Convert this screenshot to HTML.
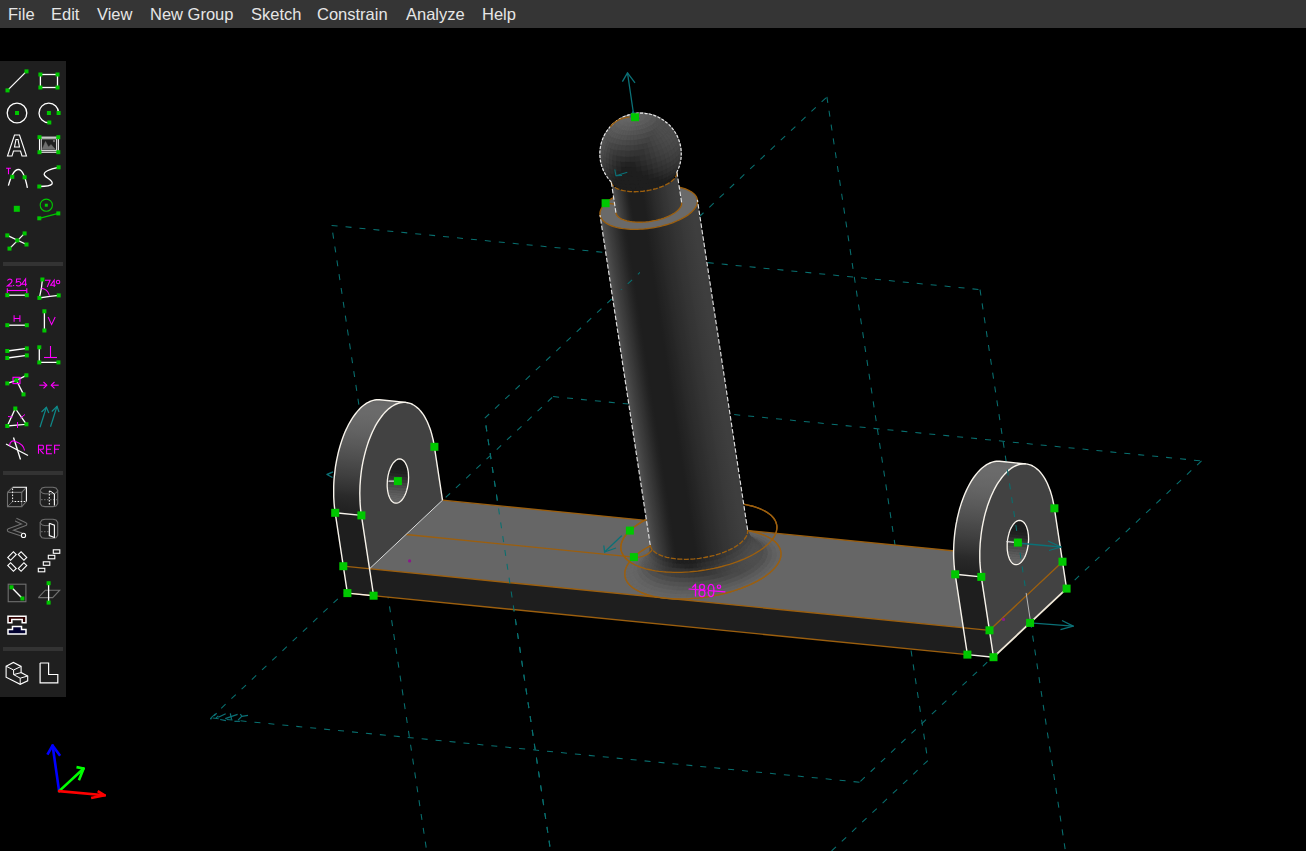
<!DOCTYPE html>
<html><head><meta charset="utf-8"><style>
html,body{margin:0;padding:0;background:#000;width:1306px;height:851px;overflow:hidden}
#menu{position:absolute;left:0;top:0;width:1306px;height:28px;background:#353535}
#menu span{position:absolute;top:4px;font-family:"Liberation Sans",sans-serif;font-size:16.5px;color:#e6e6e6;line-height:20px;white-space:nowrap}
#tb{position:absolute;left:0;top:61px;width:66px;height:636px;background:#1f1f1f}
svg{position:absolute;left:0;top:0}
</style></head><body>
<svg width="1306" height="851" viewBox="0 0 1306 851">
<path d="M980.0,289.6 L1081.0,953.4" stroke="#087070" stroke-width="1.05" fill="none"  stroke-dasharray="6 8" stroke-linecap="butt"/>
<path d="M1081.0,953.4 L432.5,889.1" stroke="#087070" stroke-width="1.05" fill="none"  stroke-dasharray="6 8" stroke-linecap="butt"/>
<path d="M432.5,889.1 L331.6,225.4" stroke="#087070" stroke-width="1.05" fill="none"  stroke-dasharray="6 8" stroke-linecap="butt"/>
<path d="M331.6,225.4 L980.0,289.6" stroke="#087070" stroke-width="1.05" fill="none"  stroke-dasharray="6 8" stroke-linecap="butt"/>
<path d="M826.9,96.9 L927.8,760.6" stroke="#087070" stroke-width="1.05" fill="none"  stroke-dasharray="6 8" stroke-linecap="butt"/>
<path d="M927.8,760.6 L585.7,1081.9" stroke="#087070" stroke-width="1.05" fill="none"  stroke-dasharray="6 8" stroke-linecap="butt"/>
<path d="M585.7,1081.9 L484.8,418.1" stroke="#087070" stroke-width="1.05" fill="none"  stroke-dasharray="6 8" stroke-linecap="butt"/>
<path d="M484.8,418.1 L826.9,96.9" stroke="#087070" stroke-width="1.05" fill="none"  stroke-dasharray="6 8" stroke-linecap="butt"/>
<path d="M1201.5,460.9 L859.5,782.2" stroke="#087070" stroke-width="1.05" fill="none"  stroke-dasharray="6 8" stroke-linecap="butt"/>
<path d="M859.5,782.2 L211.0,717.9" stroke="#087070" stroke-width="1.05" fill="none"  stroke-dasharray="6 8" stroke-linecap="butt"/>
<path d="M211.0,717.9 L553.1,396.6" stroke="#087070" stroke-width="1.05" fill="none"  stroke-dasharray="6 8" stroke-linecap="butt"/>
<path d="M553.1,396.6 L1201.5,460.9" stroke="#087070" stroke-width="1.05" fill="none"  stroke-dasharray="6 8" stroke-linecap="butt"/>
<path d="M347.4,593.1 L335.2,512.8 L361.4,515.4 L369.5,568.8 L963.3,627.7 L989.5,630.3 L993.5,657.2 Z" fill="#1e1e1e"/>
<path d="M369.5,568.8 L963.3,627.7 L1036.3,559.1 L442.5,500.2 Z" fill="#666666"/>
<path d="M967.4,654.6 L955.2,574.3 L981.3,576.9 L993.5,657.2 Z" fill="#1e1e1e"/>
<path d="M442.5,500.2 L1036.3,559.1" stroke="#9c5f0e" stroke-width="1.35" fill="none" stroke-linecap="round" />
<path d="M406.0,534.5 L633.9,557.1" stroke="#9c5f0e" stroke-width="1.35" fill="none" stroke-linecap="round" />
<path d="M771.9,570.8 L773.7,569.0 L775.3,567.2 L776.7,565.3 L778.0,563.5 L779.0,561.7 L779.8,559.9 L780.4,558.1 L780.8,556.3 L780.9,554.5 L780.9,552.7 L780.6,551.0 L780.2,549.3 L779.5,547.7 L778.6,546.1 L777.5,544.5 L776.2,543.0 L774.7,541.6 L773.0,540.2 L771.1,538.9 L769.0,537.7 L766.8,536.5 L764.3,535.4 L761.7,534.4 L759.0,533.5 L756.0,532.6 L753.0,531.8 L749.8,531.2 L746.4,530.6 L743.0,530.1 L739.4,529.7 L735.8,529.3 L732.0,529.1 L728.2,529.0 L724.3,529.0 L720.3,529.1 L716.3,529.2 L712.3,529.5 L708.2,529.8 L704.1,530.3 L700.1,530.8 L696.0,531.5 L691.9,532.2 L687.9,533.0 L683.9,533.9 L680.0,534.9 L676.1,535.9 L672.3,537.1 L668.6,538.3 L665.0,539.5 L661.4,540.9 L658.0,542.3 L654.8,543.8 L651.6,545.3 L648.6,546.9 L645.7,548.5 L643.0,550.1 L640.5,551.8 L638.1,553.6 L635.9,555.3 L633.9,557.1 L632.1,558.9 L630.5,560.7 L629.1,562.6 L627.9,564.4 L626.8,566.2 L626.0,568.1 L625.4,569.9 L625.0,571.7 L624.9,573.4 L624.9,575.2 L625.2,576.9 L625.6,578.6 L626.3,580.2 L627.2,581.8 L628.3,583.4 L629.6,584.9 L631.1,586.3 L632.8,587.7 L634.7,589.0 L636.8,590.2 L639.1,591.4 L641.5,592.5 L644.1,593.5 L646.9,594.5 L649.8,595.3 L652.9,596.1 L656.1,596.8 L659.4,597.4 L662.8,597.9 L666.4,598.3 L670.1,598.6 L673.8,598.8 L677.6,598.9 L681.5,598.9 L685.5,598.9 L689.5,598.7 L693.5,598.4 L697.6,598.1 L701.7,597.6 L705.8,597.1 L709.9,596.4 L713.9,595.7 L717.9,594.9 L721.9,594.0 L725.9,593.0 L729.7,592.0 L733.5,590.9 L737.2,589.7 L740.9,588.4 L744.4,587.0 L747.8,585.6 L751.1,584.2 L754.2,582.6 L757.2,581.1 L760.1,579.4 L762.8,577.8 L765.3,576.1 L767.7,574.3 L769.9,572.6 L771.9,570.8" stroke="#9c5f0e" stroke-width="1.35" fill="none" stroke-linejoin="round" />
<path d="M767.9,544.2 L769.7,542.4 L771.3,540.6 L772.7,538.8 L773.9,537.0 L775.0,535.1 L775.8,533.3 L776.4,531.5 L776.7,529.7 L776.9,527.9 L776.9,526.2 L776.6,524.5 L776.1,522.8 L775.5,521.1 L774.6,519.5 L773.5,518.0 L772.2,516.5 L770.7,515.1 L769.0,513.7 L767.1,512.4 L765.0,511.1 L762.7,510.0 L760.3,508.9 L757.7,507.8 L754.9,506.9 L752.0,506.0 L748.9,505.3 L745.7,504.6 L742.4,504.0 L739.0,503.5 L735.4,503.1 L731.7,502.8 L728.0,502.6 L724.2,502.5 L720.3,502.4 L716.3,502.5 L712.3,502.7 L708.3,502.9 L704.2,503.3 L700.1,503.7 L696.0,504.3 L691.9,504.9 L687.9,505.6 L683.8,506.4 L679.9,507.3 L675.9,508.3 L672.1,509.4 L668.3,510.5 L664.5,511.7 L660.9,513.0 L657.4,514.3 L654.0,515.7 L650.7,517.2 L647.6,518.7 L644.6,520.3 L641.7,521.9 L639.0,523.6 L636.5,525.3 L634.1,527.0 L631.9,528.8 L629.9,530.6 L628.1,532.4 L626.5,534.2 L625.0,536.0 L623.8,537.8 L622.8,539.7 L622.0,541.5 L621.4,543.3 L621.0,545.1 L620.8,546.9 L620.9,548.6 L621.1,550.4 L621.6,552.0 L622.3,553.7 L623.2,555.3 L624.3,556.8 L625.6,558.3 L627.1,559.8 L628.8,561.1 L630.7,562.4 L632.8,563.7 L635.0,564.9 L637.5,566.0 L640.1,567.0 L642.8,567.9 L645.7,568.8 L648.8,569.5 L652.0,570.2 L655.3,570.8 L658.8,571.3 L662.4,571.7 L666.0,572.0 L669.8,572.2 L673.6,572.4 L677.5,572.4 L681.5,572.3 L685.5,572.1 L689.5,571.9 L693.6,571.5 L697.7,571.1 L701.7,570.5 L705.8,569.9 L709.9,569.2 L713.9,568.4 L717.9,567.5 L721.8,566.5 L725.7,565.4 L729.5,564.3 L733.2,563.1 L736.8,561.8 L740.3,560.5 L743.8,559.1 L747.0,557.6 L750.2,556.1 L753.2,554.5 L756.0,552.9 L758.8,551.2 L761.3,549.5 L763.7,547.8 L765.8,546.0 L767.9,544.2" stroke="#9c5f0e" stroke-width="1.35" fill="none" stroke-linejoin="round" />
<defs><linearGradient id="tg1" gradientUnits="userSpaceOnUse" x1="405.9" y1="402.4" x2="394.3" y2="518.6"><stop offset="0.0000" stop-color="#616161"/><stop offset="0.0009" stop-color="#636363"/><stop offset="0.0036" stop-color="#656565"/><stop offset="0.0082" stop-color="#666666"/><stop offset="0.0145" stop-color="#676767"/><stop offset="0.0225" stop-color="#696969"/><stop offset="0.0324" stop-color="#696969"/><stop offset="0.0439" stop-color="#6a6a6a"/><stop offset="0.0572" stop-color="#6b6b6b"/><stop offset="0.0721" stop-color="#6b6b6b"/><stop offset="0.0886" stop-color="#6b6b6b"/><stop offset="0.1067" stop-color="#6a6a6a"/><stop offset="0.1263" stop-color="#6a6a6a"/><stop offset="0.1474" stop-color="#696969"/><stop offset="0.1699" stop-color="#686868"/><stop offset="0.1937" stop-color="#676767"/><stop offset="0.2189" stop-color="#666666"/><stop offset="0.2452" stop-color="#646464"/><stop offset="0.2727" stop-color="#636363"/><stop offset="0.3013" stop-color="#616161"/><stop offset="0.3310" stop-color="#5f5f5f"/><stop offset="0.3615" stop-color="#5c5c5c"/><stop offset="0.3929" stop-color="#5a5a5a"/><stop offset="0.4250" stop-color="#575757"/><stop offset="0.4578" stop-color="#545454"/><stop offset="0.4912" stop-color="#515151"/><stop offset="0.5251" stop-color="#4e4e4e"/><stop offset="0.5594" stop-color="#4a4a4a"/><stop offset="0.5940" stop-color="#474747"/><stop offset="0.6288" stop-color="#434343"/><stop offset="0.6638" stop-color="#404040"/><stop offset="0.6988" stop-color="#3c3c3c"/><stop offset="0.7337" stop-color="#383838"/><stop offset="0.7685" stop-color="#343434"/><stop offset="0.8030" stop-color="#303030"/><stop offset="0.8372" stop-color="#2b2b2b"/><stop offset="0.8710" stop-color="#282828"/><stop offset="0.9042" stop-color="#262626"/><stop offset="0.9369" stop-color="#242424"/><stop offset="0.9688" stop-color="#222222"/><stop offset="1.0000" stop-color="#202020"/></linearGradient></defs>
<path d="M407.8,402.7 L406.5,402.5 L405.2,402.4 L403.8,402.4 L402.5,402.4 L401.2,402.6 L399.8,402.9 L398.5,403.2 L397.1,403.7 L395.8,404.2 L394.5,404.9 L393.1,405.6 L391.8,406.5 L390.5,407.4 L389.1,408.4 L387.8,409.6 L386.5,410.8 L385.3,412.1 L384.0,413.4 L382.8,414.9 L381.5,416.5 L380.3,418.1 L379.2,419.8 L378.0,421.6 L376.9,423.4 L375.8,425.4 L374.7,427.4 L373.6,429.4 L372.6,431.6 L371.6,433.8 L370.7,436.0 L369.7,438.3 L368.8,440.7 L368.0,443.1 L367.2,445.6 L366.4,448.1 L365.7,450.6 L365.0,453.2 L364.3,455.8 L363.7,458.5 L363.1,461.1 L362.6,463.8 L362.1,466.6 L361.7,469.3 L361.3,472.1 L360.9,474.8 L360.6,477.6 L360.4,480.4 L360.2,483.2 L360.0,486.0 L359.9,488.7 L359.8,491.5 L359.8,494.2 L359.8,497.0 L359.9,499.7 L360.0,502.4 L360.2,505.1 L360.4,507.7 L360.7,510.3 L361.0,512.9 L361.4,515.4 L335.2,512.8 L334.8,510.3 L334.5,507.7 L334.3,505.1 L334.1,502.5 L333.9,499.8 L333.8,497.1 L333.7,494.4 L333.6,491.7 L333.7,488.9 L333.7,486.1 L333.8,483.4 L334.0,480.6 L334.2,477.8 L334.5,475.0 L334.8,472.2 L335.1,469.5 L335.5,466.7 L335.9,464.0 L336.4,461.2 L337.0,458.5 L337.5,455.9 L338.1,453.2 L338.8,450.6 L339.5,448.0 L340.2,445.5 L341.0,443.0 L341.8,440.5 L342.7,438.1 L343.6,435.7 L344.5,433.4 L345.4,431.2 L346.4,429.0 L347.5,426.8 L348.5,424.8 L349.6,422.8 L350.7,420.8 L351.8,419.0 L353.0,417.2 L354.2,415.5 L355.4,413.9 L356.6,412.3 L357.8,410.8 L359.1,409.5 L360.4,408.2 L361.7,407.0 L363.0,405.8 L364.3,404.8 L365.6,403.9 L366.9,403.0 L368.3,402.3 L369.6,401.6 L371.0,401.1 L372.3,400.6 L373.7,400.3 L375.0,400.0 L376.3,399.8 L377.7,399.8 L379.0,399.8 L380.3,399.9 L381.6,400.1 Z" fill="url(#tg1)"/>
<path d="M369.5,568.8 L361.4,515.4 L360.9,511.9 L360.5,508.3 L360.2,504.6 L360.0,500.9 L359.9,497.1 L359.8,493.3 L359.9,489.5 L360.0,485.7 L360.3,481.8 L360.6,477.9 L361.0,474.1 L361.5,470.2 L362.1,466.4 L362.8,462.6 L363.6,458.9 L364.5,455.2 L365.4,451.6 L366.4,448.1 L367.5,444.6 L368.6,441.2 L369.9,437.9 L371.2,434.8 L372.5,431.7 L374.0,428.7 L375.4,425.9 L377.0,423.2 L378.6,420.7 L380.2,418.3 L381.9,416.0 L383.6,413.9 L385.3,412.0 L387.1,410.2 L388.9,408.6 L390.8,407.2 L392.6,406.0 L394.5,404.9 L396.3,404.0 L398.2,403.3 L400.1,402.8 L401.9,402.5 L403.8,402.4 L405.6,402.4 L407.4,402.7 L409.2,403.1 L411.0,403.7 L412.7,404.5 L414.4,405.5 L416.1,406.7 L417.7,408.1 L419.3,409.6 L420.8,411.3 L422.3,413.2 L423.7,415.2 L425.0,417.4 L426.3,419.8 L427.5,422.3 L428.6,424.9 L429.7,427.7 L430.7,430.6 L431.6,433.6 L432.4,436.8 L433.2,440.0 L433.8,443.3 L434.4,446.8 L442.5,500.2 Z" fill="#424242"/>
<clipPath id="hc1081"><path d="M408.2,471.4 L407.8,469.5 L407.4,467.7 L406.8,466.1 L406.2,464.6 L405.5,463.2 L404.7,462.0 L403.9,461.0 L403.0,460.2 L402.1,459.6 L401.1,459.2 L400.1,459.0 L399.0,459.0 L398.0,459.2 L396.9,459.7 L395.9,460.3 L394.9,461.2 L393.9,462.2 L392.9,463.4 L392.0,464.8 L391.2,466.4 L390.4,468.1 L389.7,469.9 L389.0,471.8 L388.5,473.8 L388.0,475.9 L387.7,478.0 L387.4,480.2 L387.3,482.4 L387.2,484.5 L387.2,486.6 L387.4,488.7 L387.6,490.7 L388.0,492.6 L388.4,494.4 L388.9,496.1 L389.6,497.6 L390.3,499.0 L391.0,500.2 L391.9,501.2 L392.8,502.0 L393.7,502.6 L394.7,503.0 L395.7,503.2 L396.8,503.2 L397.8,502.9 L398.9,502.5 L399.9,501.8 L400.9,501.0 L401.9,500.0 L402.9,498.7 L403.8,497.3 L404.6,495.8 L405.4,494.1 L406.1,492.3 L406.7,490.4 L407.3,488.3 L407.7,486.3 L408.1,484.1 L408.4,482.0 L408.5,479.8 L408.6,477.6 L408.5,475.5 L408.4,473.4 L408.2,471.4 Z"/></clipPath>
<g clip-path="url(#hc1081)">
<path d="M408.2,471.4 L407.8,469.5 L407.4,467.7 L406.8,466.1 L406.2,464.6 L405.5,463.2 L404.7,462.0 L403.9,461.0 L403.0,460.2 L402.1,459.6 L401.1,459.2 L400.1,459.0 L399.0,459.0 L398.0,459.2 L396.9,459.7 L395.9,460.3 L394.9,461.2 L393.9,462.2 L392.9,463.4 L392.0,464.8 L391.2,466.4 L390.4,468.1 L389.7,469.9 L389.0,471.8 L388.5,473.8 L388.0,475.9 L387.7,478.0 L387.4,480.2 L387.3,482.4 L387.2,484.5 L387.2,486.6 L387.4,488.7 L387.6,490.7 L388.0,492.6 L388.4,494.4 L388.9,496.1 L389.6,497.6 L390.3,499.0 L391.0,500.2 L391.9,501.2 L392.8,502.0 L393.7,502.6 L394.7,503.0 L395.7,503.2 L396.8,503.2 L397.8,502.9 L398.9,502.5 L399.9,501.8 L400.9,501.0 L401.9,500.0 L402.9,498.7 L403.8,497.3 L404.6,495.8 L405.4,494.1 L406.1,492.3 L406.7,490.4 L407.3,488.3 L407.7,486.3 L408.1,484.1 L408.4,482.0 L408.5,479.8 L408.6,477.6 L408.5,475.5 L408.4,473.4 L408.2,471.4 Z" fill="#181818"/>
<path d="M408.2,471.4 L407.7,468.9 L381.5,466.3 L382.0,468.8 Z" fill="#1e1e1e" stroke="#1e1e1e" stroke-width="0.7"/>
<path d="M407.7,468.9 L407.0,466.6 L380.9,464.0 L381.5,466.3 Z" fill="#1e1e1e" stroke="#1e1e1e" stroke-width="0.7"/>
<path d="M407.0,466.6 L406.2,464.6 L380.0,462.0 L380.9,464.0 Z" fill="#1e1e1e" stroke="#1e1e1e" stroke-width="0.7"/>
<path d="M406.2,464.6 L405.3,462.8 L379.1,460.2 L380.0,462.0 Z" fill="#1e1e1e" stroke="#1e1e1e" stroke-width="0.7"/>
<path d="M405.3,462.8 L404.2,461.3 L378.0,458.7 L379.1,460.2 Z" fill="#1e1e1e" stroke="#1e1e1e" stroke-width="0.7"/>
<path d="M404.2,461.3 L403.0,460.2 L376.8,457.6 L378.0,458.7 Z" fill="#1e1e1e" stroke="#1e1e1e" stroke-width="0.7"/>
<path d="M403.0,460.2 L401.7,459.4 L375.6,456.8 L376.8,457.6 Z" fill="#1e1e1e" stroke="#1e1e1e" stroke-width="0.7"/>
<path d="M401.7,459.4 L400.4,459.0 L374.2,456.4 L375.6,456.8 Z" fill="#1e1e1e" stroke="#1e1e1e" stroke-width="0.7"/>
<path d="M400.4,459.0 L399.0,459.0 L372.9,456.4 L374.2,456.4 Z" fill="#1e1e1e" stroke="#1e1e1e" stroke-width="0.7"/>
<path d="M399.0,459.0 L397.6,459.3 L371.5,456.8 L372.9,456.4 Z" fill="#1e1e1e" stroke="#1e1e1e" stroke-width="0.7"/>
<path d="M397.6,459.3 L396.2,460.1 L370.1,457.5 L371.5,456.8 Z" fill="#1e1e1e" stroke="#1e1e1e" stroke-width="0.7"/>
<path d="M396.2,460.1 L394.9,461.2 L368.7,458.6 L370.1,457.5 Z" fill="#1e1e1e" stroke="#1e1e1e" stroke-width="0.7"/>
<path d="M394.9,461.2 L393.6,462.6 L367.4,460.0 L368.7,458.6 Z" fill="#1e1e1e" stroke="#1e1e1e" stroke-width="0.7"/>
<path d="M393.6,462.6 L392.3,464.3 L366.1,461.7 L367.4,460.0 Z" fill="#1e1e1e" stroke="#1e1e1e" stroke-width="0.7"/>
<path d="M392.3,464.3 L391.2,466.4 L365.0,463.8 L366.1,461.7 Z" fill="#1e1e1e" stroke="#1e1e1e" stroke-width="0.7"/>
<path d="M391.2,466.4 L390.1,468.7 L364.0,466.1 L365.0,463.8 Z" fill="#1e1e1e" stroke="#1e1e1e" stroke-width="0.7"/>
<path d="M390.1,468.7 L389.2,471.1 L363.1,468.6 L364.0,466.1 Z" fill="#1e1e1e" stroke="#1e1e1e" stroke-width="0.7"/>
<path d="M389.2,471.1 L388.5,473.8 L362.3,471.2 L363.1,468.6 Z" fill="#1e1e1e" stroke="#1e1e1e" stroke-width="0.7"/>
<path d="M388.5,473.8 L387.9,476.6 L361.7,474.0 L362.3,471.2 Z" fill="#1e1e1e" stroke="#1e1e1e" stroke-width="0.7"/>
<path d="M387.9,476.6 L387.5,479.5 L361.3,476.9 L361.7,474.0 Z" fill="#1e1e1e" stroke="#1e1e1e" stroke-width="0.7"/>
<path d="M387.5,479.5 L387.3,482.4 L361.1,479.8 L361.3,476.9 Z" fill="#1e1e1e" stroke="#1e1e1e" stroke-width="0.7"/>
<path d="M387.3,482.4 L387.2,485.2 L361.0,482.6 L361.1,479.8 Z" fill="#1e1e1e" stroke="#1e1e1e" stroke-width="0.7"/>
<path d="M387.2,485.2 L387.3,488.0 L361.2,485.4 L361.0,482.6 Z" fill="#1e1e1e" stroke="#1e1e1e" stroke-width="0.7"/>
<path d="M387.3,488.0 L387.6,490.7 L361.5,488.1 L361.2,485.4 Z" fill="#1e1e1e" stroke="#1e1e1e" stroke-width="0.7"/>
<path d="M387.6,490.7 L388.1,493.2 L361.9,490.6 L361.5,488.1 Z" fill="#222222" stroke="#222222" stroke-width="0.7"/>
<path d="M388.1,493.2 L388.8,495.5 L362.6,492.9 L361.9,490.6 Z" fill="#272727" stroke="#272727" stroke-width="0.7"/>
<path d="M388.8,495.5 L389.6,497.6 L363.4,495.0 L362.6,492.9 Z" fill="#303030" stroke="#303030" stroke-width="0.7"/>
<path d="M389.6,497.6 L390.5,499.4 L364.3,496.8 L363.4,495.0 Z" fill="#3a3a3a" stroke="#3a3a3a" stroke-width="0.7"/>
<path d="M390.5,499.4 L391.6,500.8 L365.4,498.3 L364.3,496.8 Z" fill="#434343" stroke="#434343" stroke-width="0.7"/>
<path d="M391.6,500.8 L392.8,502.0 L366.6,499.4 L365.4,498.3 Z" fill="#4b4b4b" stroke="#4b4b4b" stroke-width="0.7"/>
<path d="M392.8,502.0 L394.0,502.7 L367.9,500.2 L366.6,499.4 Z" fill="#525252" stroke="#525252" stroke-width="0.7"/>
<path d="M394.0,502.7 L395.4,503.1 L369.2,500.6 L367.9,500.2 Z" fill="#595959" stroke="#595959" stroke-width="0.7"/>
<path d="M395.4,503.1 L396.8,503.2 L370.6,500.6 L369.2,500.6 Z" fill="#5e5e5e" stroke="#5e5e5e" stroke-width="0.7"/>
<path d="M396.8,503.2 L398.2,502.8 L372.0,500.2 L370.6,500.6 Z" fill="#626262" stroke="#626262" stroke-width="0.7"/>
<path d="M398.2,502.8 L399.6,502.1 L373.4,499.5 L372.0,500.2 Z" fill="#646464" stroke="#646464" stroke-width="0.7"/>
<path d="M399.6,502.1 L400.9,501.0 L374.8,498.4 L373.4,499.5 Z" fill="#666666" stroke="#666666" stroke-width="0.7"/>
<path d="M400.9,501.0 L402.2,499.6 L376.1,497.0 L374.8,498.4 Z" fill="#656565" stroke="#656565" stroke-width="0.7"/>
<path d="M402.2,499.6 L403.5,497.8 L377.3,495.2 L376.1,497.0 Z" fill="#646464" stroke="#646464" stroke-width="0.7"/>
<path d="M403.5,497.8 L404.6,495.8 L378.4,493.2 L377.3,495.2 Z" fill="#616161" stroke="#616161" stroke-width="0.7"/>
<path d="M404.6,495.8 L405.6,493.5 L379.5,490.9 L378.4,493.2 Z" fill="#5d5d5d" stroke="#5d5d5d" stroke-width="0.7"/>
<path d="M405.6,493.5 L406.5,491.0 L380.4,488.4 L379.5,490.9 Z" fill="#585858" stroke="#585858" stroke-width="0.7"/>
<path d="M406.5,491.0 L407.3,488.3 L381.1,485.8 L380.4,488.4 Z" fill="#515151" stroke="#515151" stroke-width="0.7"/>
<path d="M407.3,488.3 L407.9,485.6 L381.7,483.0 L381.1,485.8 Z" fill="#4a4a4a" stroke="#4a4a4a" stroke-width="0.7"/>
<path d="M407.9,485.6 L408.3,482.7 L382.1,480.1 L381.7,483.0 Z" fill="#414141" stroke="#414141" stroke-width="0.7"/>
<path d="M408.3,482.7 L408.5,479.8 L382.4,477.2 L382.1,480.1 Z" fill="#383838" stroke="#383838" stroke-width="0.7"/>
<path d="M408.5,479.8 L408.6,476.9 L382.4,474.3 L382.4,477.2 Z" fill="#2f2f2f" stroke="#2f2f2f" stroke-width="0.7"/>
<path d="M408.6,476.9 L408.5,474.1 L382.3,471.5 L382.4,474.3 Z" fill="#262626" stroke="#262626" stroke-width="0.7"/>
<path d="M408.5,474.1 L408.2,471.4 L382.0,468.8 L382.3,471.5 Z" fill="#212121" stroke="#212121" stroke-width="0.7"/>
</g>
<path d="M771.9,570.8 L774.8,567.8 L770.5,567.2 L767.8,570.1 Z" fill="#646464" stroke="#646464" stroke-width="0.7"/>
<path d="M774.8,567.8 L777.2,564.7 L772.8,564.4 L770.5,567.2 Z" fill="#646464" stroke="#646464" stroke-width="0.7"/>
<path d="M777.2,564.7 L779.0,561.7 L774.5,561.5 L772.8,564.4 Z" fill="#646464" stroke="#646464" stroke-width="0.7"/>
<path d="M779.0,561.7 L780.2,558.7 L775.6,558.6 L774.5,561.5 Z" fill="#646464" stroke="#646464" stroke-width="0.7"/>
<path d="M780.2,558.7 L780.9,555.7 L776.2,555.8 L775.6,558.6 Z" fill="#646464" stroke="#646464" stroke-width="0.7"/>
<path d="M780.9,555.7 L780.9,552.7 L776.3,553.1 L776.2,555.8 Z" fill="#646464" stroke="#646464" stroke-width="0.7"/>
<path d="M780.9,552.7 L780.4,549.9 L775.8,550.4 L776.3,553.1 Z" fill="#646464" stroke="#646464" stroke-width="0.7"/>
<path d="M780.4,549.9 L779.2,547.2 L774.7,547.8 L775.8,550.4 Z" fill="#656565" stroke="#656565" stroke-width="0.7"/>
<path d="M779.2,547.2 L777.5,544.5 L773.1,545.4 L774.7,547.8 Z" fill="#656565" stroke="#656565" stroke-width="0.7"/>
<path d="M777.5,544.5 L775.2,542.1 L770.9,543.0 L773.1,545.4 Z" fill="#656565" stroke="#656565" stroke-width="0.7"/>
<path d="M775.2,542.1 L772.4,539.8 L768.3,540.9 L770.9,543.0 Z" fill="#656565" stroke="#656565" stroke-width="0.7"/>
<path d="M772.4,539.8 L769.0,537.7 L765.1,538.9 L768.3,540.9 Z" fill="#656565" stroke="#656565" stroke-width="0.7"/>
<path d="M769.0,537.7 L765.2,535.8 L761.5,537.1 L765.1,538.9 Z" fill="#656565" stroke="#656565" stroke-width="0.7"/>
<path d="M765.2,535.8 L760.8,534.1 L757.4,535.5 L761.5,537.1 Z" fill="#656565" stroke="#656565" stroke-width="0.7"/>
<path d="M760.8,534.1 L756.0,532.6 L752.9,534.1 L757.4,535.5 Z" fill="#656565" stroke="#656565" stroke-width="0.7"/>
<path d="M756.0,532.6 L750.9,531.4 L748.0,533.0 L752.9,534.1 Z" fill="#656565" stroke="#656565" stroke-width="0.7"/>
<path d="M750.9,531.4 L745.3,530.4 L742.8,532.0 L748.0,533.0 Z" fill="#656565" stroke="#656565" stroke-width="0.7"/>
<path d="M745.3,530.4 L739.4,529.7 L737.2,531.3 L742.8,532.0 Z" fill="#656565" stroke="#656565" stroke-width="0.7"/>
<path d="M739.4,529.7 L733.3,529.2 L731.5,530.9 L737.2,531.3 Z" fill="#666666" stroke="#666666" stroke-width="0.7"/>
<path d="M733.3,529.2 L726.9,529.0 L725.4,530.7 L731.5,530.9 Z" fill="#666666" stroke="#666666" stroke-width="0.7"/>
<path d="M726.9,529.0 L720.3,529.1 L719.3,530.8 L725.4,530.7 Z" fill="#666666" stroke="#666666" stroke-width="0.7"/>
<path d="M720.3,529.1 L713.6,529.4 L713.0,531.1 L719.3,530.8 Z" fill="#666666" stroke="#666666" stroke-width="0.7"/>
<path d="M713.6,529.4 L706.9,530.0 L706.6,531.6 L713.0,531.1 Z" fill="#666666" stroke="#666666" stroke-width="0.7"/>
<path d="M706.9,530.0 L700.1,530.8 L700.2,532.4 L706.6,531.6 Z" fill="#666666" stroke="#666666" stroke-width="0.7"/>
<path d="M700.1,530.8 L693.3,531.9 L693.8,533.5 L700.2,532.4 Z" fill="#666666" stroke="#666666" stroke-width="0.7"/>
<path d="M693.3,531.9 L686.6,533.3 L687.5,534.8 L693.8,533.5 Z" fill="#666666" stroke="#666666" stroke-width="0.7"/>
<path d="M686.6,533.3 L680.0,534.9 L681.3,536.2 L687.5,534.8 Z" fill="#666666" stroke="#666666" stroke-width="0.7"/>
<path d="M680.0,534.9 L673.5,536.7 L675.2,537.9 L681.3,536.2 Z" fill="#666666" stroke="#666666" stroke-width="0.7"/>
<path d="M673.5,536.7 L667.4,538.7 L669.4,539.8 L675.2,537.9 Z" fill="#666666" stroke="#666666" stroke-width="0.7"/>
<path d="M667.4,538.7 L661.4,540.9 L663.8,541.9 L669.4,539.8 Z" fill="#666666" stroke="#666666" stroke-width="0.7"/>
<path d="M661.4,540.9 L655.8,543.3 L658.5,544.2 L663.8,541.9 Z" fill="#666666" stroke="#666666" stroke-width="0.7"/>
<path d="M655.8,543.3 L650.6,545.8 L653.6,546.5 L658.5,544.2 Z" fill="#676767" stroke="#676767" stroke-width="0.7"/>
<path d="M650.6,545.8 L645.7,548.5 L649.0,549.1 L653.6,546.5 Z" fill="#676767" stroke="#676767" stroke-width="0.7"/>
<path d="M645.7,548.5 L641.3,551.3 L644.9,551.7 L649.0,549.1 Z" fill="#676767" stroke="#676767" stroke-width="0.7"/>
<path d="M641.3,551.3 L637.4,554.2 L641.2,554.4 L644.9,551.7 Z" fill="#676767" stroke="#676767" stroke-width="0.7"/>
<path d="M637.4,554.2 L633.9,557.1 L637.9,557.2 L641.2,554.4 Z" fill="#676767" stroke="#676767" stroke-width="0.7"/>
<path d="M633.9,557.1 L631.0,560.1 L635.2,560.0 L637.9,557.2 Z" fill="#676767" stroke="#676767" stroke-width="0.7"/>
<path d="M631.0,560.1 L628.6,563.2 L632.9,562.9 L635.2,560.0 Z" fill="#676767" stroke="#676767" stroke-width="0.7"/>
<path d="M628.6,563.2 L626.8,566.2 L631.2,565.8 L632.9,562.9 Z" fill="#676767" stroke="#676767" stroke-width="0.7"/>
<path d="M626.8,566.2 L625.6,569.3 L630.1,568.6 L631.2,565.8 Z" fill="#676767" stroke="#676767" stroke-width="0.7"/>
<path d="M625.6,569.3 L625.0,572.3 L629.5,571.4 L630.1,568.6 Z" fill="#666666" stroke="#666666" stroke-width="0.7"/>
<path d="M625.0,572.3 L624.9,575.2 L629.4,574.2 L629.5,571.4 Z" fill="#666666" stroke="#666666" stroke-width="0.7"/>
<path d="M624.9,575.2 L625.5,578.0 L630.0,576.9 L629.4,574.2 Z" fill="#666666" stroke="#666666" stroke-width="0.7"/>
<path d="M625.5,578.0 L626.6,580.8 L631.0,579.5 L630.0,576.9 Z" fill="#666666" stroke="#666666" stroke-width="0.7"/>
<path d="M626.6,580.8 L628.3,583.4 L632.6,581.9 L631.0,579.5 Z" fill="#666666" stroke="#666666" stroke-width="0.7"/>
<path d="M628.3,583.4 L630.6,585.8 L634.8,584.2 L632.6,581.9 Z" fill="#666666" stroke="#666666" stroke-width="0.7"/>
<path d="M630.6,585.8 L633.4,588.1 L637.5,586.4 L634.8,584.2 Z" fill="#666666" stroke="#666666" stroke-width="0.7"/>
<path d="M633.4,588.1 L636.8,590.2 L640.6,588.4 L637.5,586.4 Z" fill="#666666" stroke="#666666" stroke-width="0.7"/>
<path d="M636.8,590.2 L640.7,592.2 L644.3,590.2 L640.6,588.4 Z" fill="#666666" stroke="#666666" stroke-width="0.7"/>
<path d="M640.7,592.2 L645.0,593.8 L648.3,591.8 L644.3,590.2 Z" fill="#666666" stroke="#666666" stroke-width="0.7"/>
<path d="M645.0,593.8 L649.8,595.3 L652.8,593.2 L648.3,591.8 Z" fill="#666666" stroke="#666666" stroke-width="0.7"/>
<path d="M649.8,595.3 L655.0,596.5 L657.7,594.3 L652.8,593.2 Z" fill="#666666" stroke="#666666" stroke-width="0.7"/>
<path d="M655.0,596.5 L660.5,597.5 L663.0,595.2 L657.7,594.3 Z" fill="#666666" stroke="#666666" stroke-width="0.7"/>
<path d="M660.5,597.5 L666.4,598.3 L668.5,595.9 L663.0,595.2 Z" fill="#656565" stroke="#656565" stroke-width="0.7"/>
<path d="M666.4,598.3 L672.5,598.7 L674.3,596.4 L668.5,595.9 Z" fill="#656565" stroke="#656565" stroke-width="0.7"/>
<path d="M672.5,598.7 L678.9,598.9 L680.3,596.5 L674.3,596.4 Z" fill="#656565" stroke="#656565" stroke-width="0.7"/>
<path d="M678.9,598.9 L685.5,598.9 L686.5,596.5 L680.3,596.5 Z" fill="#656565" stroke="#656565" stroke-width="0.7"/>
<path d="M685.5,598.9 L692.2,598.5 L692.8,596.2 L686.5,596.5 Z" fill="#656565" stroke="#656565" stroke-width="0.7"/>
<path d="M692.2,598.5 L699.0,597.9 L699.1,595.6 L692.8,596.2 Z" fill="#656565" stroke="#656565" stroke-width="0.7"/>
<path d="M699.0,597.9 L705.8,597.1 L705.6,594.8 L699.1,595.6 Z" fill="#656565" stroke="#656565" stroke-width="0.7"/>
<path d="M705.8,597.1 L712.6,596.0 L711.9,593.8 L705.6,594.8 Z" fill="#656565" stroke="#656565" stroke-width="0.7"/>
<path d="M712.6,596.0 L719.3,594.6 L718.3,592.5 L711.9,593.8 Z" fill="#656565" stroke="#656565" stroke-width="0.7"/>
<path d="M719.3,594.6 L725.9,593.0 L724.5,591.0 L718.3,592.5 Z" fill="#656565" stroke="#656565" stroke-width="0.7"/>
<path d="M725.9,593.0 L732.3,591.2 L730.5,589.3 L724.5,591.0 Z" fill="#646464" stroke="#646464" stroke-width="0.7"/>
<path d="M732.3,591.2 L738.5,589.2 L736.3,587.4 L730.5,589.3 Z" fill="#646464" stroke="#646464" stroke-width="0.7"/>
<path d="M738.5,589.2 L744.4,587.0 L741.9,585.4 L736.3,587.4 Z" fill="#646464" stroke="#646464" stroke-width="0.7"/>
<path d="M744.4,587.0 L750.0,584.7 L747.2,583.1 L741.9,585.4 Z" fill="#646464" stroke="#646464" stroke-width="0.7"/>
<path d="M750.0,584.7 L755.2,582.1 L752.1,580.7 L747.2,583.1 Z" fill="#646464" stroke="#646464" stroke-width="0.7"/>
<path d="M755.2,582.1 L760.1,579.4 L756.7,578.2 L752.1,580.7 Z" fill="#646464" stroke="#646464" stroke-width="0.7"/>
<path d="M760.1,579.4 L764.5,576.7 L760.8,575.6 L756.7,578.2 Z" fill="#646464" stroke="#646464" stroke-width="0.7"/>
<path d="M764.5,576.7 L768.4,573.8 L764.6,572.9 L760.8,575.6 Z" fill="#646464" stroke="#646464" stroke-width="0.7"/>
<path d="M768.4,573.8 L771.9,570.8 L767.8,570.1 L764.6,572.9 Z" fill="#646464" stroke="#646464" stroke-width="0.7"/>
<path d="M767.8,570.1 L770.5,567.2 L766.3,566.0 L763.7,568.7 Z" fill="#606060" stroke="#606060" stroke-width="0.7"/>
<path d="M770.5,567.2 L772.8,564.4 L768.4,563.3 L766.3,566.0 Z" fill="#606060" stroke="#606060" stroke-width="0.7"/>
<path d="M772.8,564.4 L774.5,561.5 L770.0,560.7 L768.4,563.3 Z" fill="#606060" stroke="#606060" stroke-width="0.7"/>
<path d="M774.5,561.5 L775.6,558.6 L771.1,558.0 L770.0,560.7 Z" fill="#606060" stroke="#606060" stroke-width="0.7"/>
<path d="M775.6,558.6 L776.2,555.8 L771.6,555.3 L771.1,558.0 Z" fill="#606060" stroke="#606060" stroke-width="0.7"/>
<path d="M776.2,555.8 L776.3,553.1 L771.7,552.7 L771.6,555.3 Z" fill="#606060" stroke="#606060" stroke-width="0.7"/>
<path d="M776.3,553.1 L775.8,550.4 L771.2,550.2 L771.7,552.7 Z" fill="#616161" stroke="#616161" stroke-width="0.7"/>
<path d="M775.8,550.4 L774.7,547.8 L770.2,547.8 L771.2,550.2 Z" fill="#616161" stroke="#616161" stroke-width="0.7"/>
<path d="M774.7,547.8 L773.1,545.4 L768.7,545.5 L770.2,547.8 Z" fill="#616161" stroke="#616161" stroke-width="0.7"/>
<path d="M773.1,545.4 L770.9,543.0 L766.7,543.3 L768.7,545.5 Z" fill="#616161" stroke="#616161" stroke-width="0.7"/>
<path d="M770.9,543.0 L768.3,540.9 L764.1,541.3 L766.7,543.3 Z" fill="#616161" stroke="#616161" stroke-width="0.7"/>
<path d="M768.3,540.9 L765.1,538.9 L761.2,539.4 L764.1,541.3 Z" fill="#626262" stroke="#626262" stroke-width="0.7"/>
<path d="M765.1,538.9 L761.5,537.1 L757.8,537.7 L761.2,539.4 Z" fill="#626262" stroke="#626262" stroke-width="0.7"/>
<path d="M761.5,537.1 L757.4,535.5 L753.9,536.2 L757.8,537.7 Z" fill="#626262" stroke="#626262" stroke-width="0.7"/>
<path d="M757.4,535.5 L752.9,534.1 L749.7,534.9 L753.9,536.2 Z" fill="#636363" stroke="#636363" stroke-width="0.7"/>
<path d="M752.9,534.1 L748.0,533.0 L745.1,533.8 L749.7,534.9 Z" fill="#636363" stroke="#636363" stroke-width="0.7"/>
<path d="M748.0,533.0 L742.8,532.0 L740.2,533.0 L745.1,533.8 Z" fill="#636363" stroke="#636363" stroke-width="0.7"/>
<path d="M742.8,532.0 L737.2,531.3 L735.0,532.3 L740.2,533.0 Z" fill="#636363" stroke="#636363" stroke-width="0.7"/>
<path d="M737.2,531.3 L731.5,530.9 L729.6,531.9 L735.0,532.3 Z" fill="#646464" stroke="#646464" stroke-width="0.7"/>
<path d="M731.5,530.9 L725.4,530.7 L723.9,531.7 L729.6,531.9 Z" fill="#646464" stroke="#646464" stroke-width="0.7"/>
<path d="M725.4,530.7 L719.3,530.8 L718.1,531.8 L723.9,531.7 Z" fill="#646464" stroke="#646464" stroke-width="0.7"/>
<path d="M719.3,530.8 L713.0,531.1 L712.2,532.1 L718.1,531.8 Z" fill="#656565" stroke="#656565" stroke-width="0.7"/>
<path d="M713.0,531.1 L706.6,531.6 L706.2,532.6 L712.2,532.1 Z" fill="#656565" stroke="#656565" stroke-width="0.7"/>
<path d="M706.6,531.6 L700.2,532.4 L700.2,533.4 L706.2,532.6 Z" fill="#656565" stroke="#656565" stroke-width="0.7"/>
<path d="M700.2,532.4 L693.8,533.5 L694.2,534.3 L700.2,533.4 Z" fill="#656565" stroke="#656565" stroke-width="0.7"/>
<path d="M693.8,533.5 L687.5,534.8 L688.2,535.5 L694.2,534.3 Z" fill="#666666" stroke="#666666" stroke-width="0.7"/>
<path d="M687.5,534.8 L681.3,536.2 L682.4,536.9 L688.2,535.5 Z" fill="#666666" stroke="#666666" stroke-width="0.7"/>
<path d="M681.3,536.2 L675.2,537.9 L676.8,538.5 L682.4,536.9 Z" fill="#666666" stroke="#666666" stroke-width="0.7"/>
<path d="M675.2,537.9 L669.4,539.8 L671.3,540.3 L676.8,538.5 Z" fill="#666666" stroke="#666666" stroke-width="0.7"/>
<path d="M669.4,539.8 L663.8,541.9 L666.0,542.3 L671.3,540.3 Z" fill="#666666" stroke="#666666" stroke-width="0.7"/>
<path d="M663.8,541.9 L658.5,544.2 L661.1,544.4 L666.0,542.3 Z" fill="#676767" stroke="#676767" stroke-width="0.7"/>
<path d="M658.5,544.2 L653.6,546.5 L656.4,546.6 L661.1,544.4 Z" fill="#676767" stroke="#676767" stroke-width="0.7"/>
<path d="M653.6,546.5 L649.0,549.1 L652.2,549.0 L656.4,546.6 Z" fill="#676767" stroke="#676767" stroke-width="0.7"/>
<path d="M649.0,549.1 L644.9,551.7 L648.3,551.4 L652.2,549.0 Z" fill="#676767" stroke="#676767" stroke-width="0.7"/>
<path d="M644.9,551.7 L641.2,554.4 L644.8,554.0 L648.3,551.4 Z" fill="#676767" stroke="#676767" stroke-width="0.7"/>
<path d="M641.2,554.4 L637.9,557.2 L641.7,556.6 L644.8,554.0 Z" fill="#676767" stroke="#676767" stroke-width="0.7"/>
<path d="M637.9,557.2 L635.2,560.0 L639.1,559.3 L641.7,556.6 Z" fill="#676767" stroke="#676767" stroke-width="0.7"/>
<path d="M635.2,560.0 L632.9,562.9 L637.0,562.0 L639.1,559.3 Z" fill="#676767" stroke="#676767" stroke-width="0.7"/>
<path d="M632.9,562.9 L631.2,565.8 L635.4,564.7 L637.0,562.0 Z" fill="#676767" stroke="#676767" stroke-width="0.7"/>
<path d="M631.2,565.8 L630.1,568.6 L634.4,567.3 L635.4,564.7 Z" fill="#676767" stroke="#676767" stroke-width="0.7"/>
<path d="M630.1,568.6 L629.5,571.4 L633.8,570.0 L634.4,567.3 Z" fill="#676767" stroke="#676767" stroke-width="0.7"/>
<path d="M629.5,571.4 L629.4,574.2 L633.8,572.6 L633.8,570.0 Z" fill="#666666" stroke="#666666" stroke-width="0.7"/>
<path d="M629.4,574.2 L630.0,576.9 L634.2,575.1 L633.8,572.6 Z" fill="#666666" stroke="#666666" stroke-width="0.7"/>
<path d="M630.0,576.9 L631.0,579.5 L635.2,577.5 L634.2,575.1 Z" fill="#666666" stroke="#666666" stroke-width="0.7"/>
<path d="M631.0,579.5 L632.6,581.9 L636.8,579.8 L635.2,577.5 Z" fill="#666666" stroke="#666666" stroke-width="0.7"/>
<path d="M632.6,581.9 L634.8,584.2 L638.8,582.0 L636.8,579.8 Z" fill="#666666" stroke="#666666" stroke-width="0.7"/>
<path d="M634.8,584.2 L637.5,586.4 L641.3,584.0 L638.8,582.0 Z" fill="#656565" stroke="#656565" stroke-width="0.7"/>
<path d="M637.5,586.4 L640.6,588.4 L644.3,585.9 L641.3,584.0 Z" fill="#656565" stroke="#656565" stroke-width="0.7"/>
<path d="M640.6,588.4 L644.3,590.2 L647.7,587.6 L644.3,585.9 Z" fill="#656565" stroke="#656565" stroke-width="0.7"/>
<path d="M644.3,590.2 L648.3,591.8 L651.5,589.1 L647.7,587.6 Z" fill="#656565" stroke="#656565" stroke-width="0.7"/>
<path d="M648.3,591.8 L652.8,593.2 L655.7,590.4 L651.5,589.1 Z" fill="#646464" stroke="#646464" stroke-width="0.7"/>
<path d="M652.8,593.2 L657.7,594.3 L660.3,591.5 L655.7,590.4 Z" fill="#646464" stroke="#646464" stroke-width="0.7"/>
<path d="M657.7,594.3 L663.0,595.2 L665.2,592.3 L660.3,591.5 Z" fill="#646464" stroke="#646464" stroke-width="0.7"/>
<path d="M663.0,595.2 L668.5,595.9 L670.4,593.0 L665.2,592.3 Z" fill="#636363" stroke="#636363" stroke-width="0.7"/>
<path d="M668.5,595.9 L674.3,596.4 L675.9,593.4 L670.4,593.0 Z" fill="#636363" stroke="#636363" stroke-width="0.7"/>
<path d="M674.3,596.4 L680.3,596.5 L681.5,593.6 L675.9,593.4 Z" fill="#636363" stroke="#636363" stroke-width="0.7"/>
<path d="M680.3,596.5 L686.5,596.5 L687.3,593.5 L681.5,593.6 Z" fill="#636363" stroke="#636363" stroke-width="0.7"/>
<path d="M686.5,596.5 L692.8,596.2 L693.2,593.2 L687.3,593.5 Z" fill="#626262" stroke="#626262" stroke-width="0.7"/>
<path d="M692.8,596.2 L699.1,595.6 L699.2,592.7 L693.2,593.2 Z" fill="#626262" stroke="#626262" stroke-width="0.7"/>
<path d="M699.1,595.6 L705.6,594.8 L705.2,591.9 L699.2,592.7 Z" fill="#626262" stroke="#626262" stroke-width="0.7"/>
<path d="M705.6,594.8 L711.9,593.8 L711.2,591.0 L705.2,591.9 Z" fill="#616161" stroke="#616161" stroke-width="0.7"/>
<path d="M711.9,593.8 L718.3,592.5 L717.2,589.8 L711.2,591.0 Z" fill="#616161" stroke="#616161" stroke-width="0.7"/>
<path d="M718.3,592.5 L724.5,591.0 L723.0,588.4 L717.2,589.8 Z" fill="#616161" stroke="#616161" stroke-width="0.7"/>
<path d="M724.5,591.0 L730.5,589.3 L728.7,586.8 L723.0,588.4 Z" fill="#616161" stroke="#616161" stroke-width="0.7"/>
<path d="M730.5,589.3 L736.3,587.4 L734.2,585.0 L728.7,586.8 Z" fill="#616161" stroke="#616161" stroke-width="0.7"/>
<path d="M736.3,587.4 L741.9,585.4 L739.4,583.1 L734.2,585.0 Z" fill="#606060" stroke="#606060" stroke-width="0.7"/>
<path d="M741.9,585.4 L747.2,583.1 L744.3,581.0 L739.4,583.1 Z" fill="#606060" stroke="#606060" stroke-width="0.7"/>
<path d="M747.2,583.1 L752.1,580.7 L749.0,578.7 L744.3,581.0 Z" fill="#606060" stroke="#606060" stroke-width="0.7"/>
<path d="M752.1,580.7 L756.7,578.2 L753.3,576.3 L749.0,578.7 Z" fill="#606060" stroke="#606060" stroke-width="0.7"/>
<path d="M756.7,578.2 L760.8,575.6 L757.2,573.9 L753.3,576.3 Z" fill="#606060" stroke="#606060" stroke-width="0.7"/>
<path d="M760.8,575.6 L764.6,572.9 L760.7,571.3 L757.2,573.9 Z" fill="#606060" stroke="#606060" stroke-width="0.7"/>
<path d="M764.6,572.9 L767.8,570.1 L763.7,568.7 L760.7,571.3 Z" fill="#606060" stroke="#606060" stroke-width="0.7"/>
<path d="M763.7,568.7 L766.3,566.0 L762.1,564.2 L759.7,566.7 Z" fill="#5a5a5a" stroke="#5a5a5a" stroke-width="0.7"/>
<path d="M766.3,566.0 L768.4,563.3 L764.1,561.7 L762.1,564.2 Z" fill="#5a5a5a" stroke="#5a5a5a" stroke-width="0.7"/>
<path d="M768.4,563.3 L770.0,560.7 L765.6,559.2 L764.1,561.7 Z" fill="#5a5a5a" stroke="#5a5a5a" stroke-width="0.7"/>
<path d="M770.0,560.7 L771.1,558.0 L766.6,556.7 L765.6,559.2 Z" fill="#5a5a5a" stroke="#5a5a5a" stroke-width="0.7"/>
<path d="M771.1,558.0 L771.6,555.3 L767.2,554.2 L766.6,556.7 Z" fill="#5a5a5a" stroke="#5a5a5a" stroke-width="0.7"/>
<path d="M771.6,555.3 L771.7,552.7 L767.2,551.7 L767.2,554.2 Z" fill="#5b5b5b" stroke="#5b5b5b" stroke-width="0.7"/>
<path d="M771.7,552.7 L771.2,550.2 L766.7,549.4 L767.2,551.7 Z" fill="#5b5b5b" stroke="#5b5b5b" stroke-width="0.7"/>
<path d="M771.2,550.2 L770.2,547.8 L765.8,547.1 L766.7,549.4 Z" fill="#5b5b5b" stroke="#5b5b5b" stroke-width="0.7"/>
<path d="M770.2,547.8 L768.7,545.5 L764.4,545.0 L765.8,547.1 Z" fill="#5c5c5c" stroke="#5c5c5c" stroke-width="0.7"/>
<path d="M768.7,545.5 L766.7,543.3 L762.5,542.9 L764.4,545.0 Z" fill="#5c5c5c" stroke="#5c5c5c" stroke-width="0.7"/>
<path d="M766.7,543.3 L764.1,541.3 L760.1,541.0 L762.5,542.9 Z" fill="#5c5c5c" stroke="#5c5c5c" stroke-width="0.7"/>
<path d="M764.1,541.3 L761.2,539.4 L757.3,539.3 L760.1,541.0 Z" fill="#5d5d5d" stroke="#5d5d5d" stroke-width="0.7"/>
<path d="M761.2,539.4 L757.8,537.7 L754.1,537.7 L757.3,539.3 Z" fill="#5d5d5d" stroke="#5d5d5d" stroke-width="0.7"/>
<path d="M757.8,537.7 L753.9,536.2 L750.5,536.3 L754.1,537.7 Z" fill="#5e5e5e" stroke="#5e5e5e" stroke-width="0.7"/>
<path d="M753.9,536.2 L749.7,534.9 L746.6,535.0 L750.5,536.3 Z" fill="#5e5e5e" stroke="#5e5e5e" stroke-width="0.7"/>
<path d="M749.7,534.9 L745.1,533.8 L742.3,534.0 L746.6,535.0 Z" fill="#5f5f5f" stroke="#5f5f5f" stroke-width="0.7"/>
<path d="M745.1,533.8 L740.2,533.0 L737.7,533.2 L742.3,534.0 Z" fill="#5f5f5f" stroke="#5f5f5f" stroke-width="0.7"/>
<path d="M740.2,533.0 L735.0,532.3 L732.8,532.6 L737.7,533.2 Z" fill="#606060" stroke="#606060" stroke-width="0.7"/>
<path d="M735.0,532.3 L729.6,531.9 L727.7,532.2 L732.8,532.6 Z" fill="#606060" stroke="#606060" stroke-width="0.7"/>
<path d="M729.6,531.9 L723.9,531.7 L722.4,532.0 L727.7,532.2 Z" fill="#616161" stroke="#616161" stroke-width="0.7"/>
<path d="M723.9,531.7 L718.1,531.8 L716.9,532.1 L722.4,532.0 Z" fill="#616161" stroke="#616161" stroke-width="0.7"/>
<path d="M718.1,531.8 L712.2,532.1 L711.4,532.4 L716.9,532.1 Z" fill="#626262" stroke="#626262" stroke-width="0.7"/>
<path d="M712.2,532.1 L706.2,532.6 L705.7,532.9 L711.4,532.4 Z" fill="#626262" stroke="#626262" stroke-width="0.7"/>
<path d="M706.2,532.6 L700.2,533.4 L700.1,533.6 L705.7,532.9 Z" fill="#626262" stroke="#626262" stroke-width="0.7"/>
<path d="M700.2,533.4 L694.2,534.3 L694.5,534.5 L700.1,533.6 Z" fill="#636363" stroke="#636363" stroke-width="0.7"/>
<path d="M694.2,534.3 L688.2,535.5 L688.9,535.6 L694.5,534.5 Z" fill="#636363" stroke="#636363" stroke-width="0.7"/>
<path d="M688.2,535.5 L682.4,536.9 L683.4,536.9 L688.9,535.6 Z" fill="#646464" stroke="#646464" stroke-width="0.7"/>
<path d="M682.4,536.9 L676.8,538.5 L678.1,538.4 L683.4,536.9 Z" fill="#646464" stroke="#646464" stroke-width="0.7"/>
<path d="M676.8,538.5 L671.3,540.3 L673.0,540.1 L678.1,538.4 Z" fill="#646464" stroke="#646464" stroke-width="0.7"/>
<path d="M671.3,540.3 L666.0,542.3 L668.1,541.9 L673.0,540.1 Z" fill="#656565" stroke="#656565" stroke-width="0.7"/>
<path d="M666.0,542.3 L661.1,544.4 L663.4,543.9 L668.1,541.9 Z" fill="#656565" stroke="#656565" stroke-width="0.7"/>
<path d="M661.1,544.4 L656.4,546.6 L659.0,546.0 L663.4,543.9 Z" fill="#656565" stroke="#656565" stroke-width="0.7"/>
<path d="M656.4,546.6 L652.2,549.0 L655.0,548.2 L659.0,546.0 Z" fill="#656565" stroke="#656565" stroke-width="0.7"/>
<path d="M652.2,549.0 L648.3,551.4 L651.4,550.5 L655.0,548.2 Z" fill="#656565" stroke="#656565" stroke-width="0.7"/>
<path d="M648.3,551.4 L644.8,554.0 L648.1,552.9 L651.4,550.5 Z" fill="#656565" stroke="#656565" stroke-width="0.7"/>
<path d="M644.8,554.0 L641.7,556.6 L645.2,555.4 L648.1,552.9 Z" fill="#656565" stroke="#656565" stroke-width="0.7"/>
<path d="M641.7,556.6 L639.1,559.3 L642.8,557.9 L645.2,555.4 Z" fill="#656565" stroke="#656565" stroke-width="0.7"/>
<path d="M639.1,559.3 L637.0,562.0 L640.8,560.4 L642.8,557.9 Z" fill="#656565" stroke="#656565" stroke-width="0.7"/>
<path d="M637.0,562.0 L635.4,564.7 L639.3,562.9 L640.8,560.4 Z" fill="#656565" stroke="#656565" stroke-width="0.7"/>
<path d="M635.4,564.7 L634.4,567.3 L638.3,565.5 L639.3,562.9 Z" fill="#656565" stroke="#656565" stroke-width="0.7"/>
<path d="M634.4,567.3 L633.8,570.0 L637.8,567.9 L638.3,565.5 Z" fill="#656565" stroke="#656565" stroke-width="0.7"/>
<path d="M633.8,570.0 L633.8,572.6 L637.7,570.4 L637.8,567.9 Z" fill="#656565" stroke="#656565" stroke-width="0.7"/>
<path d="M633.8,572.6 L634.2,575.1 L638.2,572.7 L637.7,570.4 Z" fill="#646464" stroke="#646464" stroke-width="0.7"/>
<path d="M634.2,575.1 L635.2,577.5 L639.1,575.0 L638.2,572.7 Z" fill="#646464" stroke="#646464" stroke-width="0.7"/>
<path d="M635.2,577.5 L636.8,579.8 L640.6,577.2 L639.1,575.0 Z" fill="#646464" stroke="#646464" stroke-width="0.7"/>
<path d="M636.8,579.8 L638.8,582.0 L642.5,579.2 L640.6,577.2 Z" fill="#636363" stroke="#636363" stroke-width="0.7"/>
<path d="M638.8,582.0 L641.3,584.0 L644.8,581.1 L642.5,579.2 Z" fill="#636363" stroke="#636363" stroke-width="0.7"/>
<path d="M641.3,584.0 L644.3,585.9 L647.6,582.9 L644.8,581.1 Z" fill="#626262" stroke="#626262" stroke-width="0.7"/>
<path d="M644.3,585.9 L647.7,587.6 L650.8,584.5 L647.6,582.9 Z" fill="#626262" stroke="#626262" stroke-width="0.7"/>
<path d="M647.7,587.6 L651.5,589.1 L654.4,585.9 L650.8,584.5 Z" fill="#626262" stroke="#626262" stroke-width="0.7"/>
<path d="M651.5,589.1 L655.7,590.4 L658.4,587.1 L654.4,585.9 Z" fill="#616161" stroke="#616161" stroke-width="0.7"/>
<path d="M655.7,590.4 L660.3,591.5 L662.7,588.1 L658.4,587.1 Z" fill="#616161" stroke="#616161" stroke-width="0.7"/>
<path d="M660.3,591.5 L665.2,592.3 L667.3,588.9 L662.7,588.1 Z" fill="#606060" stroke="#606060" stroke-width="0.7"/>
<path d="M665.2,592.3 L670.4,593.0 L672.2,589.5 L667.3,588.9 Z" fill="#606060" stroke="#606060" stroke-width="0.7"/>
<path d="M670.4,593.0 L675.9,593.4 L677.3,589.9 L672.2,589.5 Z" fill="#5f5f5f" stroke="#5f5f5f" stroke-width="0.7"/>
<path d="M675.9,593.4 L681.5,593.6 L682.6,590.1 L677.3,589.9 Z" fill="#5f5f5f" stroke="#5f5f5f" stroke-width="0.7"/>
<path d="M681.5,593.6 L687.3,593.5 L688.0,590.0 L682.6,590.1 Z" fill="#5e5e5e" stroke="#5e5e5e" stroke-width="0.7"/>
<path d="M687.3,593.5 L693.2,593.2 L693.6,589.8 L688.0,590.0 Z" fill="#5e5e5e" stroke="#5e5e5e" stroke-width="0.7"/>
<path d="M693.2,593.2 L699.2,592.7 L699.2,589.3 L693.6,589.8 Z" fill="#5d5d5d" stroke="#5d5d5d" stroke-width="0.7"/>
<path d="M699.2,592.7 L705.2,591.9 L704.8,588.6 L699.2,589.3 Z" fill="#5d5d5d" stroke="#5d5d5d" stroke-width="0.7"/>
<path d="M705.2,591.9 L711.2,591.0 L710.5,587.6 L704.8,588.6 Z" fill="#5c5c5c" stroke="#5c5c5c" stroke-width="0.7"/>
<path d="M711.2,591.0 L717.2,589.8 L716.0,586.5 L710.5,587.6 Z" fill="#5c5c5c" stroke="#5c5c5c" stroke-width="0.7"/>
<path d="M717.2,589.8 L723.0,588.4 L721.5,585.2 L716.0,586.5 Z" fill="#5b5b5b" stroke="#5b5b5b" stroke-width="0.7"/>
<path d="M723.0,588.4 L728.7,586.8 L726.8,583.7 L721.5,585.2 Z" fill="#5b5b5b" stroke="#5b5b5b" stroke-width="0.7"/>
<path d="M728.7,586.8 L734.2,585.0 L732.0,582.0 L726.8,583.7 Z" fill="#5b5b5b" stroke="#5b5b5b" stroke-width="0.7"/>
<path d="M734.2,585.0 L739.4,583.1 L736.9,580.2 L732.0,582.0 Z" fill="#5b5b5b" stroke="#5b5b5b" stroke-width="0.7"/>
<path d="M739.4,583.1 L744.3,581.0 L741.5,578.2 L736.9,580.2 Z" fill="#5a5a5a" stroke="#5a5a5a" stroke-width="0.7"/>
<path d="M744.3,581.0 L749.0,578.7 L745.9,576.1 L741.5,578.2 Z" fill="#5a5a5a" stroke="#5a5a5a" stroke-width="0.7"/>
<path d="M749.0,578.7 L753.3,576.3 L749.9,573.9 L745.9,576.1 Z" fill="#5a5a5a" stroke="#5a5a5a" stroke-width="0.7"/>
<path d="M753.3,576.3 L757.2,573.9 L753.6,571.6 L749.9,573.9 Z" fill="#5a5a5a" stroke="#5a5a5a" stroke-width="0.7"/>
<path d="M757.2,573.9 L760.7,571.3 L756.9,569.2 L753.6,571.6 Z" fill="#5a5a5a" stroke="#5a5a5a" stroke-width="0.7"/>
<path d="M760.7,571.3 L763.7,568.7 L759.7,566.7 L756.9,569.2 Z" fill="#5a5a5a" stroke="#5a5a5a" stroke-width="0.7"/>
<path d="M759.7,566.7 L762.1,564.2 L758.2,561.9 L755.9,564.2 Z" fill="#525252" stroke="#525252" stroke-width="0.7"/>
<path d="M762.1,564.2 L764.1,561.7 L760.1,559.5 L758.2,561.9 Z" fill="#525252" stroke="#525252" stroke-width="0.7"/>
<path d="M764.1,561.7 L765.6,559.2 L761.5,557.1 L760.1,559.5 Z" fill="#525252" stroke="#525252" stroke-width="0.7"/>
<path d="M765.6,559.2 L766.6,556.7 L762.4,554.8 L761.5,557.1 Z" fill="#535353" stroke="#535353" stroke-width="0.7"/>
<path d="M766.6,556.7 L767.2,554.2 L762.9,552.4 L762.4,554.8 Z" fill="#535353" stroke="#535353" stroke-width="0.7"/>
<path d="M767.2,554.2 L767.2,551.7 L763.0,550.1 L762.9,552.4 Z" fill="#535353" stroke="#535353" stroke-width="0.7"/>
<path d="M767.2,551.7 L766.7,549.4 L762.5,547.9 L763.0,550.1 Z" fill="#535353" stroke="#535353" stroke-width="0.7"/>
<path d="M766.7,549.4 L765.8,547.1 L761.6,545.8 L762.5,547.9 Z" fill="#545454" stroke="#545454" stroke-width="0.7"/>
<path d="M765.8,547.1 L764.4,545.0 L760.3,543.7 L761.6,545.8 Z" fill="#545454" stroke="#545454" stroke-width="0.7"/>
<path d="M764.4,545.0 L762.5,542.9 L758.5,541.8 L760.3,543.7 Z" fill="#555555" stroke="#555555" stroke-width="0.7"/>
<path d="M762.5,542.9 L760.1,541.0 L756.3,540.0 L758.5,541.8 Z" fill="#555555" stroke="#555555" stroke-width="0.7"/>
<path d="M760.1,541.0 L757.3,539.3 L753.7,538.4 L756.3,540.0 Z" fill="#565656" stroke="#565656" stroke-width="0.7"/>
<path d="M757.3,539.3 L754.1,537.7 L750.7,536.9 L753.7,538.4 Z" fill="#575757" stroke="#575757" stroke-width="0.7"/>
<path d="M754.1,537.7 L750.5,536.3 L747.3,535.6 L750.7,536.9 Z" fill="#575757" stroke="#575757" stroke-width="0.7"/>
<path d="M750.5,536.3 L746.6,535.0 L743.6,534.4 L747.3,535.6 Z" fill="#585858" stroke="#585858" stroke-width="0.7"/>
<path d="M746.6,535.0 L742.3,534.0 L739.5,533.5 L743.6,534.4 Z" fill="#595959" stroke="#595959" stroke-width="0.7"/>
<path d="M742.3,534.0 L737.7,533.2 L735.2,532.7 L739.5,533.5 Z" fill="#595959" stroke="#595959" stroke-width="0.7"/>
<path d="M737.7,533.2 L732.8,532.6 L730.6,532.1 L735.2,532.7 Z" fill="#5a5a5a" stroke="#5a5a5a" stroke-width="0.7"/>
<path d="M732.8,532.6 L727.7,532.2 L725.8,531.8 L730.6,532.1 Z" fill="#5b5b5b" stroke="#5b5b5b" stroke-width="0.7"/>
<path d="M727.7,532.2 L722.4,532.0 L720.8,531.6 L725.8,531.8 Z" fill="#5b5b5b" stroke="#5b5b5b" stroke-width="0.7"/>
<path d="M722.4,532.0 L716.9,532.1 L715.7,531.7 L720.8,531.6 Z" fill="#5c5c5c" stroke="#5c5c5c" stroke-width="0.7"/>
<path d="M716.9,532.1 L711.4,532.4 L710.5,531.9 L715.7,531.7 Z" fill="#5d5d5d" stroke="#5d5d5d" stroke-width="0.7"/>
<path d="M711.4,532.4 L705.7,532.9 L705.2,532.4 L710.5,531.9 Z" fill="#5d5d5d" stroke="#5d5d5d" stroke-width="0.7"/>
<path d="M705.7,532.9 L700.1,533.6 L699.9,533.1 L705.2,532.4 Z" fill="#5e5e5e" stroke="#5e5e5e" stroke-width="0.7"/>
<path d="M700.1,533.6 L694.5,534.5 L694.6,533.9 L699.9,533.1 Z" fill="#5e5e5e" stroke="#5e5e5e" stroke-width="0.7"/>
<path d="M694.5,534.5 L688.9,535.6 L689.4,535.0 L694.6,533.9 Z" fill="#5f5f5f" stroke="#5f5f5f" stroke-width="0.7"/>
<path d="M688.9,535.6 L683.4,536.9 L684.2,536.2 L689.4,535.0 Z" fill="#5f5f5f" stroke="#5f5f5f" stroke-width="0.7"/>
<path d="M683.4,536.9 L678.1,538.4 L679.2,537.6 L684.2,536.2 Z" fill="#606060" stroke="#606060" stroke-width="0.7"/>
<path d="M678.1,538.4 L673.0,540.1 L674.4,539.2 L679.2,537.6 Z" fill="#606060" stroke="#606060" stroke-width="0.7"/>
<path d="M673.0,540.1 L668.1,541.9 L669.8,540.9 L674.4,539.2 Z" fill="#616161" stroke="#616161" stroke-width="0.7"/>
<path d="M668.1,541.9 L663.4,543.9 L665.4,542.8 L669.8,540.9 Z" fill="#616161" stroke="#616161" stroke-width="0.7"/>
<path d="M663.4,543.9 L659.0,546.0 L661.3,544.7 L665.4,542.8 Z" fill="#616161" stroke="#616161" stroke-width="0.7"/>
<path d="M659.0,546.0 L655.0,548.2 L657.6,546.8 L661.3,544.7 Z" fill="#616161" stroke="#616161" stroke-width="0.7"/>
<path d="M655.0,548.2 L651.4,550.5 L654.1,549.0 L657.6,546.8 Z" fill="#626262" stroke="#626262" stroke-width="0.7"/>
<path d="M651.4,550.5 L648.1,552.9 L651.0,551.2 L654.1,549.0 Z" fill="#626262" stroke="#626262" stroke-width="0.7"/>
<path d="M648.1,552.9 L645.2,555.4 L648.4,553.6 L651.0,551.2 Z" fill="#626262" stroke="#626262" stroke-width="0.7"/>
<path d="M645.2,555.4 L642.8,557.9 L646.1,555.9 L648.4,553.6 Z" fill="#626262" stroke="#626262" stroke-width="0.7"/>
<path d="M642.8,557.9 L640.8,560.4 L644.2,558.3 L646.1,555.9 Z" fill="#626262" stroke="#626262" stroke-width="0.7"/>
<path d="M640.8,560.4 L639.3,562.9 L642.8,560.7 L644.2,558.3 Z" fill="#616161" stroke="#616161" stroke-width="0.7"/>
<path d="M639.3,562.9 L638.3,565.5 L641.9,563.0 L642.8,560.7 Z" fill="#616161" stroke="#616161" stroke-width="0.7"/>
<path d="M638.3,565.5 L637.8,567.9 L641.4,565.4 L641.9,563.0 Z" fill="#616161" stroke="#616161" stroke-width="0.7"/>
<path d="M637.8,567.9 L637.7,570.4 L641.3,567.6 L641.4,565.4 Z" fill="#616161" stroke="#616161" stroke-width="0.7"/>
<path d="M637.7,570.4 L638.2,572.7 L641.8,569.9 L641.3,567.6 Z" fill="#606060" stroke="#606060" stroke-width="0.7"/>
<path d="M638.2,572.7 L639.1,575.0 L642.6,572.0 L641.8,569.9 Z" fill="#606060" stroke="#606060" stroke-width="0.7"/>
<path d="M639.1,575.0 L640.6,577.2 L644.0,574.0 L642.6,572.0 Z" fill="#5f5f5f" stroke="#5f5f5f" stroke-width="0.7"/>
<path d="M640.6,577.2 L642.5,579.2 L645.8,575.9 L644.0,574.0 Z" fill="#5f5f5f" stroke="#5f5f5f" stroke-width="0.7"/>
<path d="M642.5,579.2 L644.8,581.1 L648.0,577.7 L645.8,575.9 Z" fill="#5e5e5e" stroke="#5e5e5e" stroke-width="0.7"/>
<path d="M644.8,581.1 L647.6,582.9 L650.6,579.4 L648.0,577.7 Z" fill="#5e5e5e" stroke="#5e5e5e" stroke-width="0.7"/>
<path d="M647.6,582.9 L650.8,584.5 L653.6,580.9 L650.6,579.4 Z" fill="#5d5d5d" stroke="#5d5d5d" stroke-width="0.7"/>
<path d="M650.8,584.5 L654.4,585.9 L657.0,582.2 L653.6,580.9 Z" fill="#5d5d5d" stroke="#5d5d5d" stroke-width="0.7"/>
<path d="M654.4,585.9 L658.4,587.1 L660.7,583.3 L657.0,582.2 Z" fill="#5c5c5c" stroke="#5c5c5c" stroke-width="0.7"/>
<path d="M658.4,587.1 L662.7,588.1 L664.8,584.3 L660.7,583.3 Z" fill="#5b5b5b" stroke="#5b5b5b" stroke-width="0.7"/>
<path d="M662.7,588.1 L667.3,588.9 L669.1,585.1 L664.8,584.3 Z" fill="#5b5b5b" stroke="#5b5b5b" stroke-width="0.7"/>
<path d="M667.3,588.9 L672.2,589.5 L673.7,585.6 L669.1,585.1 Z" fill="#5a5a5a" stroke="#5a5a5a" stroke-width="0.7"/>
<path d="M672.2,589.5 L677.3,589.9 L678.5,586.0 L673.7,585.6 Z" fill="#595959" stroke="#595959" stroke-width="0.7"/>
<path d="M677.3,589.9 L682.6,590.1 L683.4,586.2 L678.5,586.0 Z" fill="#585858" stroke="#585858" stroke-width="0.7"/>
<path d="M682.6,590.1 L688.0,590.0 L688.6,586.1 L683.4,586.2 Z" fill="#585858" stroke="#585858" stroke-width="0.7"/>
<path d="M688.0,590.0 L693.6,589.8 L693.8,585.8 L688.6,586.1 Z" fill="#575757" stroke="#575757" stroke-width="0.7"/>
<path d="M693.6,589.8 L699.2,589.3 L699.1,585.4 L693.8,585.8 Z" fill="#575757" stroke="#575757" stroke-width="0.7"/>
<path d="M699.2,589.3 L704.8,588.6 L704.4,584.7 L699.1,585.4 Z" fill="#565656" stroke="#565656" stroke-width="0.7"/>
<path d="M704.8,588.6 L710.5,587.6 L709.7,583.9 L704.4,584.7 Z" fill="#555555" stroke="#555555" stroke-width="0.7"/>
<path d="M710.5,587.6 L716.0,586.5 L714.9,582.8 L709.7,583.9 Z" fill="#555555" stroke="#555555" stroke-width="0.7"/>
<path d="M716.0,586.5 L721.5,585.2 L720.0,581.6 L714.9,582.8 Z" fill="#545454" stroke="#545454" stroke-width="0.7"/>
<path d="M721.5,585.2 L726.8,583.7 L725.0,580.2 L720.0,581.6 Z" fill="#545454" stroke="#545454" stroke-width="0.7"/>
<path d="M726.8,583.7 L732.0,582.0 L729.9,578.6 L725.0,580.2 Z" fill="#535353" stroke="#535353" stroke-width="0.7"/>
<path d="M732.0,582.0 L736.9,580.2 L734.5,576.9 L729.9,578.6 Z" fill="#535353" stroke="#535353" stroke-width="0.7"/>
<path d="M736.9,580.2 L741.5,578.2 L738.9,575.0 L734.5,576.9 Z" fill="#535353" stroke="#535353" stroke-width="0.7"/>
<path d="M741.5,578.2 L745.9,576.1 L742.9,573.0 L738.9,575.0 Z" fill="#525252" stroke="#525252" stroke-width="0.7"/>
<path d="M745.9,576.1 L749.9,573.9 L746.7,571.0 L742.9,573.0 Z" fill="#525252" stroke="#525252" stroke-width="0.7"/>
<path d="M749.9,573.9 L753.6,571.6 L750.2,568.8 L746.7,571.0 Z" fill="#525252" stroke="#525252" stroke-width="0.7"/>
<path d="M753.6,571.6 L756.9,569.2 L753.2,566.5 L750.2,568.8 Z" fill="#525252" stroke="#525252" stroke-width="0.7"/>
<path d="M756.9,569.2 L759.7,566.7 L755.9,564.2 L753.2,566.5 Z" fill="#525252" stroke="#525252" stroke-width="0.7"/>
<path d="M755.9,564.2 L758.2,561.9 L754.6,559.0 L752.4,561.2 Z" fill="#4e4e4e" stroke="#4e4e4e" stroke-width="0.7"/>
<path d="M758.2,561.9 L760.1,559.5 L756.3,556.8 L754.6,559.0 Z" fill="#4e4e4e" stroke="#4e4e4e" stroke-width="0.7"/>
<path d="M760.1,559.5 L761.5,557.1 L757.6,554.5 L756.3,556.8 Z" fill="#4e4e4e" stroke="#4e4e4e" stroke-width="0.7"/>
<path d="M761.5,557.1 L762.4,554.8 L758.6,552.3 L757.6,554.5 Z" fill="#4e4e4e" stroke="#4e4e4e" stroke-width="0.7"/>
<path d="M762.4,554.8 L762.9,552.4 L759.0,550.1 L758.6,552.3 Z" fill="#4e4e4e" stroke="#4e4e4e" stroke-width="0.7"/>
<path d="M762.9,552.4 L763.0,550.1 L759.1,547.9 L759.0,550.1 Z" fill="#4d4d4d" stroke="#4d4d4d" stroke-width="0.7"/>
<path d="M763.0,550.1 L762.5,547.9 L758.7,545.8 L759.1,547.9 Z" fill="#4d4d4d" stroke="#4d4d4d" stroke-width="0.7"/>
<path d="M762.5,547.9 L761.6,545.8 L757.8,543.8 L758.7,545.8 Z" fill="#4c4c4c" stroke="#4c4c4c" stroke-width="0.7"/>
<path d="M761.6,545.8 L760.3,543.7 L756.6,541.9 L757.8,543.8 Z" fill="#4c4c4c" stroke="#4c4c4c" stroke-width="0.7"/>
<path d="M760.3,543.7 L758.5,541.8 L754.9,540.1 L756.6,541.9 Z" fill="#4c4c4c" stroke="#4c4c4c" stroke-width="0.7"/>
<path d="M758.5,541.8 L756.3,540.0 L752.8,538.4 L754.9,540.1 Z" fill="#4d4d4d" stroke="#4d4d4d" stroke-width="0.7"/>
<path d="M756.3,540.0 L753.7,538.4 L750.3,536.9 L752.8,538.4 Z" fill="#4e4e4e" stroke="#4e4e4e" stroke-width="0.7"/>
<path d="M753.7,538.4 L750.7,536.9 L747.5,535.5 L750.3,536.9 Z" fill="#4e4e4e" stroke="#4e4e4e" stroke-width="0.7"/>
<path d="M750.7,536.9 L747.3,535.6 L744.3,534.2 L747.5,535.5 Z" fill="#4f4f4f" stroke="#4f4f4f" stroke-width="0.7"/>
<path d="M747.3,535.6 L743.6,534.4 L740.8,533.1 L744.3,534.2 Z" fill="#505050" stroke="#505050" stroke-width="0.7"/>
<path d="M743.6,534.4 L739.5,533.5 L737.0,532.2 L740.8,533.1 Z" fill="#515151" stroke="#515151" stroke-width="0.7"/>
<path d="M739.5,533.5 L735.2,532.7 L732.9,531.5 L737.0,532.2 Z" fill="#525252" stroke="#525252" stroke-width="0.7"/>
<path d="M735.2,532.7 L730.6,532.1 L728.6,531.0 L732.9,531.5 Z" fill="#535353" stroke="#535353" stroke-width="0.7"/>
<path d="M730.6,532.1 L725.8,531.8 L724.1,530.6 L728.6,531.0 Z" fill="#535353" stroke="#535353" stroke-width="0.7"/>
<path d="M725.8,531.8 L720.8,531.6 L719.4,530.5 L724.1,530.6 Z" fill="#545454" stroke="#545454" stroke-width="0.7"/>
<path d="M720.8,531.6 L715.7,531.7 L714.5,530.5 L719.4,530.5 Z" fill="#555555" stroke="#555555" stroke-width="0.7"/>
<path d="M715.7,531.7 L710.5,531.9 L709.6,530.8 L714.5,530.5 Z" fill="#565656" stroke="#565656" stroke-width="0.7"/>
<path d="M710.5,531.9 L705.2,532.4 L704.6,531.2 L709.6,530.8 Z" fill="#575757" stroke="#575757" stroke-width="0.7"/>
<path d="M705.2,532.4 L699.9,533.1 L699.6,531.8 L704.6,531.2 Z" fill="#575757" stroke="#575757" stroke-width="0.7"/>
<path d="M699.9,533.1 L694.6,533.9 L694.6,532.6 L699.6,531.8 Z" fill="#585858" stroke="#585858" stroke-width="0.7"/>
<path d="M694.6,533.9 L689.4,535.0 L689.7,533.6 L694.6,532.6 Z" fill="#595959" stroke="#595959" stroke-width="0.7"/>
<path d="M689.4,535.0 L684.2,536.2 L684.9,534.8 L689.7,533.6 Z" fill="#595959" stroke="#595959" stroke-width="0.7"/>
<path d="M684.2,536.2 L679.2,537.6 L680.1,536.1 L684.9,534.8 Z" fill="#5a5a5a" stroke="#5a5a5a" stroke-width="0.7"/>
<path d="M679.2,537.6 L674.4,539.2 L675.6,537.6 L680.1,536.1 Z" fill="#5a5a5a" stroke="#5a5a5a" stroke-width="0.7"/>
<path d="M674.4,539.2 L669.8,540.9 L671.2,539.2 L675.6,537.6 Z" fill="#5b5b5b" stroke="#5b5b5b" stroke-width="0.7"/>
<path d="M669.8,540.9 L665.4,542.8 L667.1,541.0 L671.2,539.2 Z" fill="#5b5b5b" stroke="#5b5b5b" stroke-width="0.7"/>
<path d="M665.4,542.8 L661.3,544.7 L663.3,542.8 L667.1,541.0 Z" fill="#5c5c5c" stroke="#5c5c5c" stroke-width="0.7"/>
<path d="M661.3,544.7 L657.6,546.8 L659.7,544.8 L663.3,542.8 Z" fill="#5c5c5c" stroke="#5c5c5c" stroke-width="0.7"/>
<path d="M657.6,546.8 L654.1,549.0 L656.5,546.9 L659.7,544.8 Z" fill="#5c5c5c" stroke="#5c5c5c" stroke-width="0.7"/>
<path d="M654.1,549.0 L651.0,551.2 L653.6,549.0 L656.5,546.9 Z" fill="#5c5c5c" stroke="#5c5c5c" stroke-width="0.7"/>
<path d="M651.0,551.2 L648.4,553.6 L651.0,551.2 L653.6,549.0 Z" fill="#5c5c5c" stroke="#5c5c5c" stroke-width="0.7"/>
<path d="M648.4,553.6 L646.1,555.9 L648.9,553.4 L651.0,551.2 Z" fill="#5c5c5c" stroke="#5c5c5c" stroke-width="0.7"/>
<path d="M646.1,555.9 L644.2,558.3 L647.1,555.6 L648.9,553.4 Z" fill="#5c5c5c" stroke="#5c5c5c" stroke-width="0.7"/>
<path d="M644.2,558.3 L642.8,560.7 L645.8,557.9 L647.1,555.6 Z" fill="#5c5c5c" stroke="#5c5c5c" stroke-width="0.7"/>
<path d="M642.8,560.7 L641.9,563.0 L644.9,560.1 L645.8,557.9 Z" fill="#5c5c5c" stroke="#5c5c5c" stroke-width="0.7"/>
<path d="M641.9,563.0 L641.4,565.4 L644.4,562.3 L644.9,560.1 Z" fill="#5b5b5b" stroke="#5b5b5b" stroke-width="0.7"/>
<path d="M641.4,565.4 L641.3,567.6 L644.4,564.4 L644.4,562.3 Z" fill="#5b5b5b" stroke="#5b5b5b" stroke-width="0.7"/>
<path d="M641.3,567.6 L641.8,569.9 L644.8,566.5 L644.4,564.4 Z" fill="#5a5a5a" stroke="#5a5a5a" stroke-width="0.7"/>
<path d="M641.8,569.9 L642.6,572.0 L645.6,568.5 L644.8,566.5 Z" fill="#5a5a5a" stroke="#5a5a5a" stroke-width="0.7"/>
<path d="M642.6,572.0 L644.0,574.0 L646.9,570.5 L645.6,568.5 Z" fill="#595959" stroke="#595959" stroke-width="0.7"/>
<path d="M644.0,574.0 L645.8,575.9 L648.6,572.3 L646.9,570.5 Z" fill="#595959" stroke="#595959" stroke-width="0.7"/>
<path d="M645.8,575.9 L648.0,577.7 L650.7,573.9 L648.6,572.3 Z" fill="#585858" stroke="#585858" stroke-width="0.7"/>
<path d="M648.0,577.7 L650.6,579.4 L653.1,575.5 L650.7,573.9 Z" fill="#575757" stroke="#575757" stroke-width="0.7"/>
<path d="M650.6,579.4 L653.6,580.9 L656.0,576.9 L653.1,575.5 Z" fill="#575757" stroke="#575757" stroke-width="0.7"/>
<path d="M653.6,580.9 L657.0,582.2 L659.2,578.2 L656.0,576.9 Z" fill="#565656" stroke="#565656" stroke-width="0.7"/>
<path d="M657.0,582.2 L660.7,583.3 L662.7,579.2 L659.2,578.2 Z" fill="#555555" stroke="#555555" stroke-width="0.7"/>
<path d="M660.7,583.3 L664.8,584.3 L666.5,580.1 L662.7,579.2 Z" fill="#545454" stroke="#545454" stroke-width="0.7"/>
<path d="M664.8,584.3 L669.1,585.1 L670.6,580.9 L666.5,580.1 Z" fill="#535353" stroke="#535353" stroke-width="0.7"/>
<path d="M669.1,585.1 L673.7,585.6 L674.9,581.4 L670.6,580.9 Z" fill="#525252" stroke="#525252" stroke-width="0.7"/>
<path d="M673.7,585.6 L678.5,586.0 L679.4,581.7 L674.9,581.4 Z" fill="#525252" stroke="#525252" stroke-width="0.7"/>
<path d="M678.5,586.0 L683.4,586.2 L684.1,581.9 L679.4,581.7 Z" fill="#515151" stroke="#515151" stroke-width="0.7"/>
<path d="M683.4,586.2 L688.6,586.1 L688.9,581.8 L684.1,581.9 Z" fill="#505050" stroke="#505050" stroke-width="0.7"/>
<path d="M688.6,586.1 L693.8,585.8 L693.8,581.6 L688.9,581.8 Z" fill="#4f4f4f" stroke="#4f4f4f" stroke-width="0.7"/>
<path d="M693.8,585.8 L699.1,585.4 L698.8,581.2 L693.8,581.6 Z" fill="#4e4e4e" stroke="#4e4e4e" stroke-width="0.7"/>
<path d="M699.1,585.4 L704.4,584.7 L703.8,580.5 L698.8,581.2 Z" fill="#4e4e4e" stroke="#4e4e4e" stroke-width="0.7"/>
<path d="M704.4,584.7 L709.7,583.9 L708.8,579.7 L703.8,580.5 Z" fill="#4d4d4d" stroke="#4d4d4d" stroke-width="0.7"/>
<path d="M709.7,583.9 L714.9,582.8 L713.8,578.7 L708.8,579.7 Z" fill="#4c4c4c" stroke="#4c4c4c" stroke-width="0.7"/>
<path d="M714.9,582.8 L720.0,581.6 L718.6,577.6 L713.8,578.7 Z" fill="#4c4c4c" stroke="#4c4c4c" stroke-width="0.7"/>
<path d="M720.0,581.6 L725.0,580.2 L723.3,576.2 L718.6,577.6 Z" fill="#4b4b4b" stroke="#4b4b4b" stroke-width="0.7"/>
<path d="M725.0,580.2 L729.9,578.6 L727.9,574.8 L723.3,576.2 Z" fill="#4a4a4a" stroke="#4a4a4a" stroke-width="0.7"/>
<path d="M729.9,578.6 L734.5,576.9 L732.2,573.1 L727.9,574.8 Z" fill="#4a4a4a" stroke="#4a4a4a" stroke-width="0.7"/>
<path d="M734.5,576.9 L738.9,575.0 L736.3,571.4 L732.2,573.1 Z" fill="#4a4a4a" stroke="#4a4a4a" stroke-width="0.7"/>
<path d="M738.9,575.0 L742.9,573.0 L740.2,569.5 L736.3,571.4 Z" fill="#494949" stroke="#494949" stroke-width="0.7"/>
<path d="M742.9,573.0 L746.7,571.0 L743.8,567.6 L740.2,569.5 Z" fill="#4a4a4a" stroke="#4a4a4a" stroke-width="0.7"/>
<path d="M746.7,571.0 L750.2,568.8 L747.0,565.5 L743.8,567.6 Z" fill="#4c4c4c" stroke="#4c4c4c" stroke-width="0.7"/>
<path d="M750.2,568.8 L753.2,566.5 L749.9,563.4 L747.0,565.5 Z" fill="#4c4c4c" stroke="#4c4c4c" stroke-width="0.7"/>
<path d="M753.2,566.5 L755.9,564.2 L752.4,561.2 L749.9,563.4 Z" fill="#4d4d4d" stroke="#4d4d4d" stroke-width="0.7"/>
<path d="M752.4,561.2 L754.6,559.0 L751.3,555.7 L749.3,557.8 Z" fill="#4e4e4e" stroke="#4e4e4e" stroke-width="0.7"/>
<path d="M754.6,559.0 L756.3,556.8 L753.0,553.6 L751.3,555.7 Z" fill="#4e4e4e" stroke="#4e4e4e" stroke-width="0.7"/>
<path d="M756.3,556.8 L757.6,554.5 L754.3,551.4 L753.0,553.6 Z" fill="#4e4e4e" stroke="#4e4e4e" stroke-width="0.7"/>
<path d="M757.6,554.5 L758.6,552.3 L755.1,549.3 L754.3,551.4 Z" fill="#4e4e4e" stroke="#4e4e4e" stroke-width="0.7"/>
<path d="M758.6,552.3 L759.0,550.1 L755.6,547.2 L755.1,549.3 Z" fill="#4e4e4e" stroke="#4e4e4e" stroke-width="0.7"/>
<path d="M759.0,550.1 L759.1,547.9 L755.6,545.2 L755.6,547.2 Z" fill="#4d4d4d" stroke="#4d4d4d" stroke-width="0.7"/>
<path d="M759.1,547.9 L758.7,545.8 L755.2,543.2 L755.6,545.2 Z" fill="#4d4d4d" stroke="#4d4d4d" stroke-width="0.7"/>
<path d="M758.7,545.8 L757.8,543.8 L754.4,541.3 L755.2,543.2 Z" fill="#4c4c4c" stroke="#4c4c4c" stroke-width="0.7"/>
<path d="M757.8,543.8 L756.6,541.9 L753.2,539.5 L754.4,541.3 Z" fill="#4a4a4a" stroke="#4a4a4a" stroke-width="0.7"/>
<path d="M756.6,541.9 L754.9,540.1 L751.6,537.8 L753.2,539.5 Z" fill="#494949" stroke="#494949" stroke-width="0.7"/>
<path d="M754.9,540.1 L752.8,538.4 L749.7,536.2 L751.6,537.8 Z" fill="#474747" stroke="#474747" stroke-width="0.7"/>
<path d="M752.8,538.4 L750.3,536.9 L747.3,534.7 L749.7,536.2 Z" fill="#464646" stroke="#464646" stroke-width="0.7"/>
<path d="M750.3,536.9 L747.5,535.5 L744.6,533.4 L747.3,534.7 Z" fill="#454545" stroke="#454545" stroke-width="0.7"/>
<path d="M747.5,535.5 L744.3,534.2 L741.6,532.2 L744.6,533.4 Z" fill="#464646" stroke="#464646" stroke-width="0.7"/>
<path d="M744.3,534.2 L740.8,533.1 L738.3,531.2 L741.6,532.2 Z" fill="#474747" stroke="#474747" stroke-width="0.7"/>
<path d="M740.8,533.1 L737.0,532.2 L734.7,530.3 L738.3,531.2 Z" fill="#484848" stroke="#484848" stroke-width="0.7"/>
<path d="M737.0,532.2 L732.9,531.5 L730.8,529.6 L734.7,530.3 Z" fill="#494949" stroke="#494949" stroke-width="0.7"/>
<path d="M732.9,531.5 L728.6,531.0 L726.7,529.1 L730.8,529.6 Z" fill="#4a4a4a" stroke="#4a4a4a" stroke-width="0.7"/>
<path d="M728.6,531.0 L724.1,530.6 L722.4,528.8 L726.7,529.1 Z" fill="#4b4b4b" stroke="#4b4b4b" stroke-width="0.7"/>
<path d="M724.1,530.6 L719.4,530.5 L718.0,528.6 L722.4,528.8 Z" fill="#4c4c4c" stroke="#4c4c4c" stroke-width="0.7"/>
<path d="M719.4,530.5 L714.5,530.5 L713.4,528.7 L718.0,528.6 Z" fill="#4d4d4d" stroke="#4d4d4d" stroke-width="0.7"/>
<path d="M714.5,530.5 L709.6,530.8 L708.7,528.9 L713.4,528.7 Z" fill="#4e4e4e" stroke="#4e4e4e" stroke-width="0.7"/>
<path d="M709.6,530.8 L704.6,531.2 L704.0,529.3 L708.7,528.9 Z" fill="#4e4e4e" stroke="#4e4e4e" stroke-width="0.7"/>
<path d="M704.6,531.2 L699.6,531.8 L699.3,529.9 L704.0,529.3 Z" fill="#4f4f4f" stroke="#4f4f4f" stroke-width="0.7"/>
<path d="M699.6,531.8 L694.6,532.6 L694.5,530.7 L699.3,529.9 Z" fill="#505050" stroke="#505050" stroke-width="0.7"/>
<path d="M694.6,532.6 L689.7,533.6 L689.8,531.6 L694.5,530.7 Z" fill="#515151" stroke="#515151" stroke-width="0.7"/>
<path d="M689.7,533.6 L684.9,534.8 L685.3,532.7 L689.8,531.6 Z" fill="#525252" stroke="#525252" stroke-width="0.7"/>
<path d="M684.9,534.8 L680.1,536.1 L680.8,534.0 L685.3,532.7 Z" fill="#525252" stroke="#525252" stroke-width="0.7"/>
<path d="M680.1,536.1 L675.6,537.6 L676.5,535.4 L680.8,534.0 Z" fill="#535353" stroke="#535353" stroke-width="0.7"/>
<path d="M675.6,537.6 L671.2,539.2 L672.3,536.9 L676.5,535.4 Z" fill="#545454" stroke="#545454" stroke-width="0.7"/>
<path d="M671.2,539.2 L667.1,541.0 L668.4,538.6 L672.3,536.9 Z" fill="#545454" stroke="#545454" stroke-width="0.7"/>
<path d="M667.1,541.0 L663.3,542.8 L664.8,540.4 L668.4,538.6 Z" fill="#545454" stroke="#545454" stroke-width="0.7"/>
<path d="M663.3,542.8 L659.7,544.8 L661.4,542.2 L664.8,540.4 Z" fill="#555555" stroke="#555555" stroke-width="0.7"/>
<path d="M659.7,544.8 L656.5,546.9 L658.3,544.2 L661.4,542.2 Z" fill="#575757" stroke="#575757" stroke-width="0.7"/>
<path d="M656.5,546.9 L653.6,549.0 L655.6,546.2 L658.3,544.2 Z" fill="#585858" stroke="#585858" stroke-width="0.7"/>
<path d="M653.6,549.0 L651.0,551.2 L653.2,548.2 L655.6,546.2 Z" fill="#595959" stroke="#595959" stroke-width="0.7"/>
<path d="M651.0,551.2 L648.9,553.4 L651.1,550.3 L653.2,548.2 Z" fill="#5a5a5a" stroke="#5a5a5a" stroke-width="0.7"/>
<path d="M648.9,553.4 L647.1,555.6 L649.5,552.5 L651.1,550.3 Z" fill="#5a5a5a" stroke="#5a5a5a" stroke-width="0.7"/>
<path d="M647.1,555.6 L645.8,557.9 L648.2,554.6 L649.5,552.5 Z" fill="#5a5a5a" stroke="#5a5a5a" stroke-width="0.7"/>
<path d="M645.8,557.9 L644.9,560.1 L647.4,556.7 L648.2,554.6 Z" fill="#595959" stroke="#595959" stroke-width="0.7"/>
<path d="M644.9,560.1 L644.4,562.3 L646.9,558.8 L647.4,556.7 Z" fill="#595959" stroke="#595959" stroke-width="0.7"/>
<path d="M644.4,562.3 L644.4,564.4 L646.9,560.8 L646.9,558.8 Z" fill="#585858" stroke="#585858" stroke-width="0.7"/>
<path d="M644.4,564.4 L644.8,566.5 L647.3,562.8 L646.9,560.8 Z" fill="#565656" stroke="#565656" stroke-width="0.7"/>
<path d="M644.8,566.5 L645.6,568.5 L648.1,564.7 L647.3,562.8 Z" fill="#555555" stroke="#555555" stroke-width="0.7"/>
<path d="M645.6,568.5 L646.9,570.5 L649.3,566.5 L648.1,564.7 Z" fill="#535353" stroke="#535353" stroke-width="0.7"/>
<path d="M646.9,570.5 L648.6,572.3 L650.9,568.3 L649.3,566.5 Z" fill="#515151" stroke="#515151" stroke-width="0.7"/>
<path d="M648.6,572.3 L650.7,573.9 L652.8,569.9 L650.9,568.3 Z" fill="#505050" stroke="#505050" stroke-width="0.7"/>
<path d="M650.7,573.9 L653.1,575.5 L655.2,571.3 L652.8,569.9 Z" fill="#4f4f4f" stroke="#4f4f4f" stroke-width="0.7"/>
<path d="M653.1,575.5 L656.0,576.9 L657.9,572.7 L655.2,571.3 Z" fill="#4e4e4e" stroke="#4e4e4e" stroke-width="0.7"/>
<path d="M656.0,576.9 L659.2,578.2 L660.9,573.8 L657.9,572.7 Z" fill="#4d4d4d" stroke="#4d4d4d" stroke-width="0.7"/>
<path d="M659.2,578.2 L662.7,579.2 L664.2,574.9 L660.9,573.8 Z" fill="#4d4d4d" stroke="#4d4d4d" stroke-width="0.7"/>
<path d="M662.7,579.2 L666.5,580.1 L667.8,575.7 L664.2,574.9 Z" fill="#4c4c4c" stroke="#4c4c4c" stroke-width="0.7"/>
<path d="M666.5,580.1 L670.6,580.9 L671.7,576.4 L667.8,575.7 Z" fill="#4b4b4b" stroke="#4b4b4b" stroke-width="0.7"/>
<path d="M670.6,580.9 L674.9,581.4 L675.8,576.9 L671.7,576.4 Z" fill="#4a4a4a" stroke="#4a4a4a" stroke-width="0.7"/>
<path d="M674.9,581.4 L679.4,581.7 L680.1,577.2 L675.8,576.9 Z" fill="#494949" stroke="#494949" stroke-width="0.7"/>
<path d="M679.4,581.7 L684.1,581.9 L684.5,577.4 L680.1,577.2 Z" fill="#484848" stroke="#484848" stroke-width="0.7"/>
<path d="M684.1,581.9 L688.9,581.8 L689.1,577.3 L684.5,577.4 Z" fill="#474747" stroke="#474747" stroke-width="0.7"/>
<path d="M688.9,581.8 L693.8,581.6 L693.8,577.1 L689.1,577.3 Z" fill="#464646" stroke="#464646" stroke-width="0.7"/>
<path d="M693.8,581.6 L698.8,581.2 L698.5,576.7 L693.8,577.1 Z" fill="#454545" stroke="#454545" stroke-width="0.7"/>
<path d="M698.8,581.2 L703.8,580.5 L703.2,576.1 L698.5,576.7 Z" fill="#444444" stroke="#444444" stroke-width="0.7"/>
<path d="M703.8,580.5 L708.8,579.7 L708.0,575.3 L703.2,576.1 Z" fill="#434343" stroke="#434343" stroke-width="0.7"/>
<path d="M708.8,579.7 L713.8,578.7 L712.6,574.4 L708.0,575.3 Z" fill="#424242" stroke="#424242" stroke-width="0.7"/>
<path d="M713.8,578.7 L718.6,577.6 L717.2,573.3 L712.6,574.4 Z" fill="#414141" stroke="#414141" stroke-width="0.7"/>
<path d="M718.6,577.6 L723.3,576.2 L721.7,572.0 L717.2,573.3 Z" fill="#414141" stroke="#414141" stroke-width="0.7"/>
<path d="M723.3,576.2 L727.9,574.8 L726.0,570.6 L721.7,572.0 Z" fill="#434343" stroke="#434343" stroke-width="0.7"/>
<path d="M727.9,574.8 L732.2,573.1 L730.1,569.1 L726.0,570.6 Z" fill="#454545" stroke="#454545" stroke-width="0.7"/>
<path d="M732.2,573.1 L736.3,571.4 L734.1,567.4 L730.1,569.1 Z" fill="#474747" stroke="#474747" stroke-width="0.7"/>
<path d="M736.3,571.4 L740.2,569.5 L737.7,565.7 L734.1,567.4 Z" fill="#484848" stroke="#484848" stroke-width="0.7"/>
<path d="M740.2,569.5 L743.8,567.6 L741.1,563.8 L737.7,565.7 Z" fill="#4a4a4a" stroke="#4a4a4a" stroke-width="0.7"/>
<path d="M743.8,567.6 L747.0,565.5 L744.2,561.9 L741.1,563.8 Z" fill="#4b4b4b" stroke="#4b4b4b" stroke-width="0.7"/>
<path d="M747.0,565.5 L749.9,563.4 L746.9,559.8 L744.2,561.9 Z" fill="#4c4c4c" stroke="#4c4c4c" stroke-width="0.7"/>
<path d="M749.9,563.4 L752.4,561.2 L749.3,557.8 L746.9,559.8 Z" fill="#4d4d4d" stroke="#4d4d4d" stroke-width="0.7"/>
<path d="M749.3,557.8 L751.3,555.7 L748.6,552.0 L746.7,554.0 Z" fill="#4c4c4c" stroke="#4c4c4c" stroke-width="0.7"/>
<path d="M751.3,555.7 L753.0,553.6 L750.2,550.0 L748.6,552.0 Z" fill="#4d4d4d" stroke="#4d4d4d" stroke-width="0.7"/>
<path d="M753.0,553.6 L754.3,551.4 L751.4,547.9 L750.2,550.0 Z" fill="#4d4d4d" stroke="#4d4d4d" stroke-width="0.7"/>
<path d="M754.3,551.4 L755.1,549.3 L752.2,545.9 L751.4,547.9 Z" fill="#4d4d4d" stroke="#4d4d4d" stroke-width="0.7"/>
<path d="M755.1,549.3 L755.6,547.2 L752.6,543.9 L752.2,545.9 Z" fill="#4d4d4d" stroke="#4d4d4d" stroke-width="0.7"/>
<path d="M755.6,547.2 L755.6,545.2 L752.7,542.0 L752.6,543.9 Z" fill="#4c4c4c" stroke="#4c4c4c" stroke-width="0.7"/>
<path d="M755.6,545.2 L755.2,543.2 L752.3,540.1 L752.7,542.0 Z" fill="#4b4b4b" stroke="#4b4b4b" stroke-width="0.7"/>
<path d="M755.2,543.2 L754.4,541.3 L751.5,538.3 L752.3,540.1 Z" fill="#4a4a4a" stroke="#4a4a4a" stroke-width="0.7"/>
<path d="M754.4,541.3 L753.2,539.5 L750.4,536.5 L751.5,538.3 Z" fill="#494949" stroke="#494949" stroke-width="0.7"/>
<path d="M753.2,539.5 L751.6,537.8 L748.9,534.9 L750.4,536.5 Z" fill="#474747" stroke="#474747" stroke-width="0.7"/>
<path d="M751.6,537.8 L749.7,536.2 L747.0,533.4 L748.9,534.9 Z" fill="#454545" stroke="#454545" stroke-width="0.7"/>
<path d="M749.7,536.2 L747.3,534.7 L744.7,532.0 L747.0,533.4 Z" fill="#434343" stroke="#434343" stroke-width="0.7"/>
<path d="M747.3,534.7 L744.6,533.4 L742.2,530.7 L744.7,532.0 Z" fill="#414141" stroke="#414141" stroke-width="0.7"/>
<path d="M744.6,533.4 L741.6,532.2 L739.3,529.5 L742.2,530.7 Z" fill="#3f3f3f" stroke="#3f3f3f" stroke-width="0.7"/>
<path d="M741.6,532.2 L738.3,531.2 L736.1,528.6 L739.3,529.5 Z" fill="#3c3c3c" stroke="#3c3c3c" stroke-width="0.7"/>
<path d="M738.3,531.2 L734.7,530.3 L732.6,527.8 L736.1,528.6 Z" fill="#3d3d3d" stroke="#3d3d3d" stroke-width="0.7"/>
<path d="M734.7,530.3 L730.8,529.6 L728.9,527.1 L732.6,527.8 Z" fill="#3e3e3e" stroke="#3e3e3e" stroke-width="0.7"/>
<path d="M730.8,529.6 L726.7,529.1 L725.0,526.6 L728.9,527.1 Z" fill="#404040" stroke="#404040" stroke-width="0.7"/>
<path d="M726.7,529.1 L722.4,528.8 L720.9,526.3 L725.0,526.6 Z" fill="#414141" stroke="#414141" stroke-width="0.7"/>
<path d="M722.4,528.8 L718.0,528.6 L716.7,526.2 L720.9,526.3 Z" fill="#424242" stroke="#424242" stroke-width="0.7"/>
<path d="M718.0,528.6 L713.4,528.7 L712.3,526.2 L716.7,526.2 Z" fill="#434343" stroke="#434343" stroke-width="0.7"/>
<path d="M713.4,528.7 L708.7,528.9 L707.9,526.4 L712.3,526.2 Z" fill="#444444" stroke="#444444" stroke-width="0.7"/>
<path d="M708.7,528.9 L704.0,529.3 L703.3,526.8 L707.9,526.4 Z" fill="#454545" stroke="#454545" stroke-width="0.7"/>
<path d="M704.0,529.3 L699.3,529.9 L698.8,527.4 L703.3,526.8 Z" fill="#464646" stroke="#464646" stroke-width="0.7"/>
<path d="M699.3,529.9 L694.5,530.7 L694.3,528.1 L698.8,527.4 Z" fill="#474747" stroke="#474747" stroke-width="0.7"/>
<path d="M694.5,530.7 L689.8,531.6 L689.8,529.0 L694.3,528.1 Z" fill="#484848" stroke="#484848" stroke-width="0.7"/>
<path d="M689.8,531.6 L685.3,532.7 L685.4,530.1 L689.8,529.0 Z" fill="#494949" stroke="#494949" stroke-width="0.7"/>
<path d="M685.3,532.7 L680.8,534.0 L681.1,531.3 L685.4,530.1 Z" fill="#494949" stroke="#494949" stroke-width="0.7"/>
<path d="M680.8,534.0 L676.5,535.4 L677.0,532.6 L681.1,531.3 Z" fill="#4b4b4b" stroke="#4b4b4b" stroke-width="0.7"/>
<path d="M676.5,535.4 L672.3,536.9 L673.1,534.1 L677.0,532.6 Z" fill="#4e4e4e" stroke="#4e4e4e" stroke-width="0.7"/>
<path d="M672.3,536.9 L668.4,538.6 L669.3,535.7 L673.1,534.1 Z" fill="#515151" stroke="#515151" stroke-width="0.7"/>
<path d="M668.4,538.6 L664.8,540.4 L665.9,537.4 L669.3,535.7 Z" fill="#535353" stroke="#535353" stroke-width="0.7"/>
<path d="M664.8,540.4 L661.4,542.2 L662.6,539.1 L665.9,537.4 Z" fill="#555555" stroke="#555555" stroke-width="0.7"/>
<path d="M661.4,542.2 L658.3,544.2 L659.7,541.0 L662.6,539.1 Z" fill="#575757" stroke="#575757" stroke-width="0.7"/>
<path d="M658.3,544.2 L655.6,546.2 L657.1,542.9 L659.7,541.0 Z" fill="#585858" stroke="#585858" stroke-width="0.7"/>
<path d="M655.6,546.2 L653.2,548.2 L654.8,544.9 L657.1,542.9 Z" fill="#595959" stroke="#595959" stroke-width="0.7"/>
<path d="M653.2,548.2 L651.1,550.3 L652.8,546.9 L654.8,544.9 Z" fill="#5a5a5a" stroke="#5a5a5a" stroke-width="0.7"/>
<path d="M651.1,550.3 L649.5,552.5 L651.2,548.9 L652.8,546.9 Z" fill="#5a5a5a" stroke="#5a5a5a" stroke-width="0.7"/>
<path d="M649.5,552.5 L648.2,554.6 L650.0,551.0 L651.2,548.9 Z" fill="#5a5a5a" stroke="#5a5a5a" stroke-width="0.7"/>
<path d="M648.2,554.6 L647.4,556.7 L649.2,553.0 L650.0,551.0 Z" fill="#595959" stroke="#595959" stroke-width="0.7"/>
<path d="M647.4,556.7 L646.9,558.8 L648.8,555.0 L649.2,553.0 Z" fill="#595959" stroke="#595959" stroke-width="0.7"/>
<path d="M646.9,558.8 L646.9,560.8 L648.8,556.9 L648.8,555.0 Z" fill="#575757" stroke="#575757" stroke-width="0.7"/>
<path d="M646.9,560.8 L647.3,562.8 L649.1,558.8 L648.8,556.9 Z" fill="#565656" stroke="#565656" stroke-width="0.7"/>
<path d="M647.3,562.8 L648.1,564.7 L649.9,560.7 L649.1,558.8 Z" fill="#545454" stroke="#545454" stroke-width="0.7"/>
<path d="M648.1,564.7 L649.3,566.5 L651.0,562.4 L649.9,560.7 Z" fill="#525252" stroke="#525252" stroke-width="0.7"/>
<path d="M649.3,566.5 L650.9,568.3 L652.5,564.0 L651.0,562.4 Z" fill="#505050" stroke="#505050" stroke-width="0.7"/>
<path d="M650.9,568.3 L652.8,569.9 L654.4,565.6 L652.5,564.0 Z" fill="#4d4d4d" stroke="#4d4d4d" stroke-width="0.7"/>
<path d="M652.8,569.9 L655.2,571.3 L656.7,567.0 L654.4,565.6 Z" fill="#4a4a4a" stroke="#4a4a4a" stroke-width="0.7"/>
<path d="M655.2,571.3 L657.9,572.7 L659.2,568.2 L656.7,567.0 Z" fill="#474747" stroke="#474747" stroke-width="0.7"/>
<path d="M657.9,572.7 L660.9,573.8 L662.1,569.4 L659.2,568.2 Z" fill="#444444" stroke="#444444" stroke-width="0.7"/>
<path d="M660.9,573.8 L664.2,574.9 L665.3,570.4 L662.1,569.4 Z" fill="#434343" stroke="#434343" stroke-width="0.7"/>
<path d="M664.2,574.9 L667.8,575.7 L668.8,571.2 L665.3,570.4 Z" fill="#424242" stroke="#424242" stroke-width="0.7"/>
<path d="M667.8,575.7 L671.7,576.4 L672.5,571.8 L668.8,571.2 Z" fill="#414141" stroke="#414141" stroke-width="0.7"/>
<path d="M671.7,576.4 L675.8,576.9 L676.4,572.3 L672.5,571.8 Z" fill="#3f3f3f" stroke="#3f3f3f" stroke-width="0.7"/>
<path d="M675.8,576.9 L680.1,577.2 L680.5,572.6 L676.4,572.3 Z" fill="#3e3e3e" stroke="#3e3e3e" stroke-width="0.7"/>
<path d="M680.1,577.2 L684.5,577.4 L684.7,572.8 L680.5,572.6 Z" fill="#3d3d3d" stroke="#3d3d3d" stroke-width="0.7"/>
<path d="M684.5,577.4 L689.1,577.3 L689.1,572.7 L684.7,572.8 Z" fill="#3c3c3c" stroke="#3c3c3c" stroke-width="0.7"/>
<path d="M689.1,577.3 L693.8,577.1 L693.6,572.5 L689.1,572.7 Z" fill="#3b3b3b" stroke="#3b3b3b" stroke-width="0.7"/>
<path d="M693.8,577.1 L698.5,576.7 L698.1,572.1 L693.6,572.5 Z" fill="#3a3a3a" stroke="#3a3a3a" stroke-width="0.7"/>
<path d="M698.5,576.7 L703.2,576.1 L702.6,571.5 L698.1,572.1 Z" fill="#393939" stroke="#393939" stroke-width="0.7"/>
<path d="M703.2,576.1 L708.0,575.3 L707.1,570.8 L702.6,571.5 Z" fill="#383838" stroke="#383838" stroke-width="0.7"/>
<path d="M708.0,575.3 L712.6,574.4 L711.6,569.9 L707.1,570.8 Z" fill="#393939" stroke="#393939" stroke-width="0.7"/>
<path d="M712.6,574.4 L717.2,573.3 L716.0,568.8 L711.6,569.9 Z" fill="#3b3b3b" stroke="#3b3b3b" stroke-width="0.7"/>
<path d="M717.2,573.3 L721.7,572.0 L720.3,567.6 L716.0,568.8 Z" fill="#3e3e3e" stroke="#3e3e3e" stroke-width="0.7"/>
<path d="M721.7,572.0 L726.0,570.6 L724.4,566.3 L720.3,567.6 Z" fill="#404040" stroke="#404040" stroke-width="0.7"/>
<path d="M726.0,570.6 L730.1,569.1 L728.3,564.8 L724.4,566.3 Z" fill="#424242" stroke="#424242" stroke-width="0.7"/>
<path d="M730.1,569.1 L734.1,567.4 L732.1,563.2 L728.3,564.8 Z" fill="#454545" stroke="#454545" stroke-width="0.7"/>
<path d="M734.1,567.4 L737.7,565.7 L735.6,561.6 L732.1,563.2 Z" fill="#464646" stroke="#464646" stroke-width="0.7"/>
<path d="M737.7,565.7 L741.1,563.8 L738.8,559.8 L735.6,561.6 Z" fill="#484848" stroke="#484848" stroke-width="0.7"/>
<path d="M741.1,563.8 L744.2,561.9 L741.7,557.9 L738.8,559.8 Z" fill="#4a4a4a" stroke="#4a4a4a" stroke-width="0.7"/>
<path d="M744.2,561.9 L746.9,559.8 L744.4,556.0 L741.7,557.9 Z" fill="#4b4b4b" stroke="#4b4b4b" stroke-width="0.7"/>
<path d="M746.9,559.8 L749.3,557.8 L746.7,554.0 L744.4,556.0 Z" fill="#4c4c4c" stroke="#4c4c4c" stroke-width="0.7"/>
<path d="M746.7,554.0 L748.6,552.0 L746.4,548.1 L744.5,550.0 Z" fill="#4a4a4a" stroke="#4a4a4a" stroke-width="0.7"/>
<path d="M748.6,552.0 L750.2,550.0 L747.9,546.1 L746.4,548.1 Z" fill="#4a4a4a" stroke="#4a4a4a" stroke-width="0.7"/>
<path d="M750.2,550.0 L751.4,547.9 L749.1,544.2 L747.9,546.1 Z" fill="#4a4a4a" stroke="#4a4a4a" stroke-width="0.7"/>
<path d="M751.4,547.9 L752.2,545.9 L749.9,542.2 L749.1,544.2 Z" fill="#4a4a4a" stroke="#4a4a4a" stroke-width="0.7"/>
<path d="M752.2,545.9 L752.6,543.9 L750.3,540.3 L749.9,542.2 Z" fill="#4a4a4a" stroke="#4a4a4a" stroke-width="0.7"/>
<path d="M752.6,543.9 L752.7,542.0 L750.3,538.4 L750.3,540.3 Z" fill="#494949" stroke="#494949" stroke-width="0.7"/>
<path d="M752.7,542.0 L752.3,540.1 L750.0,536.6 L750.3,538.4 Z" fill="#484848" stroke="#484848" stroke-width="0.7"/>
<path d="M752.3,540.1 L751.5,538.3 L749.2,534.8 L750.0,536.6 Z" fill="#474747" stroke="#474747" stroke-width="0.7"/>
<path d="M751.5,538.3 L750.4,536.5 L748.1,533.1 L749.2,534.8 Z" fill="#464646" stroke="#464646" stroke-width="0.7"/>
<path d="M750.4,536.5 L748.9,534.9 L746.7,531.5 L748.1,533.1 Z" fill="#444444" stroke="#444444" stroke-width="0.7"/>
<path d="M748.9,534.9 L747.0,533.4 L744.8,530.1 L746.7,531.5 Z" fill="#424242" stroke="#424242" stroke-width="0.7"/>
<path d="M747.0,533.4 L744.7,532.0 L742.7,528.7 L744.8,530.1 Z" fill="#404040" stroke="#404040" stroke-width="0.7"/>
<path d="M744.7,532.0 L742.2,530.7 L740.2,527.5 L742.7,528.7 Z" fill="#3d3d3d" stroke="#3d3d3d" stroke-width="0.7"/>
<path d="M742.2,530.7 L739.3,529.5 L737.4,526.4 L740.2,527.5 Z" fill="#3b3b3b" stroke="#3b3b3b" stroke-width="0.7"/>
<path d="M739.3,529.5 L736.1,528.6 L734.3,525.4 L737.4,526.4 Z" fill="#383838" stroke="#383838" stroke-width="0.7"/>
<path d="M736.1,528.6 L732.6,527.8 L731.0,524.6 L734.3,525.4 Z" fill="#353535" stroke="#353535" stroke-width="0.7"/>
<path d="M732.6,527.8 L728.9,527.1 L727.4,524.0 L731.0,524.6 Z" fill="#333333" stroke="#333333" stroke-width="0.7"/>
<path d="M728.9,527.1 L725.0,526.6 L723.6,523.5 L727.4,524.0 Z" fill="#343434" stroke="#343434" stroke-width="0.7"/>
<path d="M725.0,526.6 L720.9,526.3 L719.7,523.2 L723.6,523.5 Z" fill="#363636" stroke="#363636" stroke-width="0.7"/>
<path d="M720.9,526.3 L716.7,526.2 L715.6,523.1 L719.7,523.2 Z" fill="#373737" stroke="#373737" stroke-width="0.7"/>
<path d="M716.7,526.2 L712.3,526.2 L711.3,523.1 L715.6,523.1 Z" fill="#383838" stroke="#383838" stroke-width="0.7"/>
<path d="M712.3,526.2 L707.9,526.4 L707.0,523.4 L711.3,523.1 Z" fill="#393939" stroke="#393939" stroke-width="0.7"/>
<path d="M707.9,526.4 L703.3,526.8 L702.7,523.7 L707.0,523.4 Z" fill="#3a3a3a" stroke="#3a3a3a" stroke-width="0.7"/>
<path d="M703.3,526.8 L698.8,527.4 L698.3,524.3 L702.7,523.7 Z" fill="#3b3b3b" stroke="#3b3b3b" stroke-width="0.7"/>
<path d="M698.8,527.4 L694.3,528.1 L693.9,525.0 L698.3,524.3 Z" fill="#3c3c3c" stroke="#3c3c3c" stroke-width="0.7"/>
<path d="M694.3,528.1 L689.8,529.0 L689.6,525.9 L693.9,525.0 Z" fill="#3d3d3d" stroke="#3d3d3d" stroke-width="0.7"/>
<path d="M689.8,529.0 L685.4,530.1 L685.4,526.9 L689.6,525.9 Z" fill="#414141" stroke="#414141" stroke-width="0.7"/>
<path d="M685.4,530.1 L681.1,531.3 L681.2,528.0 L685.4,526.9 Z" fill="#454545" stroke="#454545" stroke-width="0.7"/>
<path d="M681.1,531.3 L677.0,532.6 L677.2,529.3 L681.2,528.0 Z" fill="#484848" stroke="#484848" stroke-width="0.7"/>
<path d="M677.0,532.6 L673.1,534.1 L673.4,530.8 L677.2,529.3 Z" fill="#4b4b4b" stroke="#4b4b4b" stroke-width="0.7"/>
<path d="M673.1,534.1 L669.3,535.7 L669.8,532.3 L673.4,530.8 Z" fill="#4e4e4e" stroke="#4e4e4e" stroke-width="0.7"/>
<path d="M669.3,535.7 L665.9,537.4 L666.4,533.9 L669.8,532.3 Z" fill="#515151" stroke="#515151" stroke-width="0.7"/>
<path d="M665.9,537.4 L662.6,539.1 L663.3,535.6 L666.4,533.9 Z" fill="#535353" stroke="#535353" stroke-width="0.7"/>
<path d="M662.6,539.1 L659.7,541.0 L660.5,537.4 L663.3,535.6 Z" fill="#555555" stroke="#555555" stroke-width="0.7"/>
<path d="M659.7,541.0 L657.1,542.9 L657.9,539.3 L660.5,537.4 Z" fill="#565656" stroke="#565656" stroke-width="0.7"/>
<path d="M657.1,542.9 L654.8,544.9 L655.7,541.2 L657.9,539.3 Z" fill="#575757" stroke="#575757" stroke-width="0.7"/>
<path d="M654.8,544.9 L652.8,546.9 L653.8,543.1 L655.7,541.2 Z" fill="#585858" stroke="#585858" stroke-width="0.7"/>
<path d="M652.8,546.9 L651.2,548.9 L652.3,545.1 L653.8,543.1 Z" fill="#585858" stroke="#585858" stroke-width="0.7"/>
<path d="M651.2,548.9 L650.0,551.0 L651.2,547.1 L652.3,545.1 Z" fill="#585858" stroke="#585858" stroke-width="0.7"/>
<path d="M650.0,551.0 L649.2,553.0 L650.4,549.0 L651.2,547.1 Z" fill="#585858" stroke="#585858" stroke-width="0.7"/>
<path d="M649.2,553.0 L648.8,555.0 L650.0,551.0 L650.4,549.0 Z" fill="#575757" stroke="#575757" stroke-width="0.7"/>
<path d="M648.8,555.0 L648.8,556.9 L649.9,552.8 L650.0,551.0 Z" fill="#565656" stroke="#565656" stroke-width="0.7"/>
<path d="M648.8,556.9 L649.1,558.8 L650.3,554.7 L649.9,552.8 Z" fill="#545454" stroke="#545454" stroke-width="0.7"/>
<path d="M649.1,558.8 L649.9,560.7 L651.0,556.4 L650.3,554.7 Z" fill="#525252" stroke="#525252" stroke-width="0.7"/>
<path d="M649.9,560.7 L651.0,562.4 L652.1,558.1 L651.0,556.4 Z" fill="#505050" stroke="#505050" stroke-width="0.7"/>
<path d="M651.0,562.4 L652.5,564.0 L653.6,559.7 L652.1,558.1 Z" fill="#4d4d4d" stroke="#4d4d4d" stroke-width="0.7"/>
<path d="M652.5,564.0 L654.4,565.6 L655.4,561.2 L653.6,559.7 Z" fill="#4a4a4a" stroke="#4a4a4a" stroke-width="0.7"/>
<path d="M654.4,565.6 L656.7,567.0 L657.6,562.5 L655.4,561.2 Z" fill="#474747" stroke="#474747" stroke-width="0.7"/>
<path d="M656.7,567.0 L659.2,568.2 L660.1,563.8 L657.6,562.5 Z" fill="#434343" stroke="#434343" stroke-width="0.7"/>
<path d="M659.2,568.2 L662.1,569.4 L662.9,564.9 L660.1,563.8 Z" fill="#404040" stroke="#404040" stroke-width="0.7"/>
<path d="M662.1,569.4 L665.3,570.4 L665.9,565.8 L662.9,564.9 Z" fill="#3c3c3c" stroke="#3c3c3c" stroke-width="0.7"/>
<path d="M665.3,570.4 L668.8,571.2 L669.3,566.6 L665.9,565.8 Z" fill="#383838" stroke="#383838" stroke-width="0.7"/>
<path d="M668.8,571.2 L672.5,571.8 L672.8,567.2 L669.3,566.6 Z" fill="#353535" stroke="#353535" stroke-width="0.7"/>
<path d="M672.5,571.8 L676.4,572.3 L676.6,567.7 L672.8,567.2 Z" fill="#343434" stroke="#343434" stroke-width="0.7"/>
<path d="M676.4,572.3 L680.5,572.6 L680.6,568.0 L676.6,567.7 Z" fill="#333333" stroke="#333333" stroke-width="0.7"/>
<path d="M680.5,572.6 L684.7,572.8 L684.7,568.1 L680.6,568.0 Z" fill="#323232" stroke="#323232" stroke-width="0.7"/>
<path d="M684.7,572.8 L689.1,572.7 L688.9,568.1 L684.7,568.1 Z" fill="#313131" stroke="#313131" stroke-width="0.7"/>
<path d="M689.1,572.7 L693.6,572.5 L693.2,567.9 L688.9,568.1 Z" fill="#2f2f2f" stroke="#2f2f2f" stroke-width="0.7"/>
<path d="M693.6,572.5 L698.1,572.1 L697.6,567.5 L693.2,567.9 Z" fill="#2e2e2e" stroke="#2e2e2e" stroke-width="0.7"/>
<path d="M698.1,572.1 L702.6,571.5 L702.0,566.9 L697.6,567.5 Z" fill="#2e2e2e" stroke="#2e2e2e" stroke-width="0.7"/>
<path d="M702.6,571.5 L707.1,570.8 L706.3,566.2 L702.0,566.9 Z" fill="#313131" stroke="#313131" stroke-width="0.7"/>
<path d="M707.1,570.8 L711.6,569.9 L710.7,565.4 L706.3,566.2 Z" fill="#343434" stroke="#343434" stroke-width="0.7"/>
<path d="M711.6,569.9 L716.0,568.8 L714.9,564.3 L710.7,565.4 Z" fill="#373737" stroke="#373737" stroke-width="0.7"/>
<path d="M716.0,568.8 L720.3,567.6 L719.0,563.2 L714.9,564.3 Z" fill="#3a3a3a" stroke="#3a3a3a" stroke-width="0.7"/>
<path d="M720.3,567.6 L724.4,566.3 L723.0,561.9 L719.0,563.2 Z" fill="#3d3d3d" stroke="#3d3d3d" stroke-width="0.7"/>
<path d="M724.4,566.3 L728.3,564.8 L726.8,560.5 L723.0,561.9 Z" fill="#3f3f3f" stroke="#3f3f3f" stroke-width="0.7"/>
<path d="M728.3,564.8 L732.1,563.2 L730.4,558.9 L726.8,560.5 Z" fill="#414141" stroke="#414141" stroke-width="0.7"/>
<path d="M732.1,563.2 L735.6,561.6 L733.8,557.3 L730.4,558.9 Z" fill="#434343" stroke="#434343" stroke-width="0.7"/>
<path d="M735.6,561.6 L738.8,559.8 L736.9,555.6 L733.8,557.3 Z" fill="#454545" stroke="#454545" stroke-width="0.7"/>
<path d="M738.8,559.8 L741.7,557.9 L739.8,553.8 L736.9,555.6 Z" fill="#474747" stroke="#474747" stroke-width="0.7"/>
<path d="M741.7,557.9 L744.4,556.0 L742.3,551.9 L739.8,553.8 Z" fill="#484848" stroke="#484848" stroke-width="0.7"/>
<path d="M744.4,556.0 L746.7,554.0 L744.5,550.0 L742.3,551.9 Z" fill="#494949" stroke="#494949" stroke-width="0.7"/>
<path d="M744.5,550.0 L746.4,548.1 L744.8,544.0 L743.0,545.9 Z" fill="#464646" stroke="#464646" stroke-width="0.7"/>
<path d="M746.4,548.1 L747.9,546.1 L746.3,542.1 L744.8,544.0 Z" fill="#464646" stroke="#464646" stroke-width="0.7"/>
<path d="M747.9,546.1 L749.1,544.2 L747.4,540.1 L746.3,542.1 Z" fill="#464646" stroke="#464646" stroke-width="0.7"/>
<path d="M749.1,544.2 L749.9,542.2 L748.2,538.2 L747.4,540.1 Z" fill="#464646" stroke="#464646" stroke-width="0.7"/>
<path d="M749.9,542.2 L750.3,540.3 L748.6,536.3 L748.2,538.2 Z" fill="#464646" stroke="#464646" stroke-width="0.7"/>
<path d="M750.3,540.3 L750.3,538.4 L748.6,534.5 L748.6,536.3 Z" fill="#454545" stroke="#454545" stroke-width="0.7"/>
<path d="M750.3,538.4 L750.0,536.6 L748.3,532.7 L748.6,534.5 Z" fill="#444444" stroke="#444444" stroke-width="0.7"/>
<path d="M750.0,536.6 L749.2,534.8 L747.6,531.0 L748.3,532.7 Z" fill="#434343" stroke="#434343" stroke-width="0.7"/>
<path d="M749.2,534.8 L748.1,533.1 L746.5,529.3 L747.6,531.0 Z" fill="#414141" stroke="#414141" stroke-width="0.7"/>
<path d="M748.1,533.1 L746.7,531.5 L745.1,527.8 L746.5,529.3 Z" fill="#404040" stroke="#404040" stroke-width="0.7"/>
<path d="M746.7,531.5 L744.8,530.1 L743.3,526.3 L745.1,527.8 Z" fill="#3e3e3e" stroke="#3e3e3e" stroke-width="0.7"/>
<path d="M744.8,530.1 L742.7,528.7 L741.2,525.0 L743.3,526.3 Z" fill="#3b3b3b" stroke="#3b3b3b" stroke-width="0.7"/>
<path d="M742.7,528.7 L740.2,527.5 L738.7,523.8 L741.2,525.0 Z" fill="#393939" stroke="#393939" stroke-width="0.7"/>
<path d="M740.2,527.5 L737.4,526.4 L736.0,522.7 L738.7,523.8 Z" fill="#363636" stroke="#363636" stroke-width="0.7"/>
<path d="M737.4,526.4 L734.3,525.4 L733.0,521.8 L736.0,522.7 Z" fill="#333333" stroke="#333333" stroke-width="0.7"/>
<path d="M734.3,525.4 L731.0,524.6 L729.7,521.0 L733.0,521.8 Z" fill="#303030" stroke="#303030" stroke-width="0.7"/>
<path d="M731.0,524.6 L727.4,524.0 L726.2,520.4 L729.7,521.0 Z" fill="#2d2d2d" stroke="#2d2d2d" stroke-width="0.7"/>
<path d="M727.4,524.0 L723.6,523.5 L722.5,520.0 L726.2,520.4 Z" fill="#2a2a2a" stroke="#2a2a2a" stroke-width="0.7"/>
<path d="M723.6,523.5 L719.7,523.2 L718.6,519.7 L722.5,520.0 Z" fill="#2a2a2a" stroke="#2a2a2a" stroke-width="0.7"/>
<path d="M719.7,523.2 L715.6,523.1 L714.6,519.5 L718.6,519.7 Z" fill="#2b2b2b" stroke="#2b2b2b" stroke-width="0.7"/>
<path d="M715.6,523.1 L711.3,523.1 L710.5,519.6 L714.6,519.5 Z" fill="#2c2c2c" stroke="#2c2c2c" stroke-width="0.7"/>
<path d="M711.3,523.1 L707.0,523.4 L706.3,519.8 L710.5,519.6 Z" fill="#2d2d2d" stroke="#2d2d2d" stroke-width="0.7"/>
<path d="M707.0,523.4 L702.7,523.7 L702.0,520.2 L706.3,519.8 Z" fill="#2f2f2f" stroke="#2f2f2f" stroke-width="0.7"/>
<path d="M702.7,523.7 L698.3,524.3 L697.7,520.7 L702.0,520.2 Z" fill="#303030" stroke="#303030" stroke-width="0.7"/>
<path d="M698.3,524.3 L693.9,525.0 L693.4,521.4 L697.7,520.7 Z" fill="#343434" stroke="#343434" stroke-width="0.7"/>
<path d="M693.9,525.0 L689.6,525.9 L689.2,522.2 L693.4,521.4 Z" fill="#393939" stroke="#393939" stroke-width="0.7"/>
<path d="M689.6,525.9 L685.4,526.9 L685.1,523.2 L689.2,522.2 Z" fill="#3d3d3d" stroke="#3d3d3d" stroke-width="0.7"/>
<path d="M685.4,526.9 L681.2,528.0 L681.0,524.4 L685.1,523.2 Z" fill="#404040" stroke="#404040" stroke-width="0.7"/>
<path d="M681.2,528.0 L677.2,529.3 L677.1,525.6 L681.0,524.4 Z" fill="#444444" stroke="#444444" stroke-width="0.7"/>
<path d="M677.2,529.3 L673.4,530.8 L673.4,527.0 L677.1,525.6 Z" fill="#474747" stroke="#474747" stroke-width="0.7"/>
<path d="M673.4,530.8 L669.8,532.3 L669.9,528.5 L673.4,527.0 Z" fill="#4a4a4a" stroke="#4a4a4a" stroke-width="0.7"/>
<path d="M669.8,532.3 L666.4,533.9 L666.5,530.1 L669.9,528.5 Z" fill="#4d4d4d" stroke="#4d4d4d" stroke-width="0.7"/>
<path d="M666.4,533.9 L663.3,535.6 L663.5,531.8 L666.5,530.1 Z" fill="#4f4f4f" stroke="#4f4f4f" stroke-width="0.7"/>
<path d="M663.3,535.6 L660.5,537.4 L660.7,533.6 L663.5,531.8 Z" fill="#515151" stroke="#515151" stroke-width="0.7"/>
<path d="M660.5,537.4 L657.9,539.3 L658.2,535.4 L660.7,533.6 Z" fill="#535353" stroke="#535353" stroke-width="0.7"/>
<path d="M657.9,539.3 L655.7,541.2 L656.1,537.3 L658.2,535.4 Z" fill="#545454" stroke="#545454" stroke-width="0.7"/>
<path d="M655.7,541.2 L653.8,543.1 L654.2,539.2 L656.1,537.3 Z" fill="#545454" stroke="#545454" stroke-width="0.7"/>
<path d="M653.8,543.1 L652.3,545.1 L652.7,541.1 L654.2,539.2 Z" fill="#555555" stroke="#555555" stroke-width="0.7"/>
<path d="M652.3,545.1 L651.2,547.1 L651.6,543.0 L652.7,541.1 Z" fill="#555555" stroke="#555555" stroke-width="0.7"/>
<path d="M651.2,547.1 L650.4,549.0 L650.8,544.9 L651.6,543.0 Z" fill="#545454" stroke="#545454" stroke-width="0.7"/>
<path d="M650.4,549.0 L650.0,551.0 L650.4,546.8 L650.8,544.9 Z" fill="#535353" stroke="#535353" stroke-width="0.7"/>
<path d="M650.0,551.0 L649.9,552.8 L650.4,548.6 L650.4,546.8 Z" fill="#525252" stroke="#525252" stroke-width="0.7"/>
<path d="M649.9,552.8 L650.3,554.7 L650.7,550.4 L650.4,548.6 Z" fill="#505050" stroke="#505050" stroke-width="0.7"/>
<path d="M650.3,554.7 L651.0,556.4 L651.4,552.1 L650.7,550.4 Z" fill="#4e4e4e" stroke="#4e4e4e" stroke-width="0.7"/>
<path d="M651.0,556.4 L652.1,558.1 L652.5,553.8 L651.4,552.1 Z" fill="#4c4c4c" stroke="#4c4c4c" stroke-width="0.7"/>
<path d="M652.1,558.1 L653.6,559.7 L654.0,555.3 L652.5,553.8 Z" fill="#494949" stroke="#494949" stroke-width="0.7"/>
<path d="M653.6,559.7 L655.4,561.2 L655.7,556.8 L654.0,555.3 Z" fill="#464646" stroke="#464646" stroke-width="0.7"/>
<path d="M655.4,561.2 L657.6,562.5 L657.9,558.1 L655.7,556.8 Z" fill="#434343" stroke="#434343" stroke-width="0.7"/>
<path d="M657.6,562.5 L660.1,563.8 L660.3,559.3 L657.9,558.1 Z" fill="#3f3f3f" stroke="#3f3f3f" stroke-width="0.7"/>
<path d="M660.1,563.8 L662.9,564.9 L663.0,560.4 L660.3,559.3 Z" fill="#3b3b3b" stroke="#3b3b3b" stroke-width="0.7"/>
<path d="M662.9,564.9 L665.9,565.8 L666.0,561.3 L663.0,560.4 Z" fill="#373737" stroke="#373737" stroke-width="0.7"/>
<path d="M665.9,565.8 L669.3,566.6 L669.3,562.1 L666.0,561.3 Z" fill="#333333" stroke="#333333" stroke-width="0.7"/>
<path d="M669.3,566.6 L672.8,567.2 L672.8,562.7 L669.3,562.1 Z" fill="#2e2e2e" stroke="#2e2e2e" stroke-width="0.7"/>
<path d="M672.8,567.2 L676.6,567.7 L676.5,563.2 L672.8,562.7 Z" fill="#2a2a2a" stroke="#2a2a2a" stroke-width="0.7"/>
<path d="M676.6,567.7 L680.6,568.0 L680.4,563.5 L676.5,563.2 Z" fill="#272727" stroke="#272727" stroke-width="0.7"/>
<path d="M680.6,568.0 L684.7,568.1 L684.4,563.6 L680.4,563.5 Z" fill="#262626" stroke="#262626" stroke-width="0.7"/>
<path d="M684.7,568.1 L688.9,568.1 L688.5,563.5 L684.4,563.6 Z" fill="#242424" stroke="#242424" stroke-width="0.7"/>
<path d="M688.9,568.1 L693.2,567.9 L692.8,563.3 L688.5,563.5 Z" fill="#232323" stroke="#232323" stroke-width="0.7"/>
<path d="M693.2,567.9 L697.6,567.5 L697.0,563.0 L692.8,563.3 Z" fill="#252525" stroke="#252525" stroke-width="0.7"/>
<path d="M697.6,567.5 L702.0,566.9 L701.3,562.4 L697.0,563.0 Z" fill="#292929" stroke="#292929" stroke-width="0.7"/>
<path d="M702.0,566.9 L706.3,566.2 L705.6,561.7 L701.3,562.4 Z" fill="#2c2c2c" stroke="#2c2c2c" stroke-width="0.7"/>
<path d="M706.3,566.2 L710.7,565.4 L709.8,560.9 L705.6,561.7 Z" fill="#2f2f2f" stroke="#2f2f2f" stroke-width="0.7"/>
<path d="M710.7,565.4 L714.9,564.3 L714.0,559.9 L709.8,560.9 Z" fill="#323232" stroke="#323232" stroke-width="0.7"/>
<path d="M714.9,564.3 L719.0,563.2 L718.0,558.7 L714.0,559.9 Z" fill="#353535" stroke="#353535" stroke-width="0.7"/>
<path d="M719.0,563.2 L723.0,561.9 L721.9,557.5 L718.0,558.7 Z" fill="#383838" stroke="#383838" stroke-width="0.7"/>
<path d="M723.0,561.9 L726.8,560.5 L725.6,556.1 L721.9,557.5 Z" fill="#3a3a3a" stroke="#3a3a3a" stroke-width="0.7"/>
<path d="M726.8,560.5 L730.4,558.9 L729.2,554.6 L725.6,556.1 Z" fill="#3d3d3d" stroke="#3d3d3d" stroke-width="0.7"/>
<path d="M730.4,558.9 L733.8,557.3 L732.5,553.0 L729.2,554.6 Z" fill="#3f3f3f" stroke="#3f3f3f" stroke-width="0.7"/>
<path d="M733.8,557.3 L736.9,555.6 L735.5,551.3 L732.5,553.0 Z" fill="#414141" stroke="#414141" stroke-width="0.7"/>
<path d="M736.9,555.6 L739.8,553.8 L738.3,549.6 L735.5,551.3 Z" fill="#424242" stroke="#424242" stroke-width="0.7"/>
<path d="M739.8,553.8 L742.3,551.9 L740.8,547.7 L738.3,549.6 Z" fill="#444444" stroke="#444444" stroke-width="0.7"/>
<path d="M742.3,551.9 L744.5,550.0 L743.0,545.9 L740.8,547.7 Z" fill="#454545" stroke="#454545" stroke-width="0.7"/>
<path d="M743.0,545.9 L744.8,544.0 L743.8,539.8 L742.0,541.7 Z" fill="#414141" stroke="#414141" stroke-width="0.7"/>
<path d="M744.8,544.0 L746.3,542.1 L745.3,537.9 L743.8,539.8 Z" fill="#414141" stroke="#414141" stroke-width="0.7"/>
<path d="M746.3,542.1 L747.4,540.1 L746.4,536.0 L745.3,537.9 Z" fill="#414141" stroke="#414141" stroke-width="0.7"/>
<path d="M747.4,540.1 L748.2,538.2 L747.2,534.1 L746.4,536.0 Z" fill="#414141" stroke="#414141" stroke-width="0.7"/>
<path d="M748.2,538.2 L748.6,536.3 L747.6,532.2 L747.2,534.1 Z" fill="#414141" stroke="#414141" stroke-width="0.7"/>
<path d="M748.6,536.3 L748.6,534.5 L747.6,530.4 L747.6,532.2 Z" fill="#404040" stroke="#404040" stroke-width="0.7"/>
<path d="M748.6,534.5 L748.3,532.7 L747.3,528.6 L747.6,530.4 Z" fill="#3f3f3f" stroke="#3f3f3f" stroke-width="0.7"/>
<path d="M748.3,532.7 L747.6,531.0 L746.6,526.9 L747.3,528.6 Z" fill="#3e3e3e" stroke="#3e3e3e" stroke-width="0.7"/>
<path d="M747.6,531.0 L746.5,529.3 L745.5,525.3 L746.6,526.9 Z" fill="#3c3c3c" stroke="#3c3c3c" stroke-width="0.7"/>
<path d="M746.5,529.3 L745.1,527.8 L744.1,523.7 L745.5,525.3 Z" fill="#3a3a3a" stroke="#3a3a3a" stroke-width="0.7"/>
<path d="M745.1,527.8 L743.3,526.3 L742.3,522.3 L744.1,523.7 Z" fill="#383838" stroke="#383838" stroke-width="0.7"/>
<path d="M743.3,526.3 L741.2,525.0 L740.2,521.0 L742.3,522.3 Z" fill="#363636" stroke="#363636" stroke-width="0.7"/>
<path d="M741.2,525.0 L738.7,523.8 L737.8,519.8 L740.2,521.0 Z" fill="#333333" stroke="#333333" stroke-width="0.7"/>
<path d="M738.7,523.8 L736.0,522.7 L735.1,518.7 L737.8,519.8 Z" fill="#313131" stroke="#313131" stroke-width="0.7"/>
<path d="M736.0,522.7 L733.0,521.8 L732.1,517.8 L735.1,518.7 Z" fill="#2e2e2e" stroke="#2e2e2e" stroke-width="0.7"/>
<path d="M733.0,521.8 L729.7,521.0 L728.9,517.0 L732.1,517.8 Z" fill="#2a2a2a" stroke="#2a2a2a" stroke-width="0.7"/>
<path d="M729.7,521.0 L726.2,520.4 L725.4,516.4 L728.9,517.0 Z" fill="#272727" stroke="#272727" stroke-width="0.7"/>
<path d="M726.2,520.4 L722.5,520.0 L721.7,516.0 L725.4,516.4 Z" fill="#242424" stroke="#242424" stroke-width="0.7"/>
<path d="M722.5,520.0 L718.6,519.7 L717.9,515.7 L721.7,516.0 Z" fill="#202020" stroke="#202020" stroke-width="0.7"/>
<path d="M718.6,519.7 L714.6,519.5 L713.9,515.5 L717.9,515.7 Z" fill="#1f1f1f" stroke="#1f1f1f" stroke-width="0.7"/>
<path d="M714.6,519.5 L710.5,519.6 L709.8,515.6 L713.9,515.5 Z" fill="#202020" stroke="#202020" stroke-width="0.7"/>
<path d="M710.5,519.6 L706.3,519.8 L705.6,515.8 L709.8,515.6 Z" fill="#212121" stroke="#212121" stroke-width="0.7"/>
<path d="M706.3,519.8 L702.0,520.2 L701.3,516.2 L705.6,515.8 Z" fill="#262626" stroke="#262626" stroke-width="0.7"/>
<path d="M702.0,520.2 L697.7,520.7 L697.1,516.7 L701.3,516.2 Z" fill="#2a2a2a" stroke="#2a2a2a" stroke-width="0.7"/>
<path d="M697.7,520.7 L693.4,521.4 L692.8,517.4 L697.1,516.7 Z" fill="#2f2f2f" stroke="#2f2f2f" stroke-width="0.7"/>
<path d="M693.4,521.4 L689.2,522.2 L688.6,518.2 L692.8,517.4 Z" fill="#333333" stroke="#333333" stroke-width="0.7"/>
<path d="M689.2,522.2 L685.1,523.2 L684.5,519.2 L688.6,518.2 Z" fill="#373737" stroke="#373737" stroke-width="0.7"/>
<path d="M685.1,523.2 L681.0,524.4 L680.5,520.3 L684.5,519.2 Z" fill="#3b3b3b" stroke="#3b3b3b" stroke-width="0.7"/>
<path d="M681.0,524.4 L677.1,525.6 L676.6,521.6 L680.5,520.3 Z" fill="#3f3f3f" stroke="#3f3f3f" stroke-width="0.7"/>
<path d="M677.1,525.6 L673.4,527.0 L672.9,523.0 L676.6,521.6 Z" fill="#424242" stroke="#424242" stroke-width="0.7"/>
<path d="M673.4,527.0 L669.9,528.5 L669.4,524.5 L672.9,523.0 Z" fill="#454545" stroke="#454545" stroke-width="0.7"/>
<path d="M669.9,528.5 L666.5,530.1 L666.2,526.1 L669.4,524.5 Z" fill="#484848" stroke="#484848" stroke-width="0.7"/>
<path d="M666.5,530.1 L663.5,531.8 L663.1,527.7 L666.2,526.1 Z" fill="#4a4a4a" stroke="#4a4a4a" stroke-width="0.7"/>
<path d="M663.5,531.8 L660.7,533.6 L660.4,529.5 L663.1,527.7 Z" fill="#4c4c4c" stroke="#4c4c4c" stroke-width="0.7"/>
<path d="M660.7,533.6 L658.2,535.4 L657.9,531.3 L660.4,529.5 Z" fill="#4e4e4e" stroke="#4e4e4e" stroke-width="0.7"/>
<path d="M658.2,535.4 L656.1,537.3 L655.7,533.1 L657.9,531.3 Z" fill="#4f4f4f" stroke="#4f4f4f" stroke-width="0.7"/>
<path d="M656.1,537.3 L654.2,539.2 L653.9,535.0 L655.7,533.1 Z" fill="#505050" stroke="#505050" stroke-width="0.7"/>
<path d="M654.2,539.2 L652.7,541.1 L652.4,536.9 L653.9,535.0 Z" fill="#505050" stroke="#505050" stroke-width="0.7"/>
<path d="M652.7,541.1 L651.6,543.0 L651.3,538.8 L652.4,536.9 Z" fill="#505050" stroke="#505050" stroke-width="0.7"/>
<path d="M651.6,543.0 L650.8,544.9 L650.5,540.7 L651.3,538.8 Z" fill="#4f4f4f" stroke="#4f4f4f" stroke-width="0.7"/>
<path d="M650.8,544.9 L650.4,546.8 L650.1,542.6 L650.5,540.7 Z" fill="#4e4e4e" stroke="#4e4e4e" stroke-width="0.7"/>
<path d="M650.4,546.8 L650.4,548.6 L650.1,544.4 L650.1,542.6 Z" fill="#4d4d4d" stroke="#4d4d4d" stroke-width="0.7"/>
<path d="M650.4,548.6 L650.7,550.4 L650.4,546.2 L650.1,544.4 Z" fill="#4b4b4b" stroke="#4b4b4b" stroke-width="0.7"/>
<path d="M650.7,550.4 L651.4,552.1 L651.2,547.9 L650.4,546.2 Z" fill="#494949" stroke="#494949" stroke-width="0.7"/>
<path d="M651.4,552.1 L652.5,553.8 L652.2,549.5 L651.2,547.9 Z" fill="#474747" stroke="#474747" stroke-width="0.7"/>
<path d="M652.5,553.8 L654.0,555.3 L653.7,551.1 L652.2,549.5 Z" fill="#444444" stroke="#444444" stroke-width="0.7"/>
<path d="M654.0,555.3 L655.7,556.8 L655.4,552.5 L653.7,551.1 Z" fill="#414141" stroke="#414141" stroke-width="0.7"/>
<path d="M655.7,556.8 L657.9,558.1 L657.5,553.8 L655.4,552.5 Z" fill="#3d3d3d" stroke="#3d3d3d" stroke-width="0.7"/>
<path d="M657.9,558.1 L660.3,559.3 L660.0,555.0 L657.5,553.8 Z" fill="#3a3a3a" stroke="#3a3a3a" stroke-width="0.7"/>
<path d="M660.3,559.3 L663.0,560.4 L662.7,556.1 L660.0,555.0 Z" fill="#363636" stroke="#363636" stroke-width="0.7"/>
<path d="M663.0,560.4 L666.0,561.3 L665.7,557.0 L662.7,556.1 Z" fill="#313131" stroke="#313131" stroke-width="0.7"/>
<path d="M666.0,561.3 L669.3,562.1 L668.9,557.8 L665.7,557.0 Z" fill="#2d2d2d" stroke="#2d2d2d" stroke-width="0.7"/>
<path d="M669.3,562.1 L672.8,562.7 L672.4,558.4 L668.9,557.8 Z" fill="#292929" stroke="#292929" stroke-width="0.7"/>
<path d="M672.8,562.7 L676.5,563.2 L676.0,558.9 L672.4,558.4 Z" fill="#242424" stroke="#242424" stroke-width="0.7"/>
<path d="M676.5,563.2 L680.4,563.5 L679.9,559.1 L676.0,558.9 Z" fill="#1f1f1f" stroke="#1f1f1f" stroke-width="0.7"/>
<path d="M680.4,563.5 L684.4,563.6 L683.9,559.3 L679.9,559.1 Z" fill="#1e1e1e" stroke="#1e1e1e" stroke-width="0.7"/>
<path d="M684.4,563.6 L688.5,563.5 L688.0,559.2 L683.9,559.3 Z" fill="#1e1e1e" stroke="#1e1e1e" stroke-width="0.7"/>
<path d="M688.5,563.5 L692.8,563.3 L692.2,559.0 L688.0,559.2 Z" fill="#1e1e1e" stroke="#1e1e1e" stroke-width="0.7"/>
<path d="M692.8,563.3 L697.0,563.0 L696.4,558.7 L692.2,559.0 Z" fill="#1f1f1f" stroke="#1f1f1f" stroke-width="0.7"/>
<path d="M697.0,563.0 L701.3,562.4 L700.7,558.1 L696.4,558.7 Z" fill="#232323" stroke="#232323" stroke-width="0.7"/>
<path d="M701.3,562.4 L705.6,561.7 L704.9,557.4 L700.7,558.1 Z" fill="#262626" stroke="#262626" stroke-width="0.7"/>
<path d="M705.6,561.7 L709.8,560.9 L709.1,556.6 L704.9,557.4 Z" fill="#292929" stroke="#292929" stroke-width="0.7"/>
<path d="M709.8,560.9 L714.0,559.9 L713.2,555.6 L709.1,556.6 Z" fill="#2c2c2c" stroke="#2c2c2c" stroke-width="0.7"/>
<path d="M714.0,559.9 L718.0,558.7 L717.2,554.5 L713.2,555.6 Z" fill="#2f2f2f" stroke="#2f2f2f" stroke-width="0.7"/>
<path d="M718.0,558.7 L721.9,557.5 L721.1,553.2 L717.2,554.5 Z" fill="#323232" stroke="#323232" stroke-width="0.7"/>
<path d="M721.9,557.5 L725.6,556.1 L724.8,551.8 L721.1,553.2 Z" fill="#353535" stroke="#353535" stroke-width="0.7"/>
<path d="M725.6,556.1 L729.2,554.6 L728.3,550.3 L724.8,551.8 Z" fill="#373737" stroke="#373737" stroke-width="0.7"/>
<path d="M729.2,554.6 L732.5,553.0 L731.6,548.8 L728.3,550.3 Z" fill="#3a3a3a" stroke="#3a3a3a" stroke-width="0.7"/>
<path d="M732.5,553.0 L735.5,551.3 L734.6,547.1 L731.6,548.8 Z" fill="#3c3c3c" stroke="#3c3c3c" stroke-width="0.7"/>
<path d="M735.5,551.3 L738.3,549.6 L737.4,545.3 L734.6,547.1 Z" fill="#3d3d3d" stroke="#3d3d3d" stroke-width="0.7"/>
<path d="M738.3,549.6 L740.8,547.7 L739.9,543.5 L737.4,545.3 Z" fill="#3f3f3f" stroke="#3f3f3f" stroke-width="0.7"/>
<path d="M740.8,547.7 L743.0,545.9 L742.0,541.7 L739.9,543.5 Z" fill="#404040" stroke="#404040" stroke-width="0.7"/>
<path d="M771.9,570.8 L773.7,569.0 L775.3,567.2 L776.7,565.3 L778.0,563.5 L779.0,561.7 L779.8,559.9 L780.4,558.1 L780.8,556.3 L780.9,554.5 L780.9,552.7 L780.6,551.0 L780.2,549.3 L779.5,547.7 L778.6,546.1 L777.5,544.5 L776.2,543.0 L774.7,541.6 L773.0,540.2 L771.1,538.9 L769.0,537.7 L766.8,536.5 L764.3,535.4 L761.7,534.4 L759.0,533.5 L756.0,532.6 L753.0,531.8 L749.8,531.2 L746.4,530.6 L743.0,530.1 L739.4,529.7 L735.8,529.3 L732.0,529.1 L728.2,529.0 L724.3,529.0 L720.3,529.1 L716.3,529.2 L712.3,529.5 L708.2,529.8 L704.1,530.3 L700.1,530.8 L696.0,531.5 L691.9,532.2 L687.9,533.0 L683.9,533.9 L680.0,534.9 L676.1,535.9 L672.3,537.1 L668.6,538.3 L665.0,539.5 L661.4,540.9 L658.0,542.3 L654.8,543.8 L651.6,545.3 L648.6,546.9 L645.7,548.5 L643.0,550.1 L640.5,551.8 L638.1,553.6 L635.9,555.3 L633.9,557.1 L632.1,558.9 L630.5,560.7 L629.1,562.6 L627.9,564.4 L626.8,566.2 L626.0,568.1 L625.4,569.9 L625.0,571.7 L624.9,573.4 L624.9,575.2 L625.2,576.9 L625.6,578.6 L626.3,580.2 L627.2,581.8 L628.3,583.4 L629.6,584.9 L631.1,586.3 L632.8,587.7 L634.7,589.0 L636.8,590.2 L639.1,591.4 L641.5,592.5 L644.1,593.5 L646.9,594.5 L649.8,595.3 L652.9,596.1 L656.1,596.8 L659.4,597.4 L662.8,597.9 L666.4,598.3 L670.1,598.6 L673.8,598.8 L677.6,598.9 L681.5,598.9 L685.5,598.9 L689.5,598.7 L693.5,598.4 L697.6,598.1 L701.7,597.6 L705.8,597.1 L709.9,596.4 L713.9,595.7 L717.9,594.9 L721.9,594.0 L725.9,593.0 L729.7,592.0 L733.5,590.9 L737.2,589.7 L740.9,588.4 L744.4,587.0 L747.8,585.6 L751.1,584.2 L754.2,582.6 L757.2,581.1 L760.1,579.4 L762.8,577.8 L765.3,576.1 L767.7,574.3 L769.9,572.6 L771.9,570.8" stroke="#9c5f0e" stroke-width="1.35" fill="none" stroke-linejoin="round" />
<path d="M767.9,544.2 L769.7,542.4 L771.3,540.6 L772.7,538.8 L773.9,537.0 L775.0,535.1 L775.8,533.3 L776.4,531.5 L776.7,529.7 L776.9,527.9 L776.9,526.2 L776.6,524.5 L776.1,522.8 L775.5,521.1 L774.6,519.5 L773.5,518.0 L772.2,516.5 L770.7,515.1 L769.0,513.7 L767.1,512.4 L765.0,511.1 L762.7,510.0 L760.3,508.9 L757.7,507.8 L754.9,506.9 L752.0,506.0 L748.9,505.3 L745.7,504.6 L742.4,504.0 L739.0,503.5 L735.4,503.1 L731.7,502.8 L728.0,502.6 L724.2,502.5 L720.3,502.4 L716.3,502.5 L712.3,502.7 L708.3,502.9 L704.2,503.3 L700.1,503.7 L696.0,504.3 L691.9,504.9 L687.9,505.6 L683.8,506.4 L679.9,507.3 L675.9,508.3 L672.1,509.4 L668.3,510.5 L664.5,511.7 L660.9,513.0 L657.4,514.3 L654.0,515.7 L650.7,517.2 L647.6,518.7 L644.6,520.3 L641.7,521.9 L639.0,523.6 L636.5,525.3 L634.1,527.0 L631.9,528.8 L629.9,530.6 L628.1,532.4 L626.5,534.2 L625.0,536.0 L623.8,537.8 L622.8,539.7 L622.0,541.5 L621.4,543.3 L621.0,545.1 L620.8,546.9 L620.9,548.6 L621.1,550.4 L621.6,552.0 L622.3,553.7 L623.2,555.3 L624.3,556.8 L625.6,558.3 L627.1,559.8 L628.8,561.1 L630.7,562.4 L632.8,563.7 L635.0,564.9 L637.5,566.0 L640.1,567.0 L642.8,567.9 L645.7,568.8 L648.8,569.5 L652.0,570.2 L655.3,570.8 L658.8,571.3 L662.4,571.7 L666.0,572.0 L669.8,572.2 L673.6,572.4 L677.5,572.4 L681.5,572.3 L685.5,572.1 L689.5,571.9 L693.6,571.5 L697.7,571.1 L701.7,570.5 L705.8,569.9 L709.9,569.2 L713.9,568.4 L717.9,567.5 L721.8,566.5 L725.7,565.4 L729.5,564.3 L733.2,563.1 L736.8,561.8 L740.3,560.5 L743.8,559.1 L747.0,557.6 L750.2,556.1 L753.2,554.5 L756.0,552.9 L758.8,551.2 L761.3,549.5 L763.7,547.8 L765.8,546.0 L767.9,544.2" stroke="#9c5f0e" stroke-width="1.35" fill="none" stroke-linejoin="round" />
<path d="M633.9,557.1 L636.2,557.2 L638.4,557.2 L640.5,556.9 L642.5,556.4 L644.5,555.7 L646.3,554.8 L648.0,553.8 L649.6,552.6 L651.0,551.2 L652.3,549.6 L653.4,547.9 L654.3,546.1 L655.0,544.1 L655.6,542.1 L655.9,539.9 L656.1,537.7 L656.0,535.4 L655.7,533.1" stroke="#9c5f0e" stroke-width="1.35" fill="none" stroke-linejoin="round" />
<defs><linearGradient id="cg1" gradientUnits="userSpaceOnUse" x1="650.2" y1="545.0" x2="747.6" y2="530.1"><stop offset="0.000" stop-color="#575757"/><stop offset="0.021" stop-color="#4d4d4d"/><stop offset="0.042" stop-color="#474747"/><stop offset="0.062" stop-color="#424242"/><stop offset="0.083" stop-color="#3d3d3d"/><stop offset="0.104" stop-color="#393939"/><stop offset="0.125" stop-color="#343434"/><stop offset="0.146" stop-color="#303030"/><stop offset="0.167" stop-color="#2b2b2b"/><stop offset="0.188" stop-color="#272727"/><stop offset="0.208" stop-color="#232323"/><stop offset="0.229" stop-color="#202020"/><stop offset="0.250" stop-color="#1e1e1e"/><stop offset="0.271" stop-color="#1e1e1e"/><stop offset="0.292" stop-color="#1e1e1e"/><stop offset="0.312" stop-color="#1e1e1e"/><stop offset="0.333" stop-color="#1e1e1e"/><stop offset="0.354" stop-color="#1e1e1e"/><stop offset="0.375" stop-color="#1e1e1e"/><stop offset="0.396" stop-color="#1e1e1e"/><stop offset="0.417" stop-color="#1e1e1e"/><stop offset="0.438" stop-color="#1e1e1e"/><stop offset="0.458" stop-color="#1f1f1f"/><stop offset="0.479" stop-color="#212121"/><stop offset="0.500" stop-color="#222222"/><stop offset="0.521" stop-color="#242424"/><stop offset="0.542" stop-color="#252525"/><stop offset="0.562" stop-color="#272727"/><stop offset="0.583" stop-color="#292929"/><stop offset="0.604" stop-color="#2a2a2a"/><stop offset="0.625" stop-color="#2c2c2c"/><stop offset="0.646" stop-color="#2d2d2d"/><stop offset="0.667" stop-color="#2e2e2e"/><stop offset="0.688" stop-color="#303030"/><stop offset="0.708" stop-color="#313131"/><stop offset="0.729" stop-color="#333333"/><stop offset="0.750" stop-color="#343434"/><stop offset="0.771" stop-color="#353535"/><stop offset="0.792" stop-color="#363636"/><stop offset="0.812" stop-color="#383838"/><stop offset="0.833" stop-color="#393939"/><stop offset="0.854" stop-color="#3a3a3a"/><stop offset="0.875" stop-color="#3b3b3b"/><stop offset="0.896" stop-color="#3c3c3c"/><stop offset="0.917" stop-color="#3d3d3d"/><stop offset="0.938" stop-color="#3e3e3e"/><stop offset="0.958" stop-color="#3e3e3e"/><stop offset="0.979" stop-color="#3e3e3e"/><stop offset="1.000" stop-color="#3c3c3c"/></linearGradient></defs>
<path d="M650.2,545.0 L650.4,546.0 L650.8,547.1 L651.2,548.1 L651.9,549.1 L652.6,550.0 L653.5,550.9 L654.5,551.8 L655.6,552.7 L656.9,553.5 L658.2,554.2 L659.7,554.9 L661.3,555.6 L662.9,556.2 L664.7,556.7 L666.6,557.3 L668.5,557.7 L670.6,558.1 L672.7,558.4 L674.9,558.7 L677.2,559.0 L679.5,559.1 L681.8,559.2 L684.3,559.3 L686.7,559.3 L689.2,559.2 L691.7,559.1 L694.3,558.9 L696.8,558.6 L699.4,558.3 L701.9,557.9 L704.5,557.5 L707.0,557.0 L709.5,556.5 L712.0,555.9 L714.4,555.3 L716.8,554.6 L719.2,553.9 L721.5,553.1 L723.7,552.3 L725.9,551.4 L728.0,550.5 L730.0,549.6 L731.9,548.6 L733.7,547.6 L735.5,546.6 L737.1,545.5 L738.6,544.5 L740.1,543.4 L741.4,542.3 L742.6,541.1 L743.7,540.0 L744.6,538.9 L745.4,537.7 L746.1,536.6 L746.7,535.4 L747.1,534.3 L747.5,533.2 L747.6,532.0 L747.7,530.9 L747.6,529.9 L697.4,199.9 L697.5,201.0 L697.5,202.1 L697.3,203.3 L697.0,204.4 L696.6,205.5 L696.0,206.7 L695.3,207.8 L694.5,209.0 L693.5,210.1 L692.4,211.2 L691.2,212.3 L689.9,213.5 L688.5,214.5 L687.0,215.6 L685.3,216.7 L683.6,217.7 L681.7,218.7 L679.8,219.7 L677.8,220.6 L675.7,221.5 L673.5,222.4 L671.3,223.2 L669.0,224.0 L666.7,224.7 L664.3,225.4 L661.8,226.0 L659.3,226.6 L656.8,227.1 L654.3,227.6 L651.8,228.0 L649.2,228.4 L646.7,228.7 L644.1,229.0 L641.6,229.1 L639.1,229.3 L636.6,229.4 L634.1,229.4 L631.7,229.3 L629.3,229.2 L627.0,229.0 L624.7,228.8 L622.6,228.5 L620.4,228.2 L618.4,227.8 L616.4,227.3 L614.6,226.8 L612.8,226.3 L611.1,225.7 L609.5,225.0 L608.1,224.3 L606.7,223.5 L605.5,222.7 L604.3,221.9 L603.3,221.0 L602.5,220.1 L601.7,219.1 L601.1,218.2 L600.6,217.2 L600.2,216.1 L600.0,215.0 Z" fill="url(#cg1)"/>
<path d="M650.2,545.0 L650.4,546.0 L650.8,547.1 L651.2,548.1 L651.9,549.1 L652.6,550.0 L653.5,550.9 L654.5,551.8 L655.6,552.7 L656.9,553.5 L658.2,554.2 L659.7,554.9 L661.3,555.6 L662.9,556.2 L664.7,556.7 L666.6,557.3 L668.5,557.7 L670.6,558.1 L672.7,558.4 L674.9,558.7 L677.2,559.0 L679.5,559.1 L681.8,559.2 L684.3,559.3 L686.7,559.3 L689.2,559.2 L691.7,559.1 L694.3,558.9 L696.8,558.6 L699.4,558.3 L701.9,557.9 L704.5,557.5 L707.0,557.0 L709.5,556.5 L712.0,555.9 L714.4,555.3 L716.8,554.6 L719.2,553.9 L721.5,553.1 L723.7,552.3 L725.9,551.4 L728.0,550.5 L730.0,549.6 L731.9,548.6 L733.7,547.6 L735.5,546.6 L737.1,545.5 L738.6,544.5 L740.1,543.4 L741.4,542.3 L742.6,541.1 L743.7,540.0 L744.6,538.9 L745.4,537.7 L746.1,536.6 L746.7,535.4 L747.1,534.3 L747.5,533.2 L747.6,532.0 L747.7,530.9 L747.6,529.9" stroke="#9c5f0e" stroke-width="1.35" fill="none" stroke-linejoin="round" stroke-dasharray="5 1.5"/>
<path d="M691.9,211.8 L693.3,210.4 L694.5,208.9 L695.5,207.5 L696.3,206.1 L696.9,204.7 L697.3,203.2 L697.5,201.8 L697.5,200.5 L697.3,199.1 L696.8,197.8 L696.2,196.6 L695.4,195.4 L694.3,194.2 L693.1,193.1 L691.7,192.0 L690.1,191.1 L688.3,190.2 L686.3,189.3 L684.2,188.6 L681.9,187.9 L679.5,187.3 L677.0,186.8 L674.3,186.4 L671.6,186.1 L668.7,185.8 L665.7,185.7 L662.7,185.6 L659.6,185.7 L656.5,185.8 L653.3,186.0 L650.1,186.4 L646.9,186.8 L643.8,187.3 L640.6,187.9 L637.5,188.6 L634.4,189.3 L631.4,190.1 L628.4,191.0 L625.6,192.0 L622.8,193.1 L620.1,194.2 L617.6,195.3 L615.2,196.6 L613.0,197.8 L610.9,199.1 L608.9,200.5 L607.2,201.8 L605.6,203.2 L604.2,204.6 L603.0,206.1 L602.0,207.5 L601.2,208.9 L600.5,210.3 L600.1,211.8 L599.9,213.1 L600.0,214.5 L600.2,215.9 L600.6,217.2 L601.2,218.4 L602.1,219.6 L603.1,220.8 L604.4,221.9 L605.8,223.0 L607.4,223.9 L609.2,224.8 L611.1,225.7 L613.2,226.4 L615.5,227.1 L617.9,227.7 L620.5,228.2 L623.1,228.6 L625.9,228.9 L628.8,229.2 L631.7,229.3 L634.7,229.4 L637.8,229.3 L641.0,229.2 L644.1,228.9 L647.3,228.6 L650.5,228.2 L653.7,227.7 L656.9,227.1 L660.0,226.4 L663.1,225.7 L666.1,224.9 L669.0,223.9 L671.9,223.0 L674.7,221.9 L677.3,220.8 L679.8,219.7 L682.2,218.4 L684.5,217.2 L686.6,215.9 L688.5,214.5 L690.3,213.2 L691.9,211.8 Z" fill="#6a6a6a"/>
<path d="M691.9,211.8 L693.0,210.6 L694.0,209.5 L694.9,208.4 L695.7,207.2 L696.3,206.1 L696.8,204.9 L697.2,203.8 L697.4,202.7 L697.5,201.6 L697.5,200.5 L697.3,199.4 L697.0,198.4 L696.6,197.3 L696.1,196.3 L695.4,195.4 L694.6,194.4 L693.6,193.5 L692.6,192.7 L691.4,191.8 L690.1,191.1 L688.7,190.3 L687.1,189.6 L685.5,189.0 L683.8,188.4 L681.9,187.9 L680.0,187.4 L678.0,187.0 L675.9,186.6 L673.8,186.3 L671.6,186.1 L669.3,185.9 L666.9,185.7 L664.5,185.6 L662.1,185.6 L659.6,185.7 L657.1,185.8 L654.6,185.9 L652.0,186.2 L649.5,186.4 L646.9,186.8 L644.4,187.2 L641.9,187.6 L639.3,188.1 L636.8,188.7 L634.4,189.3 L632.0,190.0 L629.6,190.7 L627.3,191.4 L625.0,192.2 L622.8,193.1 L620.7,194.0 L618.6,194.9 L616.6,195.8 L614.8,196.8 L613.0,197.8 L611.3,198.9 L609.7,199.9 L608.2,201.0 L606.9,202.1 L605.6,203.2 L604.5,204.3 L603.4,205.5 L602.6,206.6 L601.8,207.8 L601.2,208.9 L600.7,210.1 L600.3,211.2 L600.0,212.3 L599.9,213.4 L600.0,214.5 L600.1,215.6 L600.4,216.6 L600.8,217.7 L601.4,218.7 L602.1,219.6 L602.9,220.6 L603.8,221.5 L604.9,222.3 L606.1,223.2 L607.4,223.9 L608.8,224.7 L610.3,225.4 L612.0,226.0 L613.7,226.6 L615.5,227.1 L617.4,227.6 L619.4,228.0 L621.5,228.4 L623.7,228.7 L625.9,228.9 L628.2,229.1 L630.5,229.3 L632.9,229.3 L635.4,229.4 L637.8,229.3 L640.3,229.2 L642.9,229.1 L645.4,228.8 L648.0,228.5 L650.5,228.2 L653.1,227.8 L655.6,227.4 L658.1,226.9 L660.6,226.3 L663.1,225.7 L665.5,225.0 L667.9,224.3 L670.2,223.6 L672.5,222.8 L674.7,221.9 L676.8,221.0 L678.8,220.1 L680.8,219.2 L682.7,218.2 L684.5,217.2 L686.2,216.1 L687.8,215.1 L689.2,214.0 L690.6,212.9 L691.9,211.8" stroke="#9c5f0e" stroke-width="1.35" fill="none" stroke-linejoin="round" />
<path d="M605.6,203.2 L619.7,204.6" stroke="#9c5f0e" stroke-width="1.3" fill="none" stroke-linecap="round" />
<circle cx="640.6" cy="153.7" r="40.2" fill="#333"/>
<path d="M632.1,114.9 L629.0,115.6 L629.8,114.6 L632.4,114.0 Z" fill="#5e5e5e" stroke="#5e5e5e" stroke-width="0.7"/>
<path d="M658.2,189.7 L659.3,188.8 L663.1,187.1 L661.8,188.2 Z" fill="#1e1e1e" stroke="#1e1e1e" stroke-width="0.7"/>
<path d="M618.5,120.8 L615.8,122.3 L618.2,119.9 L620.5,118.7 Z" fill="#5b5b5b" stroke="#5b5b5b" stroke-width="0.7"/>
<path d="M641.6,113.8 L638.5,114.0 L637.6,113.3 L640.2,113.1 Z" fill="#5b5b5b" stroke="#5b5b5b" stroke-width="0.7"/>
<path d="M641.0,193.6 L642.3,193.6 L640.3,194.3 L638.5,194.2 Z" fill="#1e1e1e" stroke="#1e1e1e" stroke-width="0.7"/>
<path d="M621.6,188.8 L622.7,189.9 L618.6,187.9 L617.3,186.6 Z" fill="#1e1e1e" stroke="#1e1e1e" stroke-width="0.7"/>
<path d="M627.1,191.3 L628.3,192.1 L624.2,190.9 L622.7,189.9 Z" fill="#1e1e1e" stroke="#1e1e1e" stroke-width="0.7"/>
<path d="M650.2,192.5 L651.4,192.1 L653.9,192.0 L652.1,192.6 Z" fill="#1e1e1e" stroke="#1e1e1e" stroke-width="0.7"/>
<path d="M629.0,115.6 L626.0,116.5 L627.4,115.3 L629.8,114.6 Z" fill="#5f5f5f" stroke="#5f5f5f" stroke-width="0.7"/>
<path d="M672.2,178.7 L672.8,177.1 L675.7,173.2 L675.0,175.0 Z" fill="#1e1e1e" stroke="#1e1e1e" stroke-width="0.7"/>
<path d="M680.2,145.8 L679.0,143.7 L677.9,139.0 L679.1,141.1 Z" fill="#3c3c3c" stroke="#3c3c3c" stroke-width="0.7"/>
<path d="M642.3,193.6 L643.6,193.6 L642.2,194.3 L640.3,194.3 Z" fill="#1e1e1e" stroke="#1e1e1e" stroke-width="0.7"/>
<path d="M644.7,113.8 L641.6,113.8 L640.2,113.1 L642.8,113.1 Z" fill="#5a5a5a" stroke="#5a5a5a" stroke-width="0.7"/>
<path d="M656.0,116.5 L653.1,115.9 L650.3,114.4 L652.8,114.9 Z" fill="#505050" stroke="#505050" stroke-width="0.7"/>
<path d="M633.8,193.2 L635.2,193.6 L631.7,193.4 L629.9,192.8 Z" fill="#1e1e1e" stroke="#1e1e1e" stroke-width="0.7"/>
<path d="M649.0,192.9 L650.2,192.5 L652.1,192.6 L650.2,193.2 Z" fill="#1e1e1e" stroke="#1e1e1e" stroke-width="0.7"/>
<path d="M676.2,134.6 L674.4,132.8 L672.2,128.8 L673.9,130.5 Z" fill="#424242" stroke="#424242" stroke-width="0.7"/>
<path d="M680.8,157.6 L680.3,155.5 L680.6,150.6 L681.1,152.8 Z" fill="#333333" stroke="#333333" stroke-width="0.7"/>
<path d="M607.0,132.4 L605.1,134.4 L607.3,130.6 L609.0,128.7 Z" fill="#5a5a5a" stroke="#5a5a5a" stroke-width="0.7"/>
<path d="M611.2,126.9 L609.0,128.7 L611.5,125.4 L613.5,123.8 Z" fill="#595959" stroke="#595959" stroke-width="0.7"/>
<path d="M663.1,187.1 L664.2,185.9 L667.9,183.4 L666.6,184.8 Z" fill="#1e1e1e" stroke="#1e1e1e" stroke-width="0.7"/>
<path d="M643.6,193.6 L644.9,193.6 L644.2,194.2 L642.2,194.3 Z" fill="#1e1e1e" stroke="#1e1e1e" stroke-width="0.7"/>
<path d="M601.0,150.1 L600.1,152.4 L600.5,147.7 L601.3,145.4 Z" fill="#535353" stroke="#535353" stroke-width="0.7"/>
<path d="M678.0,168.9 L678.1,167.0 L679.8,162.4 L679.7,164.5 Z" fill="#282828" stroke="#282828" stroke-width="0.7"/>
<path d="M647.7,193.2 L649.0,192.9 L650.2,193.2 L648.2,193.6 Z" fill="#1e1e1e" stroke="#1e1e1e" stroke-width="0.7"/>
<path d="M601.6,162.0 L601.4,164.2 L600.4,159.5 L600.5,157.2 Z" fill="#484848" stroke="#484848" stroke-width="0.7"/>
<path d="M667.9,183.4 L668.8,182.0 L672.2,178.7 L671.1,180.4 Z" fill="#1e1e1e" stroke="#1e1e1e" stroke-width="0.7"/>
<path d="M644.9,193.6 L646.3,193.4 L646.2,194.0 L644.2,194.2 Z" fill="#1e1e1e" stroke="#1e1e1e" stroke-width="0.7"/>
<path d="M626.0,116.5 L623.1,117.5 L625.1,116.2 L627.4,115.3 Z" fill="#5f5f5f" stroke="#5f5f5f" stroke-width="0.7"/>
<path d="M646.3,193.4 L647.7,193.2 L648.2,193.6 L646.2,194.0 Z" fill="#1e1e1e" stroke="#1e1e1e" stroke-width="0.7"/>
<path d="M612.5,182.3 L613.4,183.9 L610.0,180.6 L609.0,178.9 Z" fill="#262626" stroke="#262626" stroke-width="0.7"/>
<path d="M657.0,190.5 L658.2,189.7 L661.8,188.2 L660.1,189.3 Z" fill="#1e1e1e" stroke="#1e1e1e" stroke-width="0.7"/>
<path d="M605.6,173.0 L606.0,175.1 L603.7,170.9 L603.2,168.8 Z" fill="#383838" stroke="#383838" stroke-width="0.7"/>
<path d="M647.6,114.0 L644.7,113.8 L642.8,113.1 L645.2,113.3 Z" fill="#595959" stroke="#595959" stroke-width="0.7"/>
<path d="M603.6,138.7 L602.2,140.8 L603.8,136.5 L605.1,134.4 Z" fill="#595959" stroke="#595959" stroke-width="0.7"/>
<path d="M615.8,122.3 L613.5,123.8 L616.2,121.2 L618.2,119.9 Z" fill="#5c5c5c" stroke="#5c5c5c" stroke-width="0.7"/>
<path d="M664.2,120.8 L661.8,119.6 L658.5,117.3 L660.7,118.3 Z" fill="#464646" stroke="#464646" stroke-width="0.7"/>
<path d="M635.2,193.6 L636.8,194.0 L633.7,193.9 L631.7,193.4 Z" fill="#1e1e1e" stroke="#1e1e1e" stroke-width="0.7"/>
<path d="M669.4,125.2 L667.3,123.7 L664.2,120.8 L666.2,122.1 Z" fill="#444444" stroke="#444444" stroke-width="0.7"/>
<path d="M628.3,192.1 L629.9,192.8 L626.1,191.8 L624.2,190.9 Z" fill="#1e1e1e" stroke="#1e1e1e" stroke-width="0.7"/>
<path d="M623.1,117.5 L620.5,118.7 L622.9,117.1 L625.1,116.2 Z" fill="#606060" stroke="#606060" stroke-width="0.7"/>
<path d="M617.3,186.6 L618.6,187.9 L614.9,185.4 L613.4,183.9 Z" fill="#1e1e1e" stroke="#1e1e1e" stroke-width="0.7"/>
<path d="M655.5,191.3 L657.0,190.5 L660.1,189.3 L658.2,190.4 Z" fill="#1e1e1e" stroke="#1e1e1e" stroke-width="0.7"/>
<path d="M679.1,141.1 L677.9,139.0 L676.2,134.6 L677.4,136.6 Z" fill="#414141" stroke="#414141" stroke-width="0.7"/>
<path d="M675.0,175.0 L675.7,173.2 L678.0,168.9 L677.3,171.0 Z" fill="#212121" stroke="#212121" stroke-width="0.7"/>
<path d="M658.5,117.3 L656.0,116.5 L652.8,114.9 L655.0,115.6 Z" fill="#4f4f4f" stroke="#4f4f4f" stroke-width="0.7"/>
<path d="M622.7,189.9 L624.2,190.9 L620.4,189.1 L618.6,187.9 Z" fill="#1e1e1e" stroke="#1e1e1e" stroke-width="0.7"/>
<path d="M681.1,152.8 L680.6,150.6 L680.2,145.8 L680.7,147.9 Z" fill="#393939" stroke="#393939" stroke-width="0.7"/>
<path d="M650.3,114.4 L647.6,114.0 L645.2,113.3 L647.4,113.6 Z" fill="#585858" stroke="#585858" stroke-width="0.7"/>
<path d="M661.8,188.2 L663.1,187.1 L666.6,184.8 L664.9,186.2 Z" fill="#1e1e1e" stroke="#1e1e1e" stroke-width="0.7"/>
<path d="M679.7,164.5 L679.8,162.4 L680.8,157.6 L680.7,159.8 Z" fill="#2e2e2e" stroke="#2e2e2e" stroke-width="0.7"/>
<path d="M673.9,130.5 L672.2,128.8 L669.4,125.2 L671.1,126.8 Z" fill="#454545" stroke="#454545" stroke-width="0.7"/>
<path d="M600.5,157.2 L600.4,159.5 L600.0,154.7 L600.1,152.4 Z" fill="#4d4d4d" stroke="#4d4d4d" stroke-width="0.7"/>
<path d="M601.3,145.4 L600.5,147.7 L601.4,143.0 L602.2,140.8 Z" fill="#565656" stroke="#565656" stroke-width="0.7"/>
<path d="M636.8,194.0 L638.5,194.2 L636.0,194.2 L633.7,193.9 Z" fill="#1e1e1e" stroke="#1e1e1e" stroke-width="0.7"/>
<path d="M609.0,178.9 L610.0,180.6 L607.2,176.9 L606.0,175.1 Z" fill="#2e2e2e" stroke="#2e2e2e" stroke-width="0.7"/>
<path d="M603.2,168.8 L603.7,170.9 L602.0,166.4 L601.4,164.2 Z" fill="#3f3f3f" stroke="#3f3f3f" stroke-width="0.7"/>
<path d="M671.1,180.4 L672.2,178.7 L675.0,175.0 L673.8,176.9 Z" fill="#1e1e1e" stroke="#1e1e1e" stroke-width="0.7"/>
<path d="M609.0,128.7 L607.3,130.6 L610.0,127.1 L611.5,125.4 Z" fill="#5a5a5a" stroke="#5a5a5a" stroke-width="0.7"/>
<path d="M653.9,192.0 L655.5,191.3 L658.2,190.4 L656.0,191.3 Z" fill="#1e1e1e" stroke="#1e1e1e" stroke-width="0.7"/>
<path d="M666.6,184.8 L667.9,183.4 L671.1,180.4 L669.6,182.0 Z" fill="#1e1e1e" stroke="#1e1e1e" stroke-width="0.7"/>
<path d="M620.5,118.7 L618.2,119.9 L621.0,118.1 L622.9,117.1 Z" fill="#606060" stroke="#606060" stroke-width="0.7"/>
<path d="M613.5,123.8 L611.5,125.4 L614.5,122.6 L616.2,121.2 Z" fill="#5c5c5c" stroke="#5c5c5c" stroke-width="0.7"/>
<path d="M629.9,192.8 L631.7,193.4 L628.3,192.5 L626.1,191.8 Z" fill="#1e1e1e" stroke="#1e1e1e" stroke-width="0.7"/>
<path d="M605.1,134.4 L603.8,136.5 L606.1,132.4 L607.3,130.6 Z" fill="#5a5a5a" stroke="#5a5a5a" stroke-width="0.7"/>
<path d="M635.0,113.6 L632.4,114.0 L632.9,113.8 L634.9,113.5 Z" fill="#616161" stroke="#616161" stroke-width="0.7"/>
<path d="M638.5,194.2 L640.3,194.3 L638.4,194.3 L636.0,194.2 Z" fill="#1e1e1e" stroke="#1e1e1e" stroke-width="0.7"/>
<path d="M637.6,113.3 L635.0,113.6 L634.9,113.5 L636.9,113.2 Z" fill="#616161" stroke="#616161" stroke-width="0.7"/>
<path d="M652.8,114.9 L650.3,114.4 L647.4,113.6 L649.4,114.0 Z" fill="#575757" stroke="#575757" stroke-width="0.7"/>
<path d="M632.4,114.0 L629.8,114.6 L630.9,114.3 L632.9,113.8 Z" fill="#626262" stroke="#626262" stroke-width="0.7"/>
<path d="M640.2,113.1 L637.6,113.3 L636.9,113.2 L638.9,113.1 Z" fill="#606060" stroke="#606060" stroke-width="0.7"/>
<path d="M652.1,192.6 L653.9,192.0 L656.0,191.3 L653.7,192.1 Z" fill="#1e1e1e" stroke="#1e1e1e" stroke-width="0.7"/>
<path d="M677.4,136.6 L676.2,134.6 L673.9,130.5 L675.1,132.4 Z" fill="#444444" stroke="#444444" stroke-width="0.7"/>
<path d="M613.4,183.9 L614.9,185.4 L611.7,182.3 L610.0,180.6 Z" fill="#232323" stroke="#232323" stroke-width="0.7"/>
<path d="M680.7,147.9 L680.2,145.8 L679.1,141.1 L679.7,143.2 Z" fill="#3e3e3e" stroke="#3e3e3e" stroke-width="0.7"/>
<path d="M666.2,122.1 L664.2,120.8 L660.7,118.3 L662.5,119.5 Z" fill="#464646" stroke="#464646" stroke-width="0.7"/>
<path d="M660.1,189.3 L661.8,188.2 L664.9,186.2 L662.9,187.6 Z" fill="#1e1e1e" stroke="#1e1e1e" stroke-width="0.7"/>
<path d="M677.3,171.0 L678.0,168.9 L679.7,164.5 L678.9,166.6 Z" fill="#282828" stroke="#282828" stroke-width="0.7"/>
<path d="M629.8,114.6 L627.4,115.3 L629.0,114.8 L630.9,114.3 Z" fill="#636363" stroke="#636363" stroke-width="0.7"/>
<path d="M660.7,118.3 L658.5,117.3 L655.0,115.6 L656.9,116.5 Z" fill="#4e4e4e" stroke="#4e4e4e" stroke-width="0.7"/>
<path d="M680.7,159.8 L680.8,157.6 L681.1,152.8 L681.0,155.0 Z" fill="#353535" stroke="#353535" stroke-width="0.7"/>
<path d="M640.3,194.3 L642.2,194.3 L640.9,194.3 L638.4,194.3 Z" fill="#1e1e1e" stroke="#1e1e1e" stroke-width="0.7"/>
<path d="M642.8,113.1 L640.2,113.1 L638.9,113.1 L640.8,113.1 Z" fill="#5f5f5f" stroke="#5f5f5f" stroke-width="0.7"/>
<path d="M600.1,152.4 L600.0,154.7 L600.3,149.9 L600.5,147.7 Z" fill="#515151" stroke="#515151" stroke-width="0.7"/>
<path d="M624.2,190.9 L626.1,191.8 L622.6,190.1 L620.4,189.1 Z" fill="#1e1e1e" stroke="#1e1e1e" stroke-width="0.7"/>
<path d="M650.2,193.2 L652.1,192.6 L653.7,192.1 L651.3,192.8 Z" fill="#1e1e1e" stroke="#1e1e1e" stroke-width="0.7"/>
<path d="M602.2,140.8 L601.4,143.0 L603.1,138.5 L603.8,136.5 Z" fill="#585858" stroke="#585858" stroke-width="0.7"/>
<path d="M618.2,119.9 L616.2,121.2 L619.4,119.2 L621.0,118.1 Z" fill="#606060" stroke="#606060" stroke-width="0.7"/>
<path d="M618.6,187.9 L620.4,189.1 L616.9,186.7 L614.9,185.4 Z" fill="#1e1e1e" stroke="#1e1e1e" stroke-width="0.7"/>
<path d="M601.4,164.2 L602.0,166.4 L600.9,161.7 L600.4,159.5 Z" fill="#454545" stroke="#454545" stroke-width="0.7"/>
<path d="M671.1,126.8 L669.4,125.2 L666.2,122.1 L667.7,123.6 Z" fill="#474747" stroke="#474747" stroke-width="0.7"/>
<path d="M606.0,175.1 L607.2,176.9 L604.9,172.8 L603.7,170.9 Z" fill="#353535" stroke="#353535" stroke-width="0.7"/>
<path d="M627.4,115.3 L625.1,116.2 L627.3,115.5 L629.0,114.8 Z" fill="#636363" stroke="#636363" stroke-width="0.7"/>
<path d="M642.2,194.3 L644.2,194.2 L643.5,194.2 L640.9,194.3 Z" fill="#1e1e1e" stroke="#1e1e1e" stroke-width="0.7"/>
<path d="M648.2,193.6 L650.2,193.2 L651.3,192.8 L648.7,193.4 Z" fill="#1e1e1e" stroke="#1e1e1e" stroke-width="0.7"/>
<path d="M631.7,193.4 L633.7,193.9 L630.8,193.1 L628.3,192.5 Z" fill="#1e1e1e" stroke="#1e1e1e" stroke-width="0.7"/>
<path d="M644.2,194.2 L646.2,194.0 L646.1,193.9 L643.5,194.2 Z" fill="#1e1e1e" stroke="#1e1e1e" stroke-width="0.7"/>
<path d="M645.2,113.3 L642.8,113.1 L640.8,113.1 L642.6,113.2 Z" fill="#5e5e5e" stroke="#5e5e5e" stroke-width="0.7"/>
<path d="M646.2,194.0 L648.2,193.6 L648.7,193.4 L646.1,193.9 Z" fill="#1e1e1e" stroke="#1e1e1e" stroke-width="0.7"/>
<path d="M673.8,176.9 L675.0,175.0 L677.3,171.0 L676.0,173.0 Z" fill="#212121" stroke="#212121" stroke-width="0.7"/>
<path d="M655.0,115.6 L652.8,114.9 L649.4,114.0 L651.2,114.6 Z" fill="#565656" stroke="#565656" stroke-width="0.7"/>
<path d="M664.9,186.2 L666.6,184.8 L669.6,182.0 L667.7,183.6 Z" fill="#1e1e1e" stroke="#1e1e1e" stroke-width="0.7"/>
<path d="M658.2,190.4 L660.1,189.3 L662.9,187.6 L660.6,188.8 Z" fill="#1e1e1e" stroke="#1e1e1e" stroke-width="0.7"/>
<path d="M611.5,125.4 L610.0,127.1 L613.2,124.0 L614.5,122.6 Z" fill="#5c5c5c" stroke="#5c5c5c" stroke-width="0.7"/>
<path d="M625.1,116.2 L622.9,117.1 L625.6,116.2 L627.3,115.5 Z" fill="#636363" stroke="#636363" stroke-width="0.7"/>
<path d="M669.6,182.0 L671.1,180.4 L673.8,176.9 L672.1,178.8 Z" fill="#1e1e1e" stroke="#1e1e1e" stroke-width="0.7"/>
<path d="M607.3,130.6 L606.1,132.4 L608.9,128.7 L610.0,127.1 Z" fill="#5a5a5a" stroke="#5a5a5a" stroke-width="0.7"/>
<path d="M679.7,143.2 L679.1,141.1 L677.4,136.6 L677.9,138.7 Z" fill="#434343" stroke="#434343" stroke-width="0.7"/>
<path d="M675.1,132.4 L673.9,130.5 L671.1,126.8 L672.1,128.6 Z" fill="#474747" stroke="#474747" stroke-width="0.7"/>
<path d="M647.4,113.6 L645.2,113.3 L642.6,113.2 L644.3,113.5 Z" fill="#5d5d5d" stroke="#5d5d5d" stroke-width="0.7"/>
<path d="M678.9,166.6 L679.7,164.5 L680.7,159.8 L679.9,162.0 Z" fill="#2f2f2f" stroke="#2f2f2f" stroke-width="0.7"/>
<path d="M681.0,155.0 L681.1,152.8 L680.7,147.9 L680.6,150.2 Z" fill="#3b3b3b" stroke="#3b3b3b" stroke-width="0.7"/>
<path d="M610.0,180.6 L611.7,182.3 L608.9,178.7 L607.2,176.9 Z" fill="#2a2a2a" stroke="#2a2a2a" stroke-width="0.7"/>
<path d="M600.5,147.7 L600.3,149.9 L601.3,145.1 L601.4,143.0 Z" fill="#555555" stroke="#555555" stroke-width="0.7"/>
<path d="M616.2,121.2 L614.5,122.6 L618.0,120.4 L619.4,119.2 Z" fill="#616161" stroke="#616161" stroke-width="0.7"/>
<path d="M633.7,193.9 L636.0,194.2 L633.5,193.5 L630.8,193.1 Z" fill="#1e1e1e" stroke="#1e1e1e" stroke-width="0.7"/>
<path d="M600.4,159.5 L600.9,161.7 L600.5,156.9 L600.0,154.7 Z" fill="#4a4a4a" stroke="#4a4a4a" stroke-width="0.7"/>
<path d="M662.5,119.5 L660.7,118.3 L656.9,116.5 L658.4,117.5 Z" fill="#4d4d4d" stroke="#4d4d4d" stroke-width="0.7"/>
<path d="M626.1,191.8 L628.3,192.5 L625.1,191.0 L622.6,190.1 Z" fill="#1e1e1e" stroke="#1e1e1e" stroke-width="0.7"/>
<path d="M603.8,136.5 L603.1,138.5 L605.4,134.3 L606.1,132.4 Z" fill="#595959" stroke="#595959" stroke-width="0.7"/>
<path d="M603.7,170.9 L604.9,172.8 L603.2,168.4 L602.0,166.4 Z" fill="#3c3c3c" stroke="#3c3c3c" stroke-width="0.7"/>
<path d="M622.9,117.1 L621.0,118.1 L624.2,116.9 L625.6,116.2 Z" fill="#646464" stroke="#646464" stroke-width="0.7"/>
<path d="M667.7,123.6 L666.2,122.1 L662.5,119.5 L663.8,120.8 Z" fill="#494949" stroke="#494949" stroke-width="0.7"/>
<path d="M656.0,191.3 L658.2,190.4 L660.6,188.8 L658.0,189.9 Z" fill="#1e1e1e" stroke="#1e1e1e" stroke-width="0.7"/>
<path d="M656.9,116.5 L655.0,115.6 L651.2,114.6 L652.8,115.3 Z" fill="#555555" stroke="#555555" stroke-width="0.7"/>
<path d="M614.9,185.4 L616.9,186.7 L613.8,183.7 L611.7,182.3 Z" fill="#1e1e1e" stroke="#1e1e1e" stroke-width="0.7"/>
<path d="M649.4,114.0 L647.4,113.6 L644.3,113.5 L645.9,113.8 Z" fill="#5c5c5c" stroke="#5c5c5c" stroke-width="0.7"/>
<path d="M620.4,189.1 L622.6,190.1 L619.4,187.8 L616.9,186.7 Z" fill="#1e1e1e" stroke="#1e1e1e" stroke-width="0.7"/>
<path d="M662.9,187.6 L664.9,186.2 L667.7,183.6 L665.3,185.2 Z" fill="#1e1e1e" stroke="#1e1e1e" stroke-width="0.7"/>
<path d="M676.0,173.0 L677.3,171.0 L678.9,166.6 L677.5,168.8 Z" fill="#292929" stroke="#292929" stroke-width="0.7"/>
<path d="M636.0,194.2 L638.4,194.3 L636.4,193.6 L633.5,193.5 Z" fill="#1e1e1e" stroke="#1e1e1e" stroke-width="0.7"/>
<path d="M677.9,138.7 L677.4,136.6 L675.1,132.4 L675.6,134.4 Z" fill="#464646" stroke="#464646" stroke-width="0.7"/>
<path d="M621.0,118.1 L619.4,119.2 L622.9,117.8 L624.2,116.9 Z" fill="#646464" stroke="#646464" stroke-width="0.7"/>
<path d="M672.1,128.6 L671.1,126.8 L667.7,123.6 L668.6,125.2 Z" fill="#4a4a4a" stroke="#4a4a4a" stroke-width="0.7"/>
<path d="M634.9,113.5 L632.9,113.8 L633.5,114.3 L634.8,114.0 Z" fill="#646464" stroke="#646464" stroke-width="0.7"/>
<path d="M653.7,192.1 L656.0,191.3 L658.0,189.9 L655.1,190.9 Z" fill="#1e1e1e" stroke="#1e1e1e" stroke-width="0.7"/>
<path d="M636.9,113.2 L634.9,113.5 L634.8,114.0 L636.2,113.9 Z" fill="#646464" stroke="#646464" stroke-width="0.7"/>
<path d="M610.0,127.1 L608.9,128.7 L612.3,125.5 L613.2,124.0 Z" fill="#5b5b5b" stroke="#5b5b5b" stroke-width="0.7"/>
<path d="M680.6,150.2 L680.7,147.9 L679.7,143.2 L679.5,145.5 Z" fill="#404040" stroke="#404040" stroke-width="0.7"/>
<path d="M632.9,113.8 L630.9,114.3 L632.1,114.6 L633.5,114.3 Z" fill="#656565" stroke="#656565" stroke-width="0.7"/>
<path d="M601.4,143.0 L601.3,145.1 L603.0,140.5 L603.1,138.5 Z" fill="#575757" stroke="#575757" stroke-width="0.7"/>
<path d="M679.9,162.0 L680.7,159.8 L681.0,155.0 L680.1,157.3 Z" fill="#363636" stroke="#363636" stroke-width="0.7"/>
<path d="M638.9,113.1 L636.9,113.2 L636.2,113.9 L637.5,113.8 Z" fill="#636363" stroke="#636363" stroke-width="0.7"/>
<path d="M614.5,122.6 L613.2,124.0 L616.9,121.5 L618.0,120.4 Z" fill="#606060" stroke="#606060" stroke-width="0.7"/>
<path d="M667.7,183.6 L669.6,182.0 L672.1,178.8 L669.9,180.6 Z" fill="#1e1e1e" stroke="#1e1e1e" stroke-width="0.7"/>
<path d="M672.1,178.8 L673.8,176.9 L676.0,173.0 L674.1,175.0 Z" fill="#212121" stroke="#212121" stroke-width="0.7"/>
<path d="M600.0,154.7 L600.5,156.9 L600.8,152.0 L600.3,149.9 Z" fill="#4f4f4f" stroke="#4f4f4f" stroke-width="0.7"/>
<path d="M607.2,176.9 L608.9,178.7 L606.7,174.6 L604.9,172.8 Z" fill="#313131" stroke="#313131" stroke-width="0.7"/>
<path d="M630.9,114.3 L629.0,114.8 L630.9,115.0 L632.1,114.6 Z" fill="#656565" stroke="#656565" stroke-width="0.7"/>
<path d="M651.2,114.6 L649.4,114.0 L645.9,113.8 L647.3,114.3 Z" fill="#5c5c5c" stroke="#5c5c5c" stroke-width="0.7"/>
<path d="M628.3,192.5 L630.8,193.1 L628.0,191.6 L625.1,191.0 Z" fill="#1e1e1e" stroke="#1e1e1e" stroke-width="0.7"/>
<path d="M638.4,194.3 L640.9,194.3 L639.5,193.6 L636.4,193.6 Z" fill="#1e1e1e" stroke="#1e1e1e" stroke-width="0.7"/>
<path d="M640.8,113.1 L638.9,113.1 L637.5,113.8 L638.8,113.8 Z" fill="#636363" stroke="#636363" stroke-width="0.7"/>
<path d="M602.0,166.4 L603.2,168.4 L602.1,163.7 L600.9,161.7 Z" fill="#424242" stroke="#424242" stroke-width="0.7"/>
<path d="M606.1,132.4 L605.4,134.3 L608.3,130.4 L608.9,128.7 Z" fill="#595959" stroke="#595959" stroke-width="0.7"/>
<path d="M651.3,192.8 L653.7,192.1 L655.1,190.9 L652.2,191.8 Z" fill="#1e1e1e" stroke="#1e1e1e" stroke-width="0.7"/>
<path d="M629.0,114.8 L627.3,115.5 L629.7,115.4 L630.9,115.0 Z" fill="#666666" stroke="#666666" stroke-width="0.7"/>
<path d="M658.4,117.5 L656.9,116.5 L652.8,115.3 L654.0,116.2 Z" fill="#545454" stroke="#545454" stroke-width="0.7"/>
<path d="M663.8,120.8 L662.5,119.5 L658.4,117.5 L659.5,118.7 Z" fill="#4c4c4c" stroke="#4c4c4c" stroke-width="0.7"/>
<path d="M642.6,113.2 L640.8,113.1 L638.8,113.8 L640.1,113.9 Z" fill="#626262" stroke="#626262" stroke-width="0.7"/>
<path d="M640.9,194.3 L643.5,194.2 L642.7,193.5 L639.5,193.6 Z" fill="#1e1e1e" stroke="#1e1e1e" stroke-width="0.7"/>
<path d="M660.6,188.8 L662.9,187.6 L665.3,185.2 L662.6,186.6 Z" fill="#1e1e1e" stroke="#1e1e1e" stroke-width="0.7"/>
<path d="M619.4,119.2 L618.0,120.4 L621.8,118.7 L622.9,117.8 Z" fill="#646464" stroke="#646464" stroke-width="0.7"/>
<path d="M648.7,193.4 L651.3,192.8 L652.2,191.8 L649.0,192.5 Z" fill="#1e1e1e" stroke="#1e1e1e" stroke-width="0.7"/>
<path d="M627.3,115.5 L625.6,116.2 L628.6,115.9 L629.7,115.4 Z" fill="#666666" stroke="#666666" stroke-width="0.7"/>
<path d="M643.5,194.2 L646.1,193.9 L645.9,193.1 L642.7,193.5 Z" fill="#1e1e1e" stroke="#1e1e1e" stroke-width="0.7"/>
<path d="M646.1,193.9 L648.7,193.4 L649.0,192.5 L645.9,193.1 Z" fill="#1e1e1e" stroke="#1e1e1e" stroke-width="0.7"/>
<path d="M675.6,134.4 L675.1,132.4 L672.1,128.6 L672.6,130.5 Z" fill="#494949" stroke="#494949" stroke-width="0.7"/>
<path d="M611.7,182.3 L613.8,183.7 L611.2,180.2 L608.9,178.7 Z" fill="#252525" stroke="#252525" stroke-width="0.7"/>
<path d="M622.6,190.1 L625.1,191.0 L622.2,188.8 L619.4,187.8 Z" fill="#1e1e1e" stroke="#1e1e1e" stroke-width="0.7"/>
<path d="M644.3,113.5 L642.6,113.2 L640.1,113.9 L641.2,114.0 Z" fill="#616161" stroke="#616161" stroke-width="0.7"/>
<path d="M668.6,125.2 L667.7,123.6 L663.8,120.8 L664.7,122.3 Z" fill="#4b4b4b" stroke="#4b4b4b" stroke-width="0.7"/>
<path d="M677.5,168.8 L678.9,166.6 L679.9,162.0 L678.4,164.3 Z" fill="#2f2f2f" stroke="#2f2f2f" stroke-width="0.7"/>
<path d="M652.8,115.3 L651.2,114.6 L647.3,114.3 L648.5,114.8 Z" fill="#5b5b5b" stroke="#5b5b5b" stroke-width="0.7"/>
<path d="M679.5,145.5 L679.7,143.2 L677.9,138.7 L677.8,140.9 Z" fill="#444444" stroke="#444444" stroke-width="0.7"/>
<path d="M603.1,138.5 L603.0,140.5 L605.3,136.1 L605.4,134.3 Z" fill="#585858" stroke="#585858" stroke-width="0.7"/>
<path d="M616.9,186.7 L619.4,187.8 L616.5,185.0 L613.8,183.7 Z" fill="#1e1e1e" stroke="#1e1e1e" stroke-width="0.7"/>
<path d="M600.3,149.9 L600.8,152.0 L601.8,147.1 L601.3,145.1 Z" fill="#525252" stroke="#525252" stroke-width="0.7"/>
<path d="M680.1,157.3 L681.0,155.0 L680.6,150.2 L679.8,152.6 Z" fill="#3b3b3b" stroke="#3b3b3b" stroke-width="0.7"/>
<path d="M630.8,193.1 L633.5,193.5 L631.2,192.0 L628.0,191.6 Z" fill="#1e1e1e" stroke="#1e1e1e" stroke-width="0.7"/>
<path d="M625.6,116.2 L624.2,116.9 L627.6,116.4 L628.6,115.9 Z" fill="#666666" stroke="#666666" stroke-width="0.7"/>
<path d="M613.2,124.0 L612.3,125.5 L616.2,122.7 L616.9,121.5 Z" fill="#606060" stroke="#606060" stroke-width="0.7"/>
<path d="M600.9,161.7 L602.1,163.7 L601.7,158.9 L600.5,156.9 Z" fill="#474747" stroke="#474747" stroke-width="0.7"/>
<path d="M604.9,172.8 L606.7,174.6 L605.0,170.3 L603.2,168.4 Z" fill="#373737" stroke="#373737" stroke-width="0.7"/>
<path d="M645.9,113.8 L644.3,113.5 L641.2,114.0 L642.3,114.3 Z" fill="#616161" stroke="#616161" stroke-width="0.7"/>
<path d="M608.9,128.7 L608.3,130.4 L611.8,126.9 L612.3,125.5 Z" fill="#5b5b5b" stroke="#5b5b5b" stroke-width="0.7"/>
<path d="M665.3,185.2 L667.7,183.6 L669.9,180.6 L667.3,182.3 Z" fill="#1e1e1e" stroke="#1e1e1e" stroke-width="0.7"/>
<path d="M658.0,189.9 L660.6,188.8 L662.6,186.6 L659.6,188.0 Z" fill="#1e1e1e" stroke="#1e1e1e" stroke-width="0.7"/>
<path d="M618.0,120.4 L616.9,121.5 L621.0,119.5 L621.8,118.7 Z" fill="#646464" stroke="#646464" stroke-width="0.7"/>
<path d="M674.1,175.0 L676.0,173.0 L677.5,168.8 L675.5,171.0 Z" fill="#282828" stroke="#282828" stroke-width="0.7"/>
<path d="M659.5,118.7 L658.4,117.5 L654.0,116.2 L655.0,117.1 Z" fill="#535353" stroke="#535353" stroke-width="0.7"/>
<path d="M624.2,116.9 L622.9,117.8 L626.7,117.0 L627.6,116.4 Z" fill="#666666" stroke="#666666" stroke-width="0.7"/>
<path d="M669.9,180.6 L672.1,178.8 L674.1,175.0 L671.7,177.0 Z" fill="#202020" stroke="#202020" stroke-width="0.7"/>
<path d="M672.6,130.5 L672.1,128.6 L668.6,125.2 L669.1,126.9 Z" fill="#4b4b4b" stroke="#4b4b4b" stroke-width="0.7"/>
<path d="M654.0,116.2 L652.8,115.3 L648.5,114.8 L649.4,115.5 Z" fill="#5a5a5a" stroke="#5a5a5a" stroke-width="0.7"/>
<path d="M647.3,114.3 L645.9,113.8 L642.3,114.3 L643.2,114.6 Z" fill="#606060" stroke="#606060" stroke-width="0.7"/>
<path d="M633.5,193.5 L636.4,193.6 L634.6,192.3 L631.2,192.0 Z" fill="#1e1e1e" stroke="#1e1e1e" stroke-width="0.7"/>
<path d="M677.8,140.9 L677.9,138.7 L675.6,134.4 L675.4,136.5 Z" fill="#484848" stroke="#484848" stroke-width="0.7"/>
<path d="M664.7,122.3 L663.8,120.8 L659.5,118.7 L660.3,119.9 Z" fill="#4b4b4b" stroke="#4b4b4b" stroke-width="0.7"/>
<path d="M605.4,134.3 L605.3,136.1 L608.2,132.0 L608.3,130.4 Z" fill="#585858" stroke="#585858" stroke-width="0.7"/>
<path d="M601.3,145.1 L601.8,147.1 L603.4,142.4 L603.0,140.5 Z" fill="#555555" stroke="#555555" stroke-width="0.7"/>
<path d="M625.1,191.0 L628.0,191.6 L625.5,189.5 L622.2,188.8 Z" fill="#1e1e1e" stroke="#1e1e1e" stroke-width="0.7"/>
<path d="M608.9,178.7 L611.2,180.2 L609.1,176.3 L606.7,174.6 Z" fill="#2c2c2c" stroke="#2c2c2c" stroke-width="0.7"/>
<path d="M678.4,164.3 L679.9,162.0 L680.1,157.3 L678.6,159.7 Z" fill="#363636" stroke="#363636" stroke-width="0.7"/>
<path d="M655.1,190.9 L658.0,189.9 L659.6,188.0 L656.3,189.1 Z" fill="#1e1e1e" stroke="#1e1e1e" stroke-width="0.7"/>
<path d="M679.8,152.6 L680.6,150.2 L679.5,145.5 L678.7,147.8 Z" fill="#414141" stroke="#414141" stroke-width="0.7"/>
<path d="M622.9,117.8 L621.8,118.7 L626.0,117.6 L626.7,117.0 Z" fill="#666666" stroke="#666666" stroke-width="0.7"/>
<path d="M600.5,156.9 L601.7,158.9 L602.0,153.9 L600.8,152.0 Z" fill="#4b4b4b" stroke="#4b4b4b" stroke-width="0.7"/>
<path d="M634.8,114.0 L633.5,114.3 L634.2,115.4 L634.9,115.3 Z" fill="#666666" stroke="#666666" stroke-width="0.7"/>
<path d="M636.2,113.9 L634.8,114.0 L634.9,115.3 L635.5,115.2 Z" fill="#666666" stroke="#666666" stroke-width="0.7"/>
<path d="M633.5,114.3 L632.1,114.6 L633.5,115.6 L634.2,115.4 Z" fill="#666666" stroke="#666666" stroke-width="0.7"/>
<path d="M616.9,121.5 L616.2,122.7 L620.4,120.4 L621.0,119.5 Z" fill="#646464" stroke="#646464" stroke-width="0.7"/>
<path d="M612.3,125.5 L611.8,126.9 L615.7,123.9 L616.2,122.7 Z" fill="#606060" stroke="#606060" stroke-width="0.7"/>
<path d="M637.5,113.8 L636.2,113.9 L635.5,115.2 L636.2,115.2 Z" fill="#656565" stroke="#656565" stroke-width="0.7"/>
<path d="M603.2,168.4 L605.0,170.3 L604.0,165.6 L602.1,163.7 Z" fill="#3d3d3d" stroke="#3d3d3d" stroke-width="0.7"/>
<path d="M648.5,114.8 L647.3,114.3 L643.2,114.6 L644.0,115.0 Z" fill="#5f5f5f" stroke="#5f5f5f" stroke-width="0.7"/>
<path d="M632.1,114.6 L630.9,115.0 L632.9,115.8 L633.5,115.6 Z" fill="#666666" stroke="#666666" stroke-width="0.7"/>
<path d="M636.4,193.6 L639.5,193.6 L638.1,192.3 L634.6,192.3 Z" fill="#1e1e1e" stroke="#1e1e1e" stroke-width="0.7"/>
<path d="M638.8,113.8 L637.5,113.8 L636.2,115.2 L636.9,115.2 Z" fill="#656565" stroke="#656565" stroke-width="0.7"/>
<path d="M662.6,186.6 L665.3,185.2 L667.3,182.3 L664.3,183.9 Z" fill="#1e1e1e" stroke="#1e1e1e" stroke-width="0.7"/>
<path d="M613.8,183.7 L616.5,185.0 L614.1,181.5 L611.2,180.2 Z" fill="#202020" stroke="#202020" stroke-width="0.7"/>
<path d="M619.4,187.8 L622.2,188.8 L619.6,186.0 L616.5,185.0 Z" fill="#1e1e1e" stroke="#1e1e1e" stroke-width="0.7"/>
<path d="M669.1,126.9 L668.6,125.2 L664.7,122.3 L665.0,123.8 Z" fill="#4c4c4c" stroke="#4c4c4c" stroke-width="0.7"/>
<path d="M630.9,115.0 L629.7,115.4 L632.3,116.0 L632.9,115.8 Z" fill="#676767" stroke="#676767" stroke-width="0.7"/>
<path d="M652.2,191.8 L655.1,190.9 L656.3,189.1 L652.8,190.1 Z" fill="#1e1e1e" stroke="#1e1e1e" stroke-width="0.7"/>
<path d="M640.1,113.9 L638.8,113.8 L636.9,115.2 L637.5,115.2 Z" fill="#646464" stroke="#646464" stroke-width="0.7"/>
<path d="M655.0,117.1 L654.0,116.2 L649.4,115.5 L650.1,116.2 Z" fill="#595959" stroke="#595959" stroke-width="0.7"/>
<path d="M675.4,136.5 L675.6,134.4 L672.6,130.5 L672.4,132.4 Z" fill="#4b4b4b" stroke="#4b4b4b" stroke-width="0.7"/>
<path d="M608.3,130.4 L608.2,132.0 L611.7,128.3 L611.8,126.9 Z" fill="#5a5a5a" stroke="#5a5a5a" stroke-width="0.7"/>
<path d="M621.8,118.7 L621.0,119.5 L625.4,118.2 L626.0,117.6 Z" fill="#666666" stroke="#666666" stroke-width="0.7"/>
<path d="M629.7,115.4 L628.6,115.9 L631.7,116.2 L632.3,116.0 Z" fill="#676767" stroke="#676767" stroke-width="0.7"/>
<path d="M603.0,140.5 L603.4,142.4 L605.7,137.8 L605.3,136.1 Z" fill="#565656" stroke="#565656" stroke-width="0.7"/>
<path d="M660.3,119.9 L659.5,118.7 L655.0,117.1 L655.6,118.1 Z" fill="#525252" stroke="#525252" stroke-width="0.7"/>
<path d="M675.5,171.0 L677.5,168.8 L678.4,164.3 L676.3,166.6 Z" fill="#2f2f2f" stroke="#2f2f2f" stroke-width="0.7"/>
<path d="M639.5,193.6 L642.7,193.5 L641.8,192.0 L638.1,192.3 Z" fill="#1e1e1e" stroke="#1e1e1e" stroke-width="0.7"/>
<path d="M641.2,114.0 L640.1,113.9 L637.5,115.2 L638.1,115.3 Z" fill="#646464" stroke="#646464" stroke-width="0.7"/>
<path d="M649.0,192.5 L652.2,191.8 L652.8,190.1 L649.2,191.0 Z" fill="#1e1e1e" stroke="#1e1e1e" stroke-width="0.7"/>
<path d="M649.4,115.5 L648.5,114.8 L644.0,115.0 L644.7,115.4 Z" fill="#5f5f5f" stroke="#5f5f5f" stroke-width="0.7"/>
<path d="M628.6,115.9 L627.6,116.4 L631.2,116.5 L631.7,116.2 Z" fill="#676767" stroke="#676767" stroke-width="0.7"/>
<path d="M667.3,182.3 L669.9,180.6 L671.7,177.0 L668.8,178.9 Z" fill="#1e1e1e" stroke="#1e1e1e" stroke-width="0.7"/>
<path d="M678.7,147.8 L679.5,145.5 L677.8,140.9 L677.0,143.2 Z" fill="#454545" stroke="#454545" stroke-width="0.7"/>
<path d="M642.7,193.5 L645.9,193.1 L645.5,191.6 L641.8,192.0 Z" fill="#1e1e1e" stroke="#1e1e1e" stroke-width="0.7"/>
<path d="M628.0,191.6 L631.2,192.0 L629.0,190.0 L625.5,189.5 Z" fill="#1e1e1e" stroke="#1e1e1e" stroke-width="0.7"/>
<path d="M600.8,152.0 L602.0,153.9 L602.9,149.0 L601.8,147.1 Z" fill="#4f4f4f" stroke="#4f4f4f" stroke-width="0.7"/>
<path d="M645.9,193.1 L649.0,192.5 L649.2,191.0 L645.5,191.6 Z" fill="#1e1e1e" stroke="#1e1e1e" stroke-width="0.7"/>
<path d="M642.3,114.3 L641.2,114.0 L638.1,115.3 L638.6,115.4 Z" fill="#646464" stroke="#646464" stroke-width="0.7"/>
<path d="M671.7,177.0 L674.1,175.0 L675.5,171.0 L673.0,173.1 Z" fill="#272727" stroke="#272727" stroke-width="0.7"/>
<path d="M678.6,159.7 L680.1,157.3 L679.8,152.6 L678.2,154.9 Z" fill="#3c3c3c" stroke="#3c3c3c" stroke-width="0.7"/>
<path d="M616.2,122.7 L615.7,123.9 L620.1,121.3 L620.4,120.4 Z" fill="#646464" stroke="#646464" stroke-width="0.7"/>
<path d="M606.7,174.6 L609.1,176.3 L607.5,171.9 L605.0,170.3 Z" fill="#333333" stroke="#333333" stroke-width="0.7"/>
<path d="M627.6,116.4 L626.7,117.0 L630.8,116.8 L631.2,116.5 Z" fill="#676767" stroke="#676767" stroke-width="0.7"/>
<path d="M665.0,123.8 L664.7,122.3 L660.3,119.9 L660.6,121.2 Z" fill="#4d4d4d" stroke="#4d4d4d" stroke-width="0.7"/>
<path d="M602.1,163.7 L604.0,165.6 L603.6,160.7 L601.7,158.9 Z" fill="#434343" stroke="#434343" stroke-width="0.7"/>
<path d="M621.0,119.5 L620.4,120.4 L625.1,118.8 L625.4,118.2 Z" fill="#666666" stroke="#666666" stroke-width="0.7"/>
<path d="M659.6,188.0 L662.6,186.6 L664.3,183.9 L660.9,185.4 Z" fill="#1e1e1e" stroke="#1e1e1e" stroke-width="0.7"/>
<path d="M643.2,114.6 L642.3,114.3 L638.6,115.4 L639.1,115.6 Z" fill="#636363" stroke="#636363" stroke-width="0.7"/>
<path d="M672.4,132.4 L672.6,130.5 L669.1,126.9 L668.9,128.7 Z" fill="#4d4d4d" stroke="#4d4d4d" stroke-width="0.7"/>
<path d="M611.8,126.9 L611.7,128.3 L615.7,125.0 L615.7,123.9 Z" fill="#5f5f5f" stroke="#5f5f5f" stroke-width="0.7"/>
<path d="M605.3,136.1 L605.7,137.8 L608.6,133.5 L608.2,132.0 Z" fill="#565656" stroke="#565656" stroke-width="0.7"/>
<path d="M655.6,118.1 L655.0,117.1 L650.1,116.2 L650.6,117.0 Z" fill="#595959" stroke="#595959" stroke-width="0.7"/>
<path d="M626.7,117.0 L626.0,117.6 L630.4,117.1 L630.8,116.8 Z" fill="#676767" stroke="#676767" stroke-width="0.7"/>
<path d="M650.1,116.2 L649.4,115.5 L644.7,115.4 L645.1,115.9 Z" fill="#5e5e5e" stroke="#5e5e5e" stroke-width="0.7"/>
<path d="M644.0,115.0 L643.2,114.6 L639.1,115.6 L639.5,115.8 Z" fill="#636363" stroke="#636363" stroke-width="0.7"/>
<path d="M622.2,188.8 L625.5,189.5 L623.2,186.8 L619.6,186.0 Z" fill="#1e1e1e" stroke="#1e1e1e" stroke-width="0.7"/>
<path d="M611.2,180.2 L614.1,181.5 L612.1,177.6 L609.1,176.3 Z" fill="#272727" stroke="#272727" stroke-width="0.7"/>
<path d="M601.8,147.1 L602.9,149.0 L604.5,144.1 L603.4,142.4 Z" fill="#515151" stroke="#515151" stroke-width="0.7"/>
<path d="M677.0,143.2 L677.8,140.9 L675.4,136.5 L674.6,138.7 Z" fill="#494949" stroke="#494949" stroke-width="0.7"/>
<path d="M631.2,192.0 L634.6,192.3 L632.8,190.2 L629.0,190.0 Z" fill="#1e1e1e" stroke="#1e1e1e" stroke-width="0.7"/>
<path d="M660.6,121.2 L660.3,119.9 L655.6,118.1 L655.8,119.2 Z" fill="#515151" stroke="#515151" stroke-width="0.7"/>
<path d="M626.0,117.6 L625.4,118.2 L630.1,117.4 L630.4,117.1 Z" fill="#676767" stroke="#676767" stroke-width="0.7"/>
<path d="M676.3,166.6 L678.4,164.3 L678.6,159.7 L676.5,162.0 Z" fill="#353535" stroke="#353535" stroke-width="0.7"/>
<path d="M620.4,120.4 L620.1,121.3 L624.8,119.4 L625.1,118.8 Z" fill="#666666" stroke="#666666" stroke-width="0.7"/>
<path d="M616.5,185.0 L619.6,186.0 L617.4,182.6 L614.1,181.5 Z" fill="#1e1e1e" stroke="#1e1e1e" stroke-width="0.7"/>
<path d="M644.7,115.4 L644.0,115.0 L639.5,115.8 L639.8,116.0 Z" fill="#636363" stroke="#636363" stroke-width="0.7"/>
<path d="M668.9,128.7 L669.1,126.9 L665.0,123.8 L664.9,125.4 Z" fill="#4e4e4e" stroke="#4e4e4e" stroke-width="0.7"/>
<path d="M608.2,132.0 L608.6,133.5 L612.0,129.6 L611.7,128.3 Z" fill="#5a5a5a" stroke="#5a5a5a" stroke-width="0.7"/>
<path d="M678.2,154.9 L679.8,152.6 L678.7,147.8 L677.2,150.1 Z" fill="#414141" stroke="#414141" stroke-width="0.7"/>
<path d="M615.7,123.9 L615.7,125.0 L620.1,122.2 L620.1,121.3 Z" fill="#636363" stroke="#636363" stroke-width="0.7"/>
<path d="M656.3,189.1 L659.6,188.0 L660.9,185.4 L657.2,186.7 Z" fill="#1e1e1e" stroke="#1e1e1e" stroke-width="0.7"/>
<path d="M664.3,183.9 L667.3,182.3 L668.8,178.9 L665.5,180.7 Z" fill="#1e1e1e" stroke="#1e1e1e" stroke-width="0.7"/>
<path d="M601.7,158.9 L603.6,160.7 L603.8,155.8 L602.0,153.9 Z" fill="#474747" stroke="#474747" stroke-width="0.7"/>
<path d="M650.6,117.0 L650.1,116.2 L645.1,115.9 L645.5,116.4 Z" fill="#5e5e5e" stroke="#5e5e5e" stroke-width="0.7"/>
<path d="M625.4,118.2 L625.1,118.8 L629.9,117.7 L630.1,117.4 Z" fill="#676767" stroke="#676767" stroke-width="0.7"/>
<path d="M605.0,170.3 L607.5,171.9 L606.5,167.3 L604.0,165.6 Z" fill="#383838" stroke="#383838" stroke-width="0.7"/>
<path d="M645.1,115.9 L644.7,115.4 L639.8,116.0 L640.1,116.2 Z" fill="#626262" stroke="#626262" stroke-width="0.7"/>
<path d="M673.0,173.1 L675.5,171.0 L676.3,166.6 L673.7,168.8 Z" fill="#2e2e2e" stroke="#2e2e2e" stroke-width="0.7"/>
<path d="M634.9,115.3 L634.2,115.4 L635.0,117.2 L635.0,117.2 Z" fill="#666666" stroke="#666666" stroke-width="0.7"/>
<path d="M635.5,115.2 L634.9,115.3 L635.0,117.2 L635.0,117.2 Z" fill="#666666" stroke="#666666" stroke-width="0.7"/>
<path d="M634.2,115.4 L633.5,115.6 L635.0,117.2 L635.0,117.2 Z" fill="#666666" stroke="#666666" stroke-width="0.7"/>
<path d="M655.8,119.2 L655.6,118.1 L650.6,117.0 L650.8,117.8 Z" fill="#585858" stroke="#585858" stroke-width="0.7"/>
<path d="M603.4,142.4 L604.5,144.1 L606.7,139.4 L605.7,137.8 Z" fill="#535353" stroke="#535353" stroke-width="0.7"/>
<path d="M636.2,115.2 L635.5,115.2 L635.0,117.2 L635.0,117.2 Z" fill="#666666" stroke="#666666" stroke-width="0.7"/>
<path d="M634.6,192.3 L638.1,192.3 L636.8,190.2 L632.8,190.2 Z" fill="#1e1e1e" stroke="#1e1e1e" stroke-width="0.7"/>
<path d="M633.5,115.6 L632.9,115.8 L635.0,117.2 L635.0,117.2 Z" fill="#666666" stroke="#666666" stroke-width="0.7"/>
<path d="M636.9,115.2 L636.2,115.2 L635.0,117.2 L635.0,117.2 Z" fill="#666666" stroke="#666666" stroke-width="0.7"/>
<path d="M674.6,138.7 L675.4,136.5 L672.4,132.4 L671.7,134.5 Z" fill="#4b4b4b" stroke="#4b4b4b" stroke-width="0.7"/>
<path d="M668.8,178.9 L671.7,177.0 L673.0,173.1 L669.9,175.1 Z" fill="#252525" stroke="#252525" stroke-width="0.7"/>
<path d="M632.9,115.8 L632.3,116.0 L635.0,117.2 L635.0,117.2 Z" fill="#666666" stroke="#666666" stroke-width="0.7"/>
<path d="M637.5,115.2 L636.9,115.2 L635.0,117.2 L635.0,117.2 Z" fill="#666666" stroke="#666666" stroke-width="0.7"/>
<path d="M632.3,116.0 L631.7,116.2 L635.0,117.2 L635.0,117.2 Z" fill="#666666" stroke="#666666" stroke-width="0.7"/>
<path d="M611.7,128.3 L612.0,129.6 L615.9,126.1 L615.7,125.0 Z" fill="#5f5f5f" stroke="#5f5f5f" stroke-width="0.7"/>
<path d="M664.9,125.4 L665.0,123.8 L660.6,121.2 L660.5,122.6 Z" fill="#4e4e4e" stroke="#4e4e4e" stroke-width="0.7"/>
<path d="M638.1,115.3 L637.5,115.2 L635.0,117.2 L635.0,117.2 Z" fill="#656565" stroke="#656565" stroke-width="0.7"/>
<path d="M620.1,121.3 L620.1,122.2 L624.8,120.0 L624.8,119.4 Z" fill="#666666" stroke="#666666" stroke-width="0.7"/>
<path d="M625.1,118.8 L624.8,119.4 L629.8,118.0 L629.9,117.7 Z" fill="#676767" stroke="#676767" stroke-width="0.7"/>
<path d="M652.8,190.1 L656.3,189.1 L657.2,186.7 L653.3,187.8 Z" fill="#1e1e1e" stroke="#1e1e1e" stroke-width="0.7"/>
<path d="M631.7,116.2 L631.2,116.5 L635.0,117.2 L635.0,117.2 Z" fill="#666666" stroke="#666666" stroke-width="0.7"/>
<path d="M638.6,115.4 L638.1,115.3 L635.0,117.2 L635.0,117.2 Z" fill="#656565" stroke="#656565" stroke-width="0.7"/>
<path d="M631.2,116.5 L630.8,116.8 L635.0,117.2 L635.0,117.2 Z" fill="#666666" stroke="#666666" stroke-width="0.7"/>
<path d="M639.1,115.6 L638.6,115.4 L635.0,117.2 L635.0,117.2 Z" fill="#656565" stroke="#656565" stroke-width="0.7"/>
<path d="M625.5,189.5 L629.0,190.0 L627.0,187.3 L623.2,186.8 Z" fill="#1e1e1e" stroke="#1e1e1e" stroke-width="0.7"/>
<path d="M645.5,116.4 L645.1,115.9 L640.1,116.2 L640.2,116.5 Z" fill="#626262" stroke="#626262" stroke-width="0.7"/>
<path d="M630.8,116.8 L630.4,117.1 L635.0,117.2 L635.0,117.2 Z" fill="#666666" stroke="#666666" stroke-width="0.7"/>
<path d="M650.8,117.8 L650.6,117.0 L645.5,116.4 L645.6,117.0 Z" fill="#5e5e5e" stroke="#5e5e5e" stroke-width="0.7"/>
<path d="M638.1,192.3 L641.8,192.0 L640.9,190.0 L636.8,190.2 Z" fill="#1e1e1e" stroke="#1e1e1e" stroke-width="0.7"/>
<path d="M639.5,115.8 L639.1,115.6 L635.0,117.2 L635.0,117.2 Z" fill="#656565" stroke="#656565" stroke-width="0.7"/>
<path d="M677.2,150.1 L678.7,147.8 L677.0,143.2 L675.5,145.4 Z" fill="#454545" stroke="#454545" stroke-width="0.7"/>
<path d="M602.0,153.9 L603.8,155.8 L604.7,150.7 L602.9,149.0 Z" fill="#4b4b4b" stroke="#4b4b4b" stroke-width="0.7"/>
<path d="M630.4,117.1 L630.1,117.4 L635.0,117.2 L635.0,117.2 Z" fill="#666666" stroke="#666666" stroke-width="0.7"/>
<path d="M609.1,176.3 L612.1,177.6 L610.6,173.3 L607.5,171.9 Z" fill="#2d2d2d" stroke="#2d2d2d" stroke-width="0.7"/>
<path d="M605.7,137.8 L606.7,139.4 L609.5,135.0 L608.6,133.5 Z" fill="#535353" stroke="#535353" stroke-width="0.7"/>
<path d="M615.7,125.0 L615.9,126.1 L620.3,123.0 L620.1,122.2 Z" fill="#636363" stroke="#636363" stroke-width="0.7"/>
<path d="M676.5,162.0 L678.6,159.7 L678.2,154.9 L676.1,157.3 Z" fill="#3b3b3b" stroke="#3b3b3b" stroke-width="0.7"/>
<path d="M649.2,191.0 L652.8,190.1 L653.3,187.8 L649.3,188.8 Z" fill="#1e1e1e" stroke="#1e1e1e" stroke-width="0.7"/>
<path d="M639.8,116.0 L639.5,115.8 L635.0,117.2 L635.0,117.2 Z" fill="#656565" stroke="#656565" stroke-width="0.7"/>
<path d="M660.5,122.6 L660.6,121.2 L655.8,119.2 L655.8,120.4 Z" fill="#515151" stroke="#515151" stroke-width="0.7"/>
<path d="M624.8,119.4 L624.8,120.0 L629.8,118.3 L629.8,118.0 Z" fill="#676767" stroke="#676767" stroke-width="0.7"/>
<path d="M630.1,117.4 L629.9,117.7 L635.0,117.2 L635.0,117.2 Z" fill="#666666" stroke="#666666" stroke-width="0.7"/>
<path d="M671.7,134.5 L672.4,132.4 L668.9,128.7 L668.3,130.6 Z" fill="#4d4d4d" stroke="#4d4d4d" stroke-width="0.7"/>
<path d="M641.8,192.0 L645.5,191.6 L645.1,189.5 L640.9,190.0 Z" fill="#1e1e1e" stroke="#1e1e1e" stroke-width="0.7"/>
<path d="M640.1,116.2 L639.8,116.0 L635.0,117.2 L635.0,117.2 Z" fill="#656565" stroke="#656565" stroke-width="0.7"/>
<path d="M660.9,185.4 L664.3,183.9 L665.5,180.7 L661.8,182.3 Z" fill="#1e1e1e" stroke="#1e1e1e" stroke-width="0.7"/>
<path d="M645.5,191.6 L649.2,191.0 L649.3,188.8 L645.1,189.5 Z" fill="#1e1e1e" stroke="#1e1e1e" stroke-width="0.7"/>
<path d="M645.6,117.0 L645.5,116.4 L640.2,116.5 L640.3,116.8 Z" fill="#626262" stroke="#626262" stroke-width="0.7"/>
<path d="M604.0,165.6 L606.5,167.3 L606.1,162.4 L603.6,160.7 Z" fill="#3e3e3e" stroke="#3e3e3e" stroke-width="0.7"/>
<path d="M629.9,117.7 L629.8,118.0 L635.0,117.2 L635.0,117.2 Z" fill="#666666" stroke="#666666" stroke-width="0.7"/>
<path d="M640.2,116.5 L640.1,116.2 L635.0,117.2 L635.0,117.2 Z" fill="#656565" stroke="#656565" stroke-width="0.7"/>
<path d="M620.1,122.2 L620.3,123.0 L624.9,120.5 L624.8,120.0 Z" fill="#656565" stroke="#656565" stroke-width="0.7"/>
<path d="M619.6,186.0 L623.2,186.8 L621.2,183.5 L617.4,182.6 Z" fill="#1e1e1e" stroke="#1e1e1e" stroke-width="0.7"/>
<path d="M655.8,120.4 L655.8,119.2 L650.8,117.8 L650.7,118.7 Z" fill="#585858" stroke="#585858" stroke-width="0.7"/>
<path d="M614.1,181.5 L617.4,182.6 L615.6,178.8 L612.1,177.6 Z" fill="#212121" stroke="#212121" stroke-width="0.7"/>
<path d="M629.8,118.0 L629.8,118.3 L635.0,117.2 L635.0,117.2 Z" fill="#666666" stroke="#666666" stroke-width="0.7"/>
<path d="M640.3,116.8 L640.2,116.5 L635.0,117.2 L635.0,117.2 Z" fill="#656565" stroke="#656565" stroke-width="0.7"/>
<path d="M608.6,133.5 L609.5,135.0 L612.8,130.9 L612.0,129.6 Z" fill="#595959" stroke="#595959" stroke-width="0.7"/>
<path d="M624.8,120.0 L624.9,120.5 L629.9,118.6 L629.8,118.3 Z" fill="#666666" stroke="#666666" stroke-width="0.7"/>
<path d="M629.8,118.3 L629.9,118.6 L635.0,117.2 L635.0,117.2 Z" fill="#666666" stroke="#666666" stroke-width="0.7"/>
<path d="M650.7,118.7 L650.8,117.8 L645.6,117.0 L645.6,117.6 Z" fill="#5d5d5d" stroke="#5d5d5d" stroke-width="0.7"/>
<path d="M640.3,117.1 L640.3,116.8 L635.0,117.2 L635.0,117.2 Z" fill="#656565" stroke="#656565" stroke-width="0.7"/>
<path d="M602.9,149.0 L604.7,150.7 L606.1,145.8 L604.5,144.1 Z" fill="#4e4e4e" stroke="#4e4e4e" stroke-width="0.7"/>
<path d="M668.3,130.6 L668.9,128.7 L664.9,125.4 L664.3,127.1 Z" fill="#4e4e4e" stroke="#4e4e4e" stroke-width="0.7"/>
<path d="M645.6,117.6 L645.6,117.0 L640.3,116.8 L640.3,117.1 Z" fill="#626262" stroke="#626262" stroke-width="0.7"/>
<path d="M629.9,118.6 L630.0,118.8 L635.0,117.2 L635.0,117.2 Z" fill="#666666" stroke="#666666" stroke-width="0.7"/>
<path d="M673.7,168.8 L676.3,166.6 L676.5,162.0 L673.8,164.2 Z" fill="#343434" stroke="#343434" stroke-width="0.7"/>
<path d="M675.5,145.4 L677.0,143.2 L674.6,138.7 L673.3,140.9 Z" fill="#494949" stroke="#494949" stroke-width="0.7"/>
<path d="M640.2,117.4 L640.3,117.1 L635.0,117.2 L635.0,117.2 Z" fill="#656565" stroke="#656565" stroke-width="0.7"/>
<path d="M629.0,190.0 L632.8,190.2 L631.2,187.6 L627.0,187.3 Z" fill="#1e1e1e" stroke="#1e1e1e" stroke-width="0.7"/>
<path d="M612.0,129.6 L612.8,130.9 L616.5,127.1 L615.9,126.1 Z" fill="#5e5e5e" stroke="#5e5e5e" stroke-width="0.7"/>
<path d="M630.0,118.8 L630.3,119.1 L635.0,117.2 L635.0,117.2 Z" fill="#666666" stroke="#666666" stroke-width="0.7"/>
<path d="M665.5,180.7 L668.8,178.9 L669.9,175.1 L666.4,177.0 Z" fill="#232323" stroke="#232323" stroke-width="0.7"/>
<path d="M640.0,117.7 L640.2,117.4 L635.0,117.2 L635.0,117.2 Z" fill="#656565" stroke="#656565" stroke-width="0.7"/>
<path d="M624.9,120.5 L625.2,121.1 L630.0,118.8 L629.9,118.6 Z" fill="#666666" stroke="#666666" stroke-width="0.7"/>
<path d="M630.3,119.1 L630.6,119.3 L635.0,117.2 L635.0,117.2 Z" fill="#666666" stroke="#666666" stroke-width="0.7"/>
<path d="M615.9,126.1 L616.5,127.1 L620.7,123.8 L620.3,123.0 Z" fill="#626262" stroke="#626262" stroke-width="0.7"/>
<path d="M639.7,118.0 L640.0,117.7 L635.0,117.2 L635.0,117.2 Z" fill="#656565" stroke="#656565" stroke-width="0.7"/>
<path d="M669.9,175.1 L673.0,173.1 L673.7,168.8 L670.4,170.9 Z" fill="#2c2c2c" stroke="#2c2c2c" stroke-width="0.7"/>
<path d="M620.3,123.0 L620.7,123.8 L625.2,121.1 L624.9,120.5 Z" fill="#656565" stroke="#656565" stroke-width="0.7"/>
<path d="M664.3,127.1 L664.9,125.4 L660.5,122.6 L660.0,124.1 Z" fill="#4e4e4e" stroke="#4e4e4e" stroke-width="0.7"/>
<path d="M676.1,157.3 L678.2,154.9 L677.2,150.1 L675.1,152.5 Z" fill="#404040" stroke="#404040" stroke-width="0.7"/>
<path d="M657.2,186.7 L660.9,185.4 L661.8,182.3 L657.8,183.7 Z" fill="#1e1e1e" stroke="#1e1e1e" stroke-width="0.7"/>
<path d="M630.6,119.3 L631.0,119.5 L635.0,117.2 L635.0,117.2 Z" fill="#666666" stroke="#666666" stroke-width="0.7"/>
<path d="M645.3,118.2 L645.6,117.6 L640.3,117.1 L640.2,117.4 Z" fill="#616161" stroke="#616161" stroke-width="0.7"/>
<path d="M639.3,118.3 L639.7,118.0 L635.0,117.2 L635.0,117.2 Z" fill="#646464" stroke="#646464" stroke-width="0.7"/>
<path d="M603.6,160.7 L606.1,162.4 L606.2,157.4 L603.8,155.8 Z" fill="#424242" stroke="#424242" stroke-width="0.7"/>
<path d="M607.5,171.9 L610.6,173.3 L609.6,168.7 L606.5,167.3 Z" fill="#333333" stroke="#333333" stroke-width="0.7"/>
<path d="M604.5,144.1 L606.1,145.8 L608.2,140.9 L606.7,139.4 Z" fill="#4f4f4f" stroke="#4f4f4f" stroke-width="0.7"/>
<path d="M631.0,119.5 L631.5,119.6 L635.0,117.2 L635.0,117.2 Z" fill="#666666" stroke="#666666" stroke-width="0.7"/>
<path d="M638.9,118.6 L639.3,118.3 L635.0,117.2 L635.0,117.2 Z" fill="#656565" stroke="#656565" stroke-width="0.7"/>
<path d="M660.0,124.1 L660.5,122.6 L655.8,120.4 L655.3,121.5 Z" fill="#505050" stroke="#505050" stroke-width="0.7"/>
<path d="M650.4,119.6 L650.7,118.7 L645.6,117.6 L645.3,118.2 Z" fill="#5d5d5d" stroke="#5d5d5d" stroke-width="0.7"/>
<path d="M631.5,119.6 L632.0,119.8 L635.0,117.2 L635.0,117.2 Z" fill="#666666" stroke="#666666" stroke-width="0.7"/>
<path d="M625.2,121.1 L625.7,121.5 L630.3,119.1 L630.0,118.8 Z" fill="#666666" stroke="#666666" stroke-width="0.7"/>
<path d="M638.4,118.8 L638.9,118.6 L635.0,117.2 L635.0,117.2 Z" fill="#656565" stroke="#656565" stroke-width="0.7"/>
<path d="M655.3,121.5 L655.8,120.4 L650.7,118.7 L650.4,119.6 Z" fill="#575757" stroke="#575757" stroke-width="0.7"/>
<path d="M673.3,140.9 L674.6,138.7 L671.7,134.5 L670.4,136.5 Z" fill="#4c4c4c" stroke="#4c4c4c" stroke-width="0.7"/>
<path d="M632.0,119.8 L632.6,119.8 L635.0,117.2 L635.0,117.2 Z" fill="#656565" stroke="#656565" stroke-width="0.7"/>
<path d="M637.8,119.1 L638.4,118.8 L635.0,117.2 L635.0,117.2 Z" fill="#656565" stroke="#656565" stroke-width="0.7"/>
<path d="M632.6,119.8 L633.2,119.9 L635.0,117.2 L635.0,117.2 Z" fill="#656565" stroke="#656565" stroke-width="0.7"/>
<path d="M637.2,119.3 L637.8,119.1 L635.0,117.2 L635.0,117.2 Z" fill="#656565" stroke="#656565" stroke-width="0.7"/>
<path d="M644.9,118.8 L645.3,118.2 L640.2,117.4 L640.0,117.7 Z" fill="#616161" stroke="#616161" stroke-width="0.7"/>
<path d="M632.8,190.2 L636.8,190.2 L635.6,187.6 L631.2,187.6 Z" fill="#1e1e1e" stroke="#1e1e1e" stroke-width="0.7"/>
<path d="M633.2,119.9 L633.9,119.9 L635.0,117.2 L635.0,117.2 Z" fill="#656565" stroke="#656565" stroke-width="0.7"/>
<path d="M636.6,119.5 L637.2,119.3 L635.0,117.2 L635.0,117.2 Z" fill="#656565" stroke="#656565" stroke-width="0.7"/>
<path d="M633.9,119.9 L634.6,119.8 L635.0,117.2 L635.0,117.2 Z" fill="#656565" stroke="#656565" stroke-width="0.7"/>
<path d="M635.9,119.6 L636.6,119.5 L635.0,117.2 L635.0,117.2 Z" fill="#656565" stroke="#656565" stroke-width="0.7"/>
<path d="M623.2,186.8 L627.0,187.3 L625.3,184.0 L621.2,183.5 Z" fill="#1e1e1e" stroke="#1e1e1e" stroke-width="0.7"/>
<path d="M634.6,119.8 L635.2,119.8 L635.0,117.2 L635.0,117.2 Z" fill="#656565" stroke="#656565" stroke-width="0.7"/>
<path d="M635.2,119.8 L635.9,119.6 L635.0,117.2 L635.0,117.2 Z" fill="#656565" stroke="#656565" stroke-width="0.7"/>
<path d="M606.7,139.4 L608.2,140.9 L610.8,136.3 L609.5,135.0 Z" fill="#515151" stroke="#515151" stroke-width="0.7"/>
<path d="M620.7,123.8 L621.4,124.5 L625.7,121.5 L625.2,121.1 Z" fill="#646464" stroke="#646464" stroke-width="0.7"/>
<path d="M653.3,187.8 L657.2,186.7 L657.8,183.7 L653.6,185.0 Z" fill="#1e1e1e" stroke="#1e1e1e" stroke-width="0.7"/>
<path d="M625.7,121.5 L626.4,122.0 L630.6,119.3 L630.3,119.1 Z" fill="#666666" stroke="#666666" stroke-width="0.7"/>
<path d="M612.1,177.6 L615.6,178.8 L614.1,174.5 L610.6,173.3 Z" fill="#272727" stroke="#272727" stroke-width="0.7"/>
<path d="M609.5,135.0 L610.8,136.3 L613.9,132.0 L612.8,130.9 Z" fill="#585858" stroke="#585858" stroke-width="0.7"/>
<path d="M670.4,136.5 L671.7,134.5 L668.3,130.6 L667.1,132.4 Z" fill="#4d4d4d" stroke="#4d4d4d" stroke-width="0.7"/>
<path d="M673.8,164.2 L676.5,162.0 L676.1,157.3 L673.3,159.5 Z" fill="#3a3a3a" stroke="#3a3a3a" stroke-width="0.7"/>
<path d="M644.4,119.4 L644.9,118.8 L640.0,117.7 L639.7,118.0 Z" fill="#616161" stroke="#616161" stroke-width="0.7"/>
<path d="M603.8,155.8 L606.2,157.4 L607.0,152.3 L604.7,150.7 Z" fill="#464646" stroke="#464646" stroke-width="0.7"/>
<path d="M617.4,182.6 L621.2,183.5 L619.5,179.7 L615.6,178.8 Z" fill="#1e1e1e" stroke="#1e1e1e" stroke-width="0.7"/>
<path d="M675.1,152.5 L677.2,150.1 L675.5,145.4 L673.4,147.7 Z" fill="#454545" stroke="#454545" stroke-width="0.7"/>
<path d="M616.5,127.1 L617.5,128.0 L621.4,124.5 L620.7,123.8 Z" fill="#626262" stroke="#626262" stroke-width="0.7"/>
<path d="M649.9,120.5 L650.4,119.6 L645.3,118.2 L644.9,118.8 Z" fill="#5d5d5d" stroke="#5d5d5d" stroke-width="0.7"/>
<path d="M612.8,130.9 L613.9,132.0 L617.5,128.0 L616.5,127.1 Z" fill="#5d5d5d" stroke="#5d5d5d" stroke-width="0.7"/>
<path d="M661.8,182.3 L665.5,180.7 L666.4,177.0 L662.4,178.7 Z" fill="#202020" stroke="#202020" stroke-width="0.7"/>
<path d="M636.8,190.2 L640.9,190.0 L640.1,187.3 L635.6,187.6 Z" fill="#1e1e1e" stroke="#1e1e1e" stroke-width="0.7"/>
<path d="M626.4,122.0 L627.2,122.3 L631.0,119.5 L630.6,119.3 Z" fill="#656565" stroke="#656565" stroke-width="0.7"/>
<path d="M649.3,188.8 L653.3,187.8 L653.6,185.0 L649.1,186.0 Z" fill="#1e1e1e" stroke="#1e1e1e" stroke-width="0.7"/>
<path d="M606.5,167.3 L609.6,168.7 L609.1,163.8 L606.1,162.4 Z" fill="#383838" stroke="#383838" stroke-width="0.7"/>
<path d="M667.1,132.4 L668.3,130.6 L664.3,127.1 L663.3,128.8 Z" fill="#4e4e4e" stroke="#4e4e4e" stroke-width="0.7"/>
<path d="M643.7,120.0 L644.4,119.4 L639.7,118.0 L639.3,118.3 Z" fill="#616161" stroke="#616161" stroke-width="0.7"/>
<path d="M654.6,122.7 L655.3,121.5 L650.4,119.6 L649.9,120.5 Z" fill="#575757" stroke="#575757" stroke-width="0.7"/>
<path d="M640.9,190.0 L645.1,189.5 L644.6,186.8 L640.1,187.3 Z" fill="#1e1e1e" stroke="#1e1e1e" stroke-width="0.7"/>
<path d="M645.1,189.5 L649.3,188.8 L649.1,186.0 L644.6,186.8 Z" fill="#1e1e1e" stroke="#1e1e1e" stroke-width="0.7"/>
<path d="M621.4,124.5 L622.4,125.2 L626.4,122.0 L625.7,121.5 Z" fill="#646464" stroke="#646464" stroke-width="0.7"/>
<path d="M670.4,170.9 L673.7,168.8 L673.8,164.2 L670.5,166.4 Z" fill="#323232" stroke="#323232" stroke-width="0.7"/>
<path d="M663.3,128.8 L664.3,127.1 L660.0,124.1 L659.1,125.5 Z" fill="#4e4e4e" stroke="#4e4e4e" stroke-width="0.7"/>
<path d="M659.1,125.5 L660.0,124.1 L655.3,121.5 L654.6,122.7 Z" fill="#505050" stroke="#505050" stroke-width="0.7"/>
<path d="M666.4,177.0 L669.9,175.1 L670.4,170.9 L666.8,172.9 Z" fill="#2a2a2a" stroke="#2a2a2a" stroke-width="0.7"/>
<path d="M627.2,122.3 L628.1,122.6 L631.5,119.6 L631.0,119.5 Z" fill="#656565" stroke="#656565" stroke-width="0.7"/>
<path d="M604.7,150.7 L607.0,152.3 L608.3,147.2 L606.1,145.8 Z" fill="#494949" stroke="#494949" stroke-width="0.7"/>
<path d="M642.8,120.5 L643.7,120.0 L639.3,118.3 L638.9,118.6 Z" fill="#616161" stroke="#616161" stroke-width="0.7"/>
<path d="M627.0,187.3 L631.2,187.6 L629.7,184.3 L625.3,184.0 Z" fill="#1e1e1e" stroke="#1e1e1e" stroke-width="0.7"/>
<path d="M649.0,121.3 L649.9,120.5 L644.9,118.8 L644.4,119.4 Z" fill="#5d5d5d" stroke="#5d5d5d" stroke-width="0.7"/>
<path d="M673.4,147.7 L675.5,145.4 L673.3,140.9 L671.3,143.0 Z" fill="#484848" stroke="#484848" stroke-width="0.7"/>
<path d="M628.1,122.6 L629.2,122.9 L632.0,119.8 L631.5,119.6 Z" fill="#656565" stroke="#656565" stroke-width="0.7"/>
<path d="M617.5,128.0 L618.7,128.9 L622.4,125.2 L621.4,124.5 Z" fill="#616161" stroke="#616161" stroke-width="0.7"/>
<path d="M641.8,121.1 L642.8,120.5 L638.9,118.6 L638.4,118.8 Z" fill="#616161" stroke="#616161" stroke-width="0.7"/>
<path d="M673.3,159.5 L676.1,157.3 L675.1,152.5 L672.3,154.7 Z" fill="#3f3f3f" stroke="#3f3f3f" stroke-width="0.7"/>
<path d="M606.1,145.8 L608.3,147.2 L610.2,142.2 L608.2,140.9 Z" fill="#4b4b4b" stroke="#4b4b4b" stroke-width="0.7"/>
<path d="M610.6,173.3 L614.1,174.5 L613.2,169.9 L609.6,168.7 Z" fill="#2d2d2d" stroke="#2d2d2d" stroke-width="0.7"/>
<path d="M657.8,183.7 L661.8,182.3 L662.4,178.7 L658.1,180.2 Z" fill="#1e1e1e" stroke="#1e1e1e" stroke-width="0.7"/>
<path d="M622.4,125.2 L623.6,125.7 L627.2,122.3 L626.4,122.0 Z" fill="#636363" stroke="#636363" stroke-width="0.7"/>
<path d="M606.1,162.4 L609.1,163.8 L609.2,158.7 L606.2,157.4 Z" fill="#3d3d3d" stroke="#3d3d3d" stroke-width="0.7"/>
<path d="M629.2,122.9 L630.3,123.0 L632.6,119.8 L632.0,119.8 Z" fill="#646464" stroke="#646464" stroke-width="0.7"/>
<path d="M613.9,132.0 L615.4,133.0 L618.7,128.9 L617.5,128.0 Z" fill="#5c5c5c" stroke="#5c5c5c" stroke-width="0.7"/>
<path d="M640.7,121.5 L641.8,121.1 L638.4,118.8 L637.8,119.1 Z" fill="#616161" stroke="#616161" stroke-width="0.7"/>
<path d="M608.2,140.9 L610.2,142.2 L612.5,137.5 L610.8,136.3 Z" fill="#505050" stroke="#505050" stroke-width="0.7"/>
<path d="M653.5,123.9 L654.6,122.7 L649.9,120.5 L649.0,121.3 Z" fill="#575757" stroke="#575757" stroke-width="0.7"/>
<path d="M671.3,143.0 L673.3,140.9 L670.4,136.5 L668.6,138.5 Z" fill="#4b4b4b" stroke="#4b4b4b" stroke-width="0.7"/>
<path d="M621.2,183.5 L625.3,184.0 L623.8,180.2 L619.5,179.7 Z" fill="#1e1e1e" stroke="#1e1e1e" stroke-width="0.7"/>
<path d="M648.0,122.2 L649.0,121.3 L644.4,119.4 L643.7,120.0 Z" fill="#5d5d5d" stroke="#5d5d5d" stroke-width="0.7"/>
<path d="M610.8,136.3 L612.5,137.5 L615.4,133.0 L613.9,132.0 Z" fill="#575757" stroke="#575757" stroke-width="0.7"/>
<path d="M630.3,123.0 L631.6,123.1 L633.2,119.9 L632.6,119.8 Z" fill="#646464" stroke="#646464" stroke-width="0.7"/>
<path d="M615.6,178.8 L619.5,179.7 L618.2,175.4 L614.1,174.5 Z" fill="#212121" stroke="#212121" stroke-width="0.7"/>
<path d="M639.5,122.0 L640.7,121.5 L637.8,119.1 L637.2,119.3 Z" fill="#626262" stroke="#626262" stroke-width="0.7"/>
<path d="M631.2,187.6 L635.6,187.6 L634.4,184.3 L629.7,184.3 Z" fill="#1e1e1e" stroke="#1e1e1e" stroke-width="0.7"/>
<path d="M631.6,123.1 L632.9,123.1 L633.9,119.9 L633.2,119.9 Z" fill="#636363" stroke="#636363" stroke-width="0.7"/>
<path d="M638.3,122.3 L639.5,122.0 L637.2,119.3 L636.6,119.5 Z" fill="#626262" stroke="#626262" stroke-width="0.7"/>
<path d="M657.8,126.9 L659.1,125.5 L654.6,122.7 L653.5,123.9 Z" fill="#505050" stroke="#505050" stroke-width="0.7"/>
<path d="M668.6,138.5 L670.4,136.5 L667.1,132.4 L665.4,134.3 Z" fill="#4d4d4d" stroke="#4d4d4d" stroke-width="0.7"/>
<path d="M623.6,125.7 L625.0,126.2 L628.1,122.6 L627.2,122.3 Z" fill="#636363" stroke="#636363" stroke-width="0.7"/>
<path d="M632.9,123.1 L634.2,123.0 L634.6,119.8 L633.9,119.9 Z" fill="#636363" stroke="#636363" stroke-width="0.7"/>
<path d="M670.5,166.4 L673.8,164.2 L673.3,159.5 L670.0,161.7 Z" fill="#383838" stroke="#383838" stroke-width="0.7"/>
<path d="M636.9,122.6 L638.3,122.3 L636.6,119.5 L635.9,119.6 Z" fill="#626262" stroke="#626262" stroke-width="0.7"/>
<path d="M634.2,123.0 L635.6,122.9 L635.2,119.8 L634.6,119.8 Z" fill="#636363" stroke="#636363" stroke-width="0.7"/>
<path d="M635.6,122.9 L636.9,122.6 L635.9,119.6 L635.2,119.8 Z" fill="#626262" stroke="#626262" stroke-width="0.7"/>
<path d="M653.6,185.0 L657.8,183.7 L658.1,180.2 L653.6,181.5 Z" fill="#1e1e1e" stroke="#1e1e1e" stroke-width="0.7"/>
<path d="M662.4,178.7 L666.4,177.0 L666.8,172.9 L662.6,174.7 Z" fill="#272727" stroke="#272727" stroke-width="0.7"/>
<path d="M618.7,128.9 L620.3,129.6 L623.6,125.7 L622.4,125.2 Z" fill="#606060" stroke="#606060" stroke-width="0.7"/>
<path d="M606.2,157.4 L609.2,158.7 L609.8,153.6 L607.0,152.3 Z" fill="#414141" stroke="#414141" stroke-width="0.7"/>
<path d="M661.8,130.4 L663.3,128.8 L659.1,125.5 L657.8,126.9 Z" fill="#4e4e4e" stroke="#4e4e4e" stroke-width="0.7"/>
<path d="M665.4,134.3 L667.1,132.4 L663.3,128.8 L661.8,130.4 Z" fill="#4e4e4e" stroke="#4e4e4e" stroke-width="0.7"/>
<path d="M672.3,154.7 L675.1,152.5 L673.4,147.7 L670.8,149.9 Z" fill="#434343" stroke="#434343" stroke-width="0.7"/>
<path d="M646.7,123.1 L648.0,122.2 L643.7,120.0 L642.8,120.5 Z" fill="#5d5d5d" stroke="#5d5d5d" stroke-width="0.7"/>
<path d="M666.8,172.9 L670.4,170.9 L670.5,166.4 L666.7,168.4 Z" fill="#303030" stroke="#303030" stroke-width="0.7"/>
<path d="M609.6,168.7 L613.2,169.9 L612.7,165.0 L609.1,163.8 Z" fill="#323232" stroke="#323232" stroke-width="0.7"/>
<path d="M635.6,187.6 L640.1,187.3 L639.2,184.0 L634.4,184.3 Z" fill="#1e1e1e" stroke="#1e1e1e" stroke-width="0.7"/>
<path d="M652.1,125.0 L653.5,123.9 L649.0,121.3 L648.0,122.2 Z" fill="#575757" stroke="#575757" stroke-width="0.7"/>
<path d="M625.0,126.2 L626.5,126.5 L629.2,122.9 L628.1,122.6 Z" fill="#626262" stroke="#626262" stroke-width="0.7"/>
<path d="M649.1,186.0 L653.6,185.0 L653.6,181.5 L648.9,182.6 Z" fill="#1e1e1e" stroke="#1e1e1e" stroke-width="0.7"/>
<path d="M615.4,133.0 L617.3,133.9 L620.3,129.6 L618.7,128.9 Z" fill="#5b5b5b" stroke="#5b5b5b" stroke-width="0.7"/>
<path d="M607.0,152.3 L609.8,153.6 L610.9,148.4 L608.3,147.2 Z" fill="#444444" stroke="#444444" stroke-width="0.7"/>
<path d="M645.2,123.8 L646.7,123.1 L642.8,120.5 L641.8,121.1 Z" fill="#5d5d5d" stroke="#5d5d5d" stroke-width="0.7"/>
<path d="M640.1,187.3 L644.6,186.8 L644.0,183.5 L639.2,184.0 Z" fill="#1e1e1e" stroke="#1e1e1e" stroke-width="0.7"/>
<path d="M625.3,184.0 L629.7,184.3 L628.5,180.5 L623.8,180.2 Z" fill="#1e1e1e" stroke="#1e1e1e" stroke-width="0.7"/>
<path d="M644.6,186.8 L649.1,186.0 L648.9,182.6 L644.0,183.5 Z" fill="#1e1e1e" stroke="#1e1e1e" stroke-width="0.7"/>
<path d="M670.8,149.9 L673.4,147.7 L671.3,143.0 L668.7,145.1 Z" fill="#474747" stroke="#474747" stroke-width="0.7"/>
<path d="M620.3,129.6 L622.1,130.2 L625.0,126.2 L623.6,125.7 Z" fill="#5f5f5f" stroke="#5f5f5f" stroke-width="0.7"/>
<path d="M612.5,137.5 L614.7,138.5 L617.3,133.9 L615.4,133.0 Z" fill="#565656" stroke="#565656" stroke-width="0.7"/>
<path d="M608.3,147.2 L610.9,148.4 L612.6,143.4 L610.2,142.2 Z" fill="#474747" stroke="#474747" stroke-width="0.7"/>
<path d="M626.5,126.5 L628.2,126.8 L630.3,123.0 L629.2,122.9 Z" fill="#616161" stroke="#616161" stroke-width="0.7"/>
<path d="M614.1,174.5 L618.2,175.4 L617.3,170.8 L613.2,169.9 Z" fill="#262626" stroke="#262626" stroke-width="0.7"/>
<path d="M656.1,128.3 L657.8,126.9 L653.5,123.9 L652.1,125.0 Z" fill="#505050" stroke="#505050" stroke-width="0.7"/>
<path d="M610.2,142.2 L612.6,143.4 L614.7,138.5 L612.5,137.5 Z" fill="#4f4f4f" stroke="#4f4f4f" stroke-width="0.7"/>
<path d="M670.0,161.7 L673.3,159.5 L672.3,154.7 L669.0,156.9 Z" fill="#3d3d3d" stroke="#3d3d3d" stroke-width="0.7"/>
<path d="M619.5,179.7 L623.8,180.2 L622.6,176.0 L618.2,175.4 Z" fill="#1e1e1e" stroke="#1e1e1e" stroke-width="0.7"/>
<path d="M658.1,180.2 L662.4,178.7 L662.6,174.7 L658.2,176.3 Z" fill="#232323" stroke="#232323" stroke-width="0.7"/>
<path d="M643.6,124.5 L645.2,123.8 L641.8,121.1 L640.7,121.5 Z" fill="#5d5d5d" stroke="#5d5d5d" stroke-width="0.7"/>
<path d="M650.5,126.1 L652.1,125.0 L648.0,122.2 L646.7,123.1 Z" fill="#575757" stroke="#575757" stroke-width="0.7"/>
<path d="M609.1,163.8 L612.7,165.0 L612.7,159.9 L609.2,158.7 Z" fill="#373737" stroke="#373737" stroke-width="0.7"/>
<path d="M668.7,145.1 L671.3,143.0 L668.6,138.5 L666.2,140.5 Z" fill="#4a4a4a" stroke="#4a4a4a" stroke-width="0.7"/>
<path d="M628.2,126.8 L630.1,126.9 L631.6,123.1 L630.3,123.0 Z" fill="#616161" stroke="#616161" stroke-width="0.7"/>
<path d="M659.8,132.0 L661.8,130.4 L657.8,126.9 L656.1,128.3 Z" fill="#4d4d4d" stroke="#4d4d4d" stroke-width="0.7"/>
<path d="M641.8,125.2 L643.6,124.5 L640.7,121.5 L639.5,122.0 Z" fill="#5d5d5d" stroke="#5d5d5d" stroke-width="0.7"/>
<path d="M666.7,168.4 L670.5,166.4 L670.0,161.7 L666.2,163.7 Z" fill="#353535" stroke="#353535" stroke-width="0.7"/>
<path d="M666.2,140.5 L668.6,138.5 L665.4,134.3 L663.2,136.1 Z" fill="#4c4c4c" stroke="#4c4c4c" stroke-width="0.7"/>
<path d="M662.6,174.7 L666.8,172.9 L666.7,168.4 L662.5,170.3 Z" fill="#2d2d2d" stroke="#2d2d2d" stroke-width="0.7"/>
<path d="M629.7,184.3 L634.4,184.3 L633.3,180.5 L628.5,180.5 Z" fill="#1e1e1e" stroke="#1e1e1e" stroke-width="0.7"/>
<path d="M663.2,136.1 L665.4,134.3 L661.8,130.4 L659.8,132.0 Z" fill="#4d4d4d" stroke="#4d4d4d" stroke-width="0.7"/>
<path d="M630.1,126.9 L632.0,126.9 L632.9,123.1 L631.6,123.1 Z" fill="#606060" stroke="#606060" stroke-width="0.7"/>
<path d="M622.1,130.2 L624.1,130.6 L626.5,126.5 L625.0,126.2 Z" fill="#5e5e5e" stroke="#5e5e5e" stroke-width="0.7"/>
<path d="M617.3,133.9 L619.5,134.6 L622.1,130.2 L620.3,129.6 Z" fill="#5a5a5a" stroke="#5a5a5a" stroke-width="0.7"/>
<path d="M640.0,125.7 L641.8,125.2 L639.5,122.0 L638.3,122.3 Z" fill="#5e5e5e" stroke="#5e5e5e" stroke-width="0.7"/>
<path d="M632.0,126.9 L634.0,126.8 L634.2,123.0 L632.9,123.1 Z" fill="#606060" stroke="#606060" stroke-width="0.7"/>
<path d="M609.2,158.7 L612.7,159.9 L613.1,154.7 L609.8,153.6 Z" fill="#3b3b3b" stroke="#3b3b3b" stroke-width="0.7"/>
<path d="M653.6,181.5 L658.1,180.2 L658.2,176.3 L653.4,177.7 Z" fill="#1f1f1f" stroke="#1f1f1f" stroke-width="0.7"/>
<path d="M648.6,127.1 L650.5,126.1 L646.7,123.1 L645.2,123.8 Z" fill="#575757" stroke="#575757" stroke-width="0.7"/>
<path d="M638.0,126.2 L640.0,125.7 L638.3,122.3 L636.9,122.6 Z" fill="#5e5e5e" stroke="#5e5e5e" stroke-width="0.7"/>
<path d="M669.0,156.9 L672.3,154.7 L670.8,149.9 L667.6,152.0 Z" fill="#424242" stroke="#424242" stroke-width="0.7"/>
<path d="M634.0,126.8 L636.0,126.5 L635.6,122.9 L634.2,123.0 Z" fill="#5f5f5f" stroke="#5f5f5f" stroke-width="0.7"/>
<path d="M636.0,126.5 L638.0,126.2 L636.9,122.6 L635.6,122.9 Z" fill="#5f5f5f" stroke="#5f5f5f" stroke-width="0.7"/>
<path d="M654.1,129.6 L656.1,128.3 L652.1,125.0 L650.5,126.1 Z" fill="#505050" stroke="#505050" stroke-width="0.7"/>
<path d="M613.2,169.9 L617.3,170.8 L616.7,165.9 L612.7,165.0 Z" fill="#2b2b2b" stroke="#2b2b2b" stroke-width="0.7"/>
<path d="M614.7,138.5 L617.3,139.3 L619.5,134.6 L617.3,133.9 Z" fill="#555555" stroke="#555555" stroke-width="0.7"/>
<path d="M634.4,184.3 L639.2,184.0 L638.3,180.3 L633.3,180.5 Z" fill="#1e1e1e" stroke="#1e1e1e" stroke-width="0.7"/>
<path d="M624.1,130.6 L626.3,130.9 L628.2,126.8 L626.5,126.5 Z" fill="#5e5e5e" stroke="#5e5e5e" stroke-width="0.7"/>
<path d="M623.8,180.2 L628.5,180.5 L627.4,176.3 L622.6,176.0 Z" fill="#1e1e1e" stroke="#1e1e1e" stroke-width="0.7"/>
<path d="M609.8,153.6 L613.1,154.7 L614.1,149.5 L610.9,148.4 Z" fill="#3f3f3f" stroke="#3f3f3f" stroke-width="0.7"/>
<path d="M648.9,182.6 L653.6,181.5 L653.4,177.7 L648.5,178.8 Z" fill="#1e1e1e" stroke="#1e1e1e" stroke-width="0.7"/>
<path d="M618.2,175.4 L622.6,176.0 L621.7,171.4 L617.3,170.8 Z" fill="#1f1f1f" stroke="#1f1f1f" stroke-width="0.7"/>
<path d="M612.6,143.4 L615.5,144.3 L617.3,139.3 L614.7,138.5 Z" fill="#4e4e4e" stroke="#4e4e4e" stroke-width="0.7"/>
<path d="M610.9,148.4 L614.1,149.5 L615.5,144.3 L612.6,143.4 Z" fill="#464646" stroke="#464646" stroke-width="0.7"/>
<path d="M646.4,128.1 L648.6,127.1 L645.2,123.8 L643.6,124.5 Z" fill="#575757" stroke="#575757" stroke-width="0.7"/>
<path d="M667.6,152.0 L670.8,149.9 L668.7,145.1 L665.6,147.1 Z" fill="#454545" stroke="#454545" stroke-width="0.7"/>
<path d="M619.5,134.6 L622.0,135.2 L624.1,130.6 L622.1,130.2 Z" fill="#595959" stroke="#595959" stroke-width="0.7"/>
<path d="M639.2,184.0 L644.0,183.5 L643.4,179.7 L638.3,180.3 Z" fill="#1e1e1e" stroke="#1e1e1e" stroke-width="0.7"/>
<path d="M657.5,133.6 L659.8,132.0 L656.1,128.3 L654.1,129.6 Z" fill="#4c4c4c" stroke="#4c4c4c" stroke-width="0.7"/>
<path d="M644.0,183.5 L648.9,182.6 L648.5,178.8 L643.4,179.7 Z" fill="#1e1e1e" stroke="#1e1e1e" stroke-width="0.7"/>
<path d="M666.2,163.7 L670.0,161.7 L669.0,156.9 L665.2,158.9 Z" fill="#3b3b3b" stroke="#3b3b3b" stroke-width="0.7"/>
<path d="M658.2,176.3 L662.6,174.7 L662.5,170.3 L657.9,171.9 Z" fill="#292929" stroke="#292929" stroke-width="0.7"/>
<path d="M626.3,130.9 L628.7,131.1 L630.1,126.9 L628.2,126.8 Z" fill="#5d5d5d" stroke="#5d5d5d" stroke-width="0.7"/>
<path d="M612.7,165.0 L616.7,165.9 L616.6,160.8 L612.7,159.9 Z" fill="#303030" stroke="#303030" stroke-width="0.7"/>
<path d="M651.8,130.9 L654.1,129.6 L650.5,126.1 L648.6,127.1 Z" fill="#505050" stroke="#505050" stroke-width="0.7"/>
<path d="M662.5,170.3 L666.7,168.4 L666.2,163.7 L661.9,165.6 Z" fill="#323232" stroke="#323232" stroke-width="0.7"/>
<path d="M665.6,147.1 L668.7,145.1 L666.2,140.5 L663.3,142.4 Z" fill="#484848" stroke="#484848" stroke-width="0.7"/>
<path d="M660.5,137.8 L663.2,136.1 L659.8,132.0 L657.5,133.6 Z" fill="#4c4c4c" stroke="#4c4c4c" stroke-width="0.7"/>
<path d="M644.1,128.9 L646.4,128.1 L643.6,124.5 L641.8,125.2 Z" fill="#585858" stroke="#585858" stroke-width="0.7"/>
<path d="M663.3,142.4 L666.2,140.5 L663.2,136.1 L660.5,137.8 Z" fill="#4a4a4a" stroke="#4a4a4a" stroke-width="0.7"/>
<path d="M628.5,180.5 L633.3,180.5 L632.4,176.3 L627.4,176.3 Z" fill="#1e1e1e" stroke="#1e1e1e" stroke-width="0.7"/>
<path d="M628.7,131.1 L631.3,131.1 L632.0,126.9 L630.1,126.9 Z" fill="#5c5c5c" stroke="#5c5c5c" stroke-width="0.7"/>
<path d="M617.3,139.3 L620.2,140.0 L622.0,135.2 L619.5,134.6 Z" fill="#535353" stroke="#535353" stroke-width="0.7"/>
<path d="M641.7,129.6 L644.1,128.9 L641.8,125.2 L640.0,125.7 Z" fill="#585858" stroke="#585858" stroke-width="0.7"/>
<path d="M622.0,135.2 L624.7,135.5 L626.3,130.9 L624.1,130.6 Z" fill="#585858" stroke="#585858" stroke-width="0.7"/>
<path d="M665.2,158.9 L669.0,156.9 L667.6,152.0 L663.9,154.0 Z" fill="#3f3f3f" stroke="#3f3f3f" stroke-width="0.7"/>
<path d="M612.7,159.9 L616.6,160.8 L616.9,155.5 L613.1,154.7 Z" fill="#353535" stroke="#353535" stroke-width="0.7"/>
<path d="M617.3,170.8 L621.7,171.4 L621.2,166.5 L616.7,165.9 Z" fill="#252525" stroke="#252525" stroke-width="0.7"/>
<path d="M653.4,177.7 L658.2,176.3 L657.9,171.9 L653.0,173.4 Z" fill="#252525" stroke="#252525" stroke-width="0.7"/>
<path d="M631.3,131.1 L633.9,130.9 L634.0,126.8 L632.0,126.9 Z" fill="#5b5b5b" stroke="#5b5b5b" stroke-width="0.7"/>
<path d="M639.1,130.2 L641.7,129.6 L640.0,125.7 L638.0,126.2 Z" fill="#595959" stroke="#595959" stroke-width="0.7"/>
<path d="M622.6,176.0 L627.4,176.3 L626.5,171.7 L621.7,171.4 Z" fill="#1e1e1e" stroke="#1e1e1e" stroke-width="0.7"/>
<path d="M649.2,132.0 L651.8,130.9 L648.6,127.1 L646.4,128.1 Z" fill="#515151" stroke="#515151" stroke-width="0.7"/>
<path d="M654.8,135.0 L657.5,133.6 L654.1,129.6 L651.8,130.9 Z" fill="#4a4a4a" stroke="#4a4a4a" stroke-width="0.7"/>
<path d="M633.9,130.9 L636.5,130.6 L636.0,126.5 L634.0,126.8 Z" fill="#5a5a5a" stroke="#5a5a5a" stroke-width="0.7"/>
<path d="M636.5,130.6 L639.1,130.2 L638.0,126.2 L636.0,126.5 Z" fill="#595959" stroke="#595959" stroke-width="0.7"/>
<path d="M615.5,144.3 L618.7,145.0 L620.2,140.0 L617.3,139.3 Z" fill="#4c4c4c" stroke="#4c4c4c" stroke-width="0.7"/>
<path d="M613.1,154.7 L616.9,155.5 L617.6,150.3 L614.1,149.5 Z" fill="#3b3b3b" stroke="#3b3b3b" stroke-width="0.7"/>
<path d="M633.3,180.5 L638.3,180.3 L637.5,176.0 L632.4,176.3 Z" fill="#1e1e1e" stroke="#1e1e1e" stroke-width="0.7"/>
<path d="M614.1,149.5 L617.6,150.3 L618.7,145.0 L615.5,144.3 Z" fill="#444444" stroke="#444444" stroke-width="0.7"/>
<path d="M661.9,165.6 L666.2,163.7 L665.2,158.9 L661.0,160.8 Z" fill="#373737" stroke="#373737" stroke-width="0.7"/>
<path d="M657.9,171.9 L662.5,170.3 L661.9,165.6 L657.3,167.3 Z" fill="#2f2f2f" stroke="#2f2f2f" stroke-width="0.7"/>
<path d="M648.5,178.8 L653.4,177.7 L653.0,173.4 L647.9,174.5 Z" fill="#212121" stroke="#212121" stroke-width="0.7"/>
<path d="M663.9,154.0 L667.6,152.0 L665.6,147.1 L662.1,149.0 Z" fill="#434343" stroke="#434343" stroke-width="0.7"/>
<path d="M624.7,135.5 L627.6,135.7 L628.7,131.1 L626.3,130.9 Z" fill="#575757" stroke="#575757" stroke-width="0.7"/>
<path d="M657.5,139.5 L660.5,137.8 L657.5,133.6 L654.8,135.0 Z" fill="#4a4a4a" stroke="#4a4a4a" stroke-width="0.7"/>
<path d="M638.3,180.3 L643.4,179.7 L642.7,175.4 L637.5,176.0 Z" fill="#1e1e1e" stroke="#1e1e1e" stroke-width="0.7"/>
<path d="M620.2,140.0 L623.3,140.4 L624.7,135.5 L622.0,135.2 Z" fill="#525252" stroke="#525252" stroke-width="0.7"/>
<path d="M643.4,179.7 L648.5,178.8 L647.9,174.5 L642.7,175.4 Z" fill="#1e1e1e" stroke="#1e1e1e" stroke-width="0.7"/>
<path d="M646.3,133.0 L649.2,132.0 L646.4,128.1 L644.1,128.9 Z" fill="#515151" stroke="#515151" stroke-width="0.7"/>
<path d="M616.7,165.9 L621.2,166.5 L620.9,161.4 L616.6,160.8 Z" fill="#2a2a2a" stroke="#2a2a2a" stroke-width="0.7"/>
<path d="M662.1,149.0 L665.6,147.1 L663.3,142.4 L660.0,144.2 Z" fill="#464646" stroke="#464646" stroke-width="0.7"/>
<path d="M660.0,144.2 L663.3,142.4 L660.5,137.8 L657.5,139.5 Z" fill="#484848" stroke="#484848" stroke-width="0.7"/>
<path d="M627.4,176.3 L632.4,176.3 L631.6,171.7 L626.5,171.7 Z" fill="#1e1e1e" stroke="#1e1e1e" stroke-width="0.7"/>
<path d="M651.7,136.3 L654.8,135.0 L651.8,130.9 L649.2,132.0 Z" fill="#494949" stroke="#494949" stroke-width="0.7"/>
<path d="M627.6,135.7 L630.7,135.7 L631.3,131.1 L628.7,131.1 Z" fill="#565656" stroke="#565656" stroke-width="0.7"/>
<path d="M621.7,171.4 L626.5,171.7 L625.9,166.8 L621.2,166.5 Z" fill="#1e1e1e" stroke="#1e1e1e" stroke-width="0.7"/>
<path d="M643.4,133.9 L646.3,133.0 L644.1,128.9 L641.7,129.6 Z" fill="#525252" stroke="#525252" stroke-width="0.7"/>
<path d="M661.0,160.8 L665.2,158.9 L663.9,154.0 L659.8,155.8 Z" fill="#3c3c3c" stroke="#3c3c3c" stroke-width="0.7"/>
<path d="M618.7,145.0 L622.2,145.5 L623.3,140.4 L620.2,140.0 Z" fill="#4b4b4b" stroke="#4b4b4b" stroke-width="0.7"/>
<path d="M653.0,173.4 L657.9,171.9 L657.3,167.3 L652.4,168.7 Z" fill="#2b2b2b" stroke="#2b2b2b" stroke-width="0.7"/>
<path d="M616.6,160.8 L620.9,161.4 L621.0,156.1 L616.9,155.5 Z" fill="#303030" stroke="#303030" stroke-width="0.7"/>
<path d="M630.7,135.7 L633.8,135.5 L633.9,130.9 L631.3,131.1 Z" fill="#555555" stroke="#555555" stroke-width="0.7"/>
<path d="M623.3,140.4 L626.7,140.6 L627.6,135.7 L624.7,135.5 Z" fill="#515151" stroke="#515151" stroke-width="0.7"/>
<path d="M640.2,134.6 L643.4,133.9 L641.7,129.6 L639.1,130.2 Z" fill="#525252" stroke="#525252" stroke-width="0.7"/>
<path d="M657.3,167.3 L661.9,165.6 L661.0,160.8 L656.4,162.4 Z" fill="#343434" stroke="#343434" stroke-width="0.7"/>
<path d="M617.6,150.3 L621.5,150.8 L622.2,145.5 L618.7,145.0 Z" fill="#424242" stroke="#424242" stroke-width="0.7"/>
<path d="M616.9,155.5 L621.0,156.1 L621.5,150.8 L617.6,150.3 Z" fill="#393939" stroke="#393939" stroke-width="0.7"/>
<path d="M633.8,135.5 L637.1,135.2 L636.5,130.6 L633.9,130.9 Z" fill="#545454" stroke="#545454" stroke-width="0.7"/>
<path d="M637.1,135.2 L640.2,134.6 L639.1,130.2 L636.5,130.6 Z" fill="#535353" stroke="#535353" stroke-width="0.7"/>
<path d="M654.1,140.9 L657.5,139.5 L654.8,135.0 L651.7,136.3 Z" fill="#474747" stroke="#474747" stroke-width="0.7"/>
<path d="M632.4,176.3 L637.5,176.0 L636.8,171.4 L631.6,171.7 Z" fill="#1e1e1e" stroke="#1e1e1e" stroke-width="0.7"/>
<path d="M648.5,137.5 L651.7,136.3 L649.2,132.0 L646.3,133.0 Z" fill="#494949" stroke="#494949" stroke-width="0.7"/>
<path d="M659.8,155.8 L663.9,154.0 L662.1,149.0 L658.2,150.7 Z" fill="#404040" stroke="#404040" stroke-width="0.7"/>
<path d="M647.9,174.5 L653.0,173.4 L652.4,168.7 L647.3,169.9 Z" fill="#262626" stroke="#262626" stroke-width="0.7"/>
<path d="M621.2,166.5 L625.9,166.8 L625.6,161.6 L620.9,161.4 Z" fill="#242424" stroke="#242424" stroke-width="0.7"/>
<path d="M656.3,145.8 L660.0,144.2 L657.5,139.5 L654.1,140.9 Z" fill="#464646" stroke="#464646" stroke-width="0.7"/>
<path d="M637.5,176.0 L642.7,175.4 L642.0,170.8 L636.8,171.4 Z" fill="#1e1e1e" stroke="#1e1e1e" stroke-width="0.7"/>
<path d="M658.2,150.7 L662.1,149.0 L660.0,144.2 L656.3,145.8 Z" fill="#434343" stroke="#434343" stroke-width="0.7"/>
<path d="M626.5,171.7 L631.6,171.7 L630.9,166.8 L625.9,166.8 Z" fill="#1e1e1e" stroke="#1e1e1e" stroke-width="0.7"/>
<path d="M642.7,175.4 L647.9,174.5 L647.3,169.9 L642.0,170.8 Z" fill="#212121" stroke="#212121" stroke-width="0.7"/>
<path d="M626.7,140.6 L630.3,140.6 L630.7,135.7 L627.6,135.7 Z" fill="#4f4f4f" stroke="#4f4f4f" stroke-width="0.7"/>
<path d="M622.2,145.5 L626.1,145.8 L626.7,140.6 L623.3,140.4 Z" fill="#494949" stroke="#494949" stroke-width="0.7"/>
<path d="M645.0,138.5 L648.5,137.5 L646.3,133.0 L643.4,133.9 Z" fill="#4a4a4a" stroke="#4a4a4a" stroke-width="0.7"/>
<path d="M656.4,162.4 L661.0,160.8 L659.8,155.8 L655.3,157.4 Z" fill="#393939" stroke="#393939" stroke-width="0.7"/>
<path d="M652.4,168.7 L657.3,167.3 L656.4,162.4 L651.6,163.8 Z" fill="#303030" stroke="#303030" stroke-width="0.7"/>
<path d="M620.9,161.4 L625.6,161.6 L625.5,156.4 L621.0,156.1 Z" fill="#2e2e2e" stroke="#2e2e2e" stroke-width="0.7"/>
<path d="M650.5,142.3 L654.1,140.9 L651.7,136.3 L648.5,137.5 Z" fill="#454545" stroke="#454545" stroke-width="0.7"/>
<path d="M630.3,140.6 L634.0,140.4 L633.8,135.5 L630.7,135.7 Z" fill="#4e4e4e" stroke="#4e4e4e" stroke-width="0.7"/>
<path d="M621.5,150.8 L625.6,151.0 L626.1,145.8 L622.2,145.5 Z" fill="#414141" stroke="#414141" stroke-width="0.7"/>
<path d="M641.4,139.3 L645.0,138.5 L643.4,133.9 L640.2,134.6 Z" fill="#4b4b4b" stroke="#4b4b4b" stroke-width="0.7"/>
<path d="M621.0,156.1 L625.5,156.4 L625.6,151.0 L621.5,150.8 Z" fill="#383838" stroke="#383838" stroke-width="0.7"/>
<path d="M631.6,171.7 L636.8,171.4 L636.1,166.5 L630.9,166.8 Z" fill="#1e1e1e" stroke="#1e1e1e" stroke-width="0.7"/>
<path d="M634.0,140.4 L637.7,140.0 L637.1,135.2 L633.8,135.5 Z" fill="#4d4d4d" stroke="#4d4d4d" stroke-width="0.7"/>
<path d="M637.7,140.0 L641.4,139.3 L640.2,134.6 L637.1,135.2 Z" fill="#4c4c4c" stroke="#4c4c4c" stroke-width="0.7"/>
<path d="M655.3,157.4 L659.8,155.8 L658.2,150.7 L653.9,152.3 Z" fill="#3d3d3d" stroke="#3d3d3d" stroke-width="0.7"/>
<path d="M625.9,166.8 L630.9,166.8 L630.4,161.6 L625.6,161.6 Z" fill="#222222" stroke="#222222" stroke-width="0.7"/>
<path d="M626.1,145.8 L630.1,145.8 L630.3,140.6 L626.7,140.6 Z" fill="#484848" stroke="#484848" stroke-width="0.7"/>
<path d="M652.3,147.2 L656.3,145.8 L654.1,140.9 L650.5,142.3 Z" fill="#434343" stroke="#434343" stroke-width="0.7"/>
<path d="M647.3,169.9 L652.4,168.7 L651.6,163.8 L646.5,165.0 Z" fill="#2b2b2b" stroke="#2b2b2b" stroke-width="0.7"/>
<path d="M653.9,152.3 L658.2,150.7 L656.3,145.8 L652.3,147.2 Z" fill="#404040" stroke="#404040" stroke-width="0.7"/>
<path d="M646.6,143.4 L650.5,142.3 L648.5,137.5 L645.0,138.5 Z" fill="#424242" stroke="#424242" stroke-width="0.7"/>
<path d="M636.8,171.4 L642.0,170.8 L641.3,165.9 L636.1,166.5 Z" fill="#212121" stroke="#212121" stroke-width="0.7"/>
<path d="M651.6,163.8 L656.4,162.4 L655.3,157.4 L650.5,158.8 Z" fill="#343434" stroke="#343434" stroke-width="0.7"/>
<path d="M642.0,170.8 L647.3,169.9 L646.5,165.0 L641.3,165.9 Z" fill="#262626" stroke="#262626" stroke-width="0.7"/>
<path d="M625.6,161.6 L630.4,161.6 L630.1,156.4 L625.5,156.4 Z" fill="#2c2c2c" stroke="#2c2c2c" stroke-width="0.7"/>
<path d="M625.6,151.0 L630.0,151.0 L630.1,145.8 L626.1,145.8 Z" fill="#3f3f3f" stroke="#3f3f3f" stroke-width="0.7"/>
<path d="M630.1,145.8 L634.2,145.5 L634.0,140.4 L630.3,140.6 Z" fill="#464646" stroke="#464646" stroke-width="0.7"/>
<path d="M625.5,156.4 L630.1,156.4 L630.0,151.0 L625.6,151.0 Z" fill="#363636" stroke="#363636" stroke-width="0.7"/>
<path d="M642.5,144.3 L646.6,143.4 L645.0,138.5 L641.4,139.3 Z" fill="#434343" stroke="#434343" stroke-width="0.7"/>
<path d="M630.9,166.8 L636.1,166.5 L635.5,161.4 L630.4,161.6 Z" fill="#212121" stroke="#212121" stroke-width="0.7"/>
<path d="M648.0,148.5 L652.3,147.2 L650.5,142.3 L646.6,143.4 Z" fill="#3f3f3f" stroke="#3f3f3f" stroke-width="0.7"/>
<path d="M650.5,158.8 L655.3,157.4 L653.9,152.3 L649.4,153.6 Z" fill="#393939" stroke="#393939" stroke-width="0.7"/>
<path d="M634.2,145.5 L638.3,145.0 L637.7,140.0 L634.0,140.4 Z" fill="#454545" stroke="#454545" stroke-width="0.7"/>
<path d="M646.5,165.0 L651.6,163.8 L650.5,158.8 L645.6,159.9 Z" fill="#303030" stroke="#303030" stroke-width="0.7"/>
<path d="M638.3,145.0 L642.5,144.3 L641.4,139.3 L637.7,140.0 Z" fill="#444444" stroke="#444444" stroke-width="0.7"/>
<path d="M649.4,153.6 L653.9,152.3 L652.3,147.2 L648.0,148.5 Z" fill="#3c3c3c" stroke="#3c3c3c" stroke-width="0.7"/>
<path d="M636.1,166.5 L641.3,165.9 L640.5,160.8 L635.5,161.4 Z" fill="#262626" stroke="#262626" stroke-width="0.7"/>
<path d="M630.0,151.0 L634.5,150.8 L634.2,145.5 L630.1,145.8 Z" fill="#3e3e3e" stroke="#3e3e3e" stroke-width="0.7"/>
<path d="M641.3,165.9 L646.5,165.0 L645.6,159.9 L640.5,160.8 Z" fill="#2b2b2b" stroke="#2b2b2b" stroke-width="0.7"/>
<path d="M630.4,161.6 L635.5,161.4 L634.9,156.1 L630.1,156.4 Z" fill="#2a2a2a" stroke="#2a2a2a" stroke-width="0.7"/>
<path d="M643.6,149.5 L648.0,148.5 L646.6,143.4 L642.5,144.3 Z" fill="#3b3b3b" stroke="#3b3b3b" stroke-width="0.7"/>
<path d="M630.1,156.4 L634.9,156.1 L634.5,150.8 L630.0,151.0 Z" fill="#343434" stroke="#343434" stroke-width="0.7"/>
<path d="M645.6,159.9 L650.5,158.8 L649.4,153.6 L644.6,154.7 Z" fill="#343434" stroke="#343434" stroke-width="0.7"/>
<path d="M634.5,150.8 L639.1,150.3 L638.3,145.0 L634.2,145.5 Z" fill="#3c3c3c" stroke="#3c3c3c" stroke-width="0.7"/>
<path d="M639.1,150.3 L643.6,149.5 L642.5,144.3 L638.3,145.0 Z" fill="#3b3b3b" stroke="#3b3b3b" stroke-width="0.7"/>
<path d="M644.6,154.7 L649.4,153.6 L648.0,148.5 L643.6,149.5 Z" fill="#383838" stroke="#383838" stroke-width="0.7"/>
<path d="M635.5,161.4 L640.5,160.8 L639.8,155.5 L634.9,156.1 Z" fill="#2b2b2b" stroke="#2b2b2b" stroke-width="0.7"/>
<path d="M640.5,160.8 L645.6,159.9 L644.6,154.7 L639.8,155.5 Z" fill="#303030" stroke="#303030" stroke-width="0.7"/>
<path d="M634.9,156.1 L639.8,155.5 L639.1,150.3 L634.5,150.8 Z" fill="#333333" stroke="#333333" stroke-width="0.7"/>
<path d="M639.8,155.5 L644.6,154.7 L643.6,149.5 L639.1,150.3 Z" fill="#343434" stroke="#343434" stroke-width="0.7"/>
<path d="M676.6,172.7 A40.7,40.7 0 1 0 611.4,182.2" fill="none" stroke="#e8e8e8" stroke-width="1.2" stroke-dasharray="3 1.5"/>
<path d="M635.0,117.2 L634.0,117.1 L633.0,117.1 L632.0,117.1 L631.0,117.1 L630.1,117.1 L629.1,117.1 L628.2,117.2 L627.2,117.4 L626.3,117.5 L625.3,117.7 L624.4,117.9 L623.5,118.1 L622.7,118.4 L621.8,118.7 L620.9,119.0 L620.1,119.3 L619.3,119.7 L618.5,120.1 L617.7,120.5 L616.9,121.0 L616.1,121.5 L615.4,122.0 L614.7,122.5 L614.0,123.0 L613.3,123.6 L612.7,124.2 L612.0,124.8 L611.4,125.5 L610.9,126.2 L610.3,126.9" stroke="#9c5f0e" stroke-width="1.35" fill="none" stroke-linejoin="round" />
<defs><linearGradient id="cg2" gradientUnits="userSpaceOnUse" x1="615.9" y1="212.6" x2="681.6" y2="202.6"><stop offset="0.000" stop-color="#575757"/><stop offset="0.021" stop-color="#4d4d4d"/><stop offset="0.042" stop-color="#474747"/><stop offset="0.062" stop-color="#424242"/><stop offset="0.083" stop-color="#3d3d3d"/><stop offset="0.104" stop-color="#393939"/><stop offset="0.125" stop-color="#343434"/><stop offset="0.146" stop-color="#303030"/><stop offset="0.167" stop-color="#2b2b2b"/><stop offset="0.188" stop-color="#272727"/><stop offset="0.208" stop-color="#232323"/><stop offset="0.229" stop-color="#202020"/><stop offset="0.250" stop-color="#1e1e1e"/><stop offset="0.271" stop-color="#1e1e1e"/><stop offset="0.292" stop-color="#1e1e1e"/><stop offset="0.312" stop-color="#1e1e1e"/><stop offset="0.333" stop-color="#1e1e1e"/><stop offset="0.354" stop-color="#1e1e1e"/><stop offset="0.375" stop-color="#1e1e1e"/><stop offset="0.396" stop-color="#1e1e1e"/><stop offset="0.417" stop-color="#1e1e1e"/><stop offset="0.438" stop-color="#1e1e1e"/><stop offset="0.458" stop-color="#1f1f1f"/><stop offset="0.479" stop-color="#212121"/><stop offset="0.500" stop-color="#222222"/><stop offset="0.521" stop-color="#242424"/><stop offset="0.542" stop-color="#252525"/><stop offset="0.562" stop-color="#272727"/><stop offset="0.583" stop-color="#292929"/><stop offset="0.604" stop-color="#2a2a2a"/><stop offset="0.625" stop-color="#2c2c2c"/><stop offset="0.646" stop-color="#2d2d2d"/><stop offset="0.667" stop-color="#2e2e2e"/><stop offset="0.688" stop-color="#303030"/><stop offset="0.708" stop-color="#313131"/><stop offset="0.729" stop-color="#333333"/><stop offset="0.750" stop-color="#343434"/><stop offset="0.771" stop-color="#353535"/><stop offset="0.792" stop-color="#363636"/><stop offset="0.812" stop-color="#383838"/><stop offset="0.833" stop-color="#393939"/><stop offset="0.854" stop-color="#3a3a3a"/><stop offset="0.875" stop-color="#3b3b3b"/><stop offset="0.896" stop-color="#3c3c3c"/><stop offset="0.917" stop-color="#3d3d3d"/><stop offset="0.938" stop-color="#3e3e3e"/><stop offset="0.958" stop-color="#3e3e3e"/><stop offset="0.979" stop-color="#3e3e3e"/><stop offset="1.000" stop-color="#3c3c3c"/></linearGradient></defs>
<path d="M615.9,212.6 L616.0,213.3 L616.3,214.0 L616.6,214.7 L617.0,215.4 L617.5,216.0 L618.1,216.6 L618.8,217.2 L619.6,217.8 L620.4,218.3 L621.3,218.8 L622.3,219.3 L623.4,219.7 L624.5,220.2 L625.7,220.5 L627.0,220.9 L628.3,221.2 L629.7,221.5 L631.1,221.7 L632.6,221.9 L634.1,222.0 L635.6,222.1 L637.2,222.2 L638.9,222.2 L640.5,222.2 L642.2,222.2 L643.9,222.1 L645.6,222.0 L647.3,221.8 L649.1,221.6 L650.8,221.3 L652.5,221.0 L654.2,220.7 L655.9,220.4 L657.6,220.0 L659.2,219.5 L660.8,219.1 L662.4,218.6 L664.0,218.1 L665.5,217.5 L666.9,216.9 L668.3,216.3 L669.7,215.7 L671.0,215.0 L672.2,214.4 L673.4,213.7 L674.5,213.0 L675.5,212.3 L676.5,211.5 L677.4,210.8 L678.2,210.0 L678.9,209.2 L679.6,208.5 L680.1,207.7 L680.6,206.9 L681.0,206.2 L681.3,205.4 L681.5,204.6 L681.6,203.9 L681.6,203.1 L681.6,202.4 L676.9,171.9 L677.0,172.6 L677.0,173.3 L676.8,174.1 L676.6,174.9 L676.3,175.6 L675.9,176.4 L675.5,177.2 L674.9,177.9 L674.3,178.7 L673.5,179.5 L672.7,180.2 L671.9,181.0 L670.9,181.7 L669.9,182.4 L668.8,183.1 L667.6,183.8 L666.3,184.5 L665.0,185.2 L663.7,185.8 L662.3,186.4 L660.8,187.0 L659.3,187.5 L657.8,188.1 L656.2,188.6 L654.6,189.0 L652.9,189.4 L651.2,189.8 L649.6,190.2 L647.9,190.5 L646.1,190.8 L644.4,191.0 L642.7,191.3 L641.0,191.4 L639.3,191.6 L637.6,191.6 L635.9,191.7 L634.2,191.7 L632.6,191.7 L631.0,191.6 L629.4,191.5 L627.9,191.3 L626.4,191.1 L625.0,190.9 L623.6,190.7 L622.3,190.3 L621.1,190.0 L619.9,189.6 L618.7,189.2 L617.7,188.8 L616.7,188.3 L615.8,187.8 L614.9,187.2 L614.2,186.7 L613.5,186.1 L612.9,185.5 L612.4,184.8 L612.0,184.2 L611.6,183.5 L611.4,182.8 L611.3,182.1 Z" fill="url(#cg2)"/>
<path d="M615.9,212.6 L616.0,213.3 L616.3,214.0 L616.6,214.7 L617.0,215.4 L617.5,216.0 L618.1,216.6 L618.8,217.2 L619.6,217.8 L620.4,218.3 L621.3,218.8 L622.3,219.3 L623.4,219.7 L624.5,220.2 L625.7,220.5 L627.0,220.9 L628.3,221.2 L629.7,221.5 L631.1,221.7 L632.6,221.9 L634.1,222.0 L635.6,222.1 L637.2,222.2 L638.9,222.2 L640.5,222.2 L642.2,222.2 L643.9,222.1 L645.6,222.0 L647.3,221.8 L649.1,221.6 L650.8,221.3 L652.5,221.0 L654.2,220.7 L655.9,220.4 L657.6,220.0 L659.2,219.5 L660.8,219.1 L662.4,218.6 L664.0,218.1 L665.5,217.5 L666.9,216.9 L668.3,216.3 L669.7,215.7 L671.0,215.0 L672.2,214.4 L673.4,213.7 L674.5,213.0 L675.5,212.3 L676.5,211.5 L677.4,210.8 L678.2,210.0 L678.9,209.2 L679.6,208.5 L680.1,207.7 L680.6,206.9 L681.0,206.2 L681.3,205.4 L681.5,204.6 L681.6,203.9 L681.6,203.1 L681.6,202.4" stroke="#9c5f0e" stroke-width="1.35" fill="none" stroke-linejoin="round" />
<path d="M611.3,182.1 L611.4,182.8 L611.6,183.5 L612.0,184.2 L612.4,184.8 L612.9,185.5 L613.5,186.1 L614.2,186.7 L614.9,187.2 L615.8,187.8 L616.7,188.3 L617.7,188.8 L618.7,189.2 L619.9,189.6 L621.1,190.0 L622.3,190.3 L623.6,190.7 L625.0,190.9 L626.4,191.1 L627.9,191.3 L629.4,191.5 L631.0,191.6 L632.6,191.7 L634.2,191.7 L635.9,191.7 L637.6,191.6 L639.3,191.6 L641.0,191.4 L642.7,191.3 L644.4,191.0 L646.1,190.8 L647.9,190.5 L649.6,190.2 L651.2,189.8 L652.9,189.4 L654.6,189.0 L656.2,188.6 L657.8,188.1 L659.3,187.5 L660.8,187.0 L662.3,186.4 L663.7,185.8 L665.0,185.2 L666.3,184.5 L667.6,183.8 L668.8,183.1 L669.9,182.4 L670.9,181.7 L671.9,181.0 L672.7,180.2 L673.5,179.5 L674.3,178.7 L674.9,177.9 L675.5,177.2 L675.9,176.4 L676.3,175.6 L676.6,174.9 L676.8,174.1 L677.0,173.3 L677.0,172.6 L676.9,171.9" stroke="#9c5f0e" stroke-width="1.35" fill="none" stroke-linejoin="round" stroke-dasharray="5 1.5"/>
<path d="M650.2,545.0 L600.0,215.0" stroke="#e0e0e0" stroke-width="1.15" fill="none"  stroke-dasharray="4.5 2" stroke-linecap="butt"/>
<path d="M747.6,529.9 L697.4,199.9" stroke="#e0e0e0" stroke-width="1.15" fill="none"  stroke-dasharray="4.5 2" stroke-linecap="butt"/>
<path d="M615.9,212.6 L611.3,182.1" stroke="#e0e0e0" stroke-width="1.15" fill="none"  stroke-dasharray="4.5 2" stroke-linecap="butt"/>
<path d="M681.6,202.4 L676.9,171.9" stroke="#e0e0e0" stroke-width="1.15" fill="none"  stroke-dasharray="4.5 2" stroke-linecap="butt"/>
<defs><linearGradient id="tg2" gradientUnits="userSpaceOnUse" x1="1025.8" y1="463.9" x2="1014.3" y2="580.1"><stop offset="0.0000" stop-color="#616161"/><stop offset="0.0009" stop-color="#636363"/><stop offset="0.0036" stop-color="#656565"/><stop offset="0.0082" stop-color="#666666"/><stop offset="0.0145" stop-color="#676767"/><stop offset="0.0225" stop-color="#696969"/><stop offset="0.0324" stop-color="#696969"/><stop offset="0.0439" stop-color="#6a6a6a"/><stop offset="0.0572" stop-color="#6b6b6b"/><stop offset="0.0721" stop-color="#6b6b6b"/><stop offset="0.0886" stop-color="#6b6b6b"/><stop offset="0.1067" stop-color="#6a6a6a"/><stop offset="0.1263" stop-color="#6a6a6a"/><stop offset="0.1474" stop-color="#696969"/><stop offset="0.1699" stop-color="#686868"/><stop offset="0.1937" stop-color="#676767"/><stop offset="0.2189" stop-color="#666666"/><stop offset="0.2452" stop-color="#646464"/><stop offset="0.2727" stop-color="#636363"/><stop offset="0.3013" stop-color="#616161"/><stop offset="0.3310" stop-color="#5f5f5f"/><stop offset="0.3615" stop-color="#5c5c5c"/><stop offset="0.3929" stop-color="#5a5a5a"/><stop offset="0.4250" stop-color="#575757"/><stop offset="0.4578" stop-color="#545454"/><stop offset="0.4912" stop-color="#515151"/><stop offset="0.5251" stop-color="#4e4e4e"/><stop offset="0.5594" stop-color="#4a4a4a"/><stop offset="0.5940" stop-color="#474747"/><stop offset="0.6288" stop-color="#434343"/><stop offset="0.6638" stop-color="#404040"/><stop offset="0.6988" stop-color="#3c3c3c"/><stop offset="0.7337" stop-color="#383838"/><stop offset="0.7685" stop-color="#343434"/><stop offset="0.8030" stop-color="#303030"/><stop offset="0.8372" stop-color="#2b2b2b"/><stop offset="0.8710" stop-color="#282828"/><stop offset="0.9042" stop-color="#262626"/><stop offset="0.9369" stop-color="#242424"/><stop offset="0.9688" stop-color="#222222"/><stop offset="1.0000" stop-color="#202020"/></linearGradient></defs>
<path d="M1027.8,464.2 L1026.4,464.0 L1025.1,463.9 L1023.8,463.8 L1022.5,463.9 L1021.1,464.1 L1019.8,464.3 L1018.4,464.7 L1017.1,465.2 L1015.8,465.7 L1014.4,466.4 L1013.1,467.1 L1011.7,468.0 L1010.4,468.9 L1009.1,469.9 L1007.8,471.0 L1006.5,472.2 L1005.2,473.5 L1004.0,474.9 L1002.7,476.4 L1001.5,477.9 L1000.3,479.6 L999.1,481.3 L998.0,483.1 L996.8,484.9 L995.7,486.8 L994.6,488.8 L993.6,490.9 L992.6,493.0 L991.6,495.2 L990.6,497.5 L989.7,499.8 L988.8,502.2 L988.0,504.6 L987.1,507.0 L986.4,509.5 L985.6,512.1 L984.9,514.7 L984.3,517.3 L983.7,519.9 L983.1,522.6 L982.6,525.3 L982.1,528.0 L981.6,530.8 L981.2,533.6 L980.9,536.3 L980.6,539.1 L980.3,541.9 L980.1,544.7 L980.0,547.4 L979.9,550.2 L979.8,553.0 L979.8,555.7 L979.8,558.5 L979.9,561.2 L980.0,563.9 L980.2,566.5 L980.4,569.2 L980.7,571.8 L981.0,574.3 L981.3,576.9 L955.2,574.3 L954.8,571.7 L954.5,569.2 L954.2,566.6 L954.0,563.9 L953.8,561.3 L953.7,558.6 L953.6,555.9 L953.6,553.1 L953.6,550.4 L953.7,547.6 L953.8,544.8 L954.0,542.1 L954.2,539.3 L954.4,536.5 L954.7,533.7 L955.1,531.0 L955.5,528.2 L955.9,525.5 L956.4,522.7 L956.9,520.0 L957.5,517.3 L958.1,514.7 L958.8,512.1 L959.5,509.5 L960.2,506.9 L961.0,504.4 L961.8,502.0 L962.6,499.6 L963.5,497.2 L964.4,494.9 L965.4,492.6 L966.4,490.5 L967.4,488.3 L968.5,486.3 L969.5,484.3 L970.7,482.3 L971.8,480.5 L972.9,478.7 L974.1,477.0 L975.3,475.3 L976.6,473.8 L977.8,472.3 L979.1,470.9 L980.3,469.7 L981.6,468.4 L982.9,467.3 L984.3,466.3 L985.6,465.4 L986.9,464.5 L988.2,463.8 L989.6,463.1 L990.9,462.6 L992.3,462.1 L993.6,461.7 L995.0,461.5 L996.3,461.3 L997.6,461.2 L999.0,461.3 L1000.3,461.4 L1001.6,461.6 Z" fill="url(#tg2)"/>
<path d="M993.5,657.2 L981.3,576.9 L980.9,573.3 L980.5,569.7 L980.2,566.1 L979.9,562.4 L979.8,558.6 L979.8,554.8 L979.8,551.0 L980.0,547.1 L980.2,543.3 L980.6,539.4 L981.0,535.5 L981.5,531.7 L982.1,527.9 L982.8,524.1 L983.6,520.4 L984.4,516.7 L985.3,513.1 L986.4,509.5 L987.4,506.1 L988.6,502.7 L989.8,499.4 L991.1,496.2 L992.5,493.2 L993.9,490.2 L995.4,487.4 L996.9,484.7 L998.5,482.2 L1000.2,479.8 L1001.8,477.5 L1003.6,475.4 L1005.3,473.5 L1007.1,471.7 L1008.9,470.1 L1010.7,468.7 L1012.6,467.4 L1014.4,466.4 L1016.3,465.5 L1018.1,464.8 L1020.0,464.3 L1021.9,464.0 L1023.7,463.8 L1025.6,463.9 L1027.4,464.1 L1029.2,464.6 L1031.0,465.2 L1032.7,466.0 L1034.4,467.0 L1036.1,468.2 L1037.7,469.6 L1039.3,471.1 L1040.8,472.8 L1042.2,474.7 L1043.6,476.7 L1045.0,478.9 L1046.3,481.3 L1047.5,483.8 L1048.6,486.4 L1049.7,489.2 L1050.7,492.1 L1051.6,495.1 L1052.4,498.2 L1053.1,501.5 L1053.8,504.8 L1054.4,508.3 L1066.6,588.6 Z" fill="#424242"/>
<clipPath id="hc3000"><path d="M1028.1,532.9 L1027.8,531.0 L1027.3,529.2 L1026.8,527.6 L1026.2,526.0 L1025.5,524.7 L1024.7,523.5 L1023.9,522.5 L1023.0,521.7 L1022.0,521.1 L1021.0,520.6 L1020.0,520.5 L1019.0,520.5 L1017.9,520.7 L1016.9,521.1 L1015.8,521.8 L1014.8,522.6 L1013.8,523.7 L1012.9,524.9 L1012.0,526.3 L1011.1,527.9 L1010.3,529.5 L1009.6,531.4 L1009.0,533.3 L1008.5,535.3 L1008.0,537.4 L1007.6,539.5 L1007.4,541.7 L1007.2,543.8 L1007.2,546.0 L1007.2,548.1 L1007.3,550.2 L1007.6,552.2 L1007.9,554.1 L1008.4,555.9 L1008.9,557.6 L1009.5,559.1 L1010.2,560.4 L1011.0,561.6 L1011.8,562.6 L1012.7,563.5 L1013.7,564.1 L1014.7,564.5 L1015.7,564.7 L1016.7,564.6 L1017.8,564.4 L1018.8,564.0 L1019.9,563.3 L1020.9,562.5 L1021.9,561.4 L1022.8,560.2 L1023.7,558.8 L1024.6,557.3 L1025.4,555.6 L1026.1,553.8 L1026.7,551.8 L1027.3,549.8 L1027.7,547.7 L1028.1,545.6 L1028.3,543.4 L1028.5,541.3 L1028.6,539.1 L1028.5,537.0 L1028.4,534.9 L1028.1,532.9 Z"/></clipPath>
<g clip-path="url(#hc3000)">
<path d="M1028.1,532.9 L1027.8,531.0 L1027.3,529.2 L1026.8,527.6 L1026.2,526.0 L1025.5,524.7 L1024.7,523.5 L1023.9,522.5 L1023.0,521.7 L1022.0,521.1 L1021.0,520.6 L1020.0,520.5 L1019.0,520.5 L1017.9,520.7 L1016.9,521.1 L1015.8,521.8 L1014.8,522.6 L1013.8,523.7 L1012.9,524.9 L1012.0,526.3 L1011.1,527.9 L1010.3,529.5 L1009.6,531.4 L1009.0,533.3 L1008.5,535.3 L1008.0,537.4 L1007.6,539.5 L1007.4,541.7 L1007.2,543.8 L1007.2,546.0 L1007.2,548.1 L1007.3,550.2 L1007.6,552.2 L1007.9,554.1 L1008.4,555.9 L1008.9,557.6 L1009.5,559.1 L1010.2,560.4 L1011.0,561.6 L1011.8,562.6 L1012.7,563.5 L1013.7,564.1 L1014.7,564.5 L1015.7,564.7 L1016.7,564.6 L1017.8,564.4 L1018.8,564.0 L1019.9,563.3 L1020.9,562.5 L1021.9,561.4 L1022.8,560.2 L1023.7,558.8 L1024.6,557.3 L1025.4,555.6 L1026.1,553.8 L1026.7,551.8 L1027.3,549.8 L1027.7,547.7 L1028.1,545.6 L1028.3,543.4 L1028.5,541.3 L1028.6,539.1 L1028.5,537.0 L1028.4,534.9 L1028.1,532.9 Z" fill="#181818"/>
<path d="M1028.1,532.9 L1027.6,530.4 L1001.5,527.8 L1001.9,530.3 Z" fill="#1e1e1e" stroke="#1e1e1e" stroke-width="0.7"/>
<path d="M1027.6,530.4 L1027.0,528.1 L1000.8,525.5 L1001.5,527.8 Z" fill="#1e1e1e" stroke="#1e1e1e" stroke-width="0.7"/>
<path d="M1027.0,528.1 L1026.2,526.0 L1000.0,523.4 L1000.8,525.5 Z" fill="#1e1e1e" stroke="#1e1e1e" stroke-width="0.7"/>
<path d="M1026.2,526.0 L1025.2,524.3 L999.1,521.7 L1000.0,523.4 Z" fill="#1e1e1e" stroke="#1e1e1e" stroke-width="0.7"/>
<path d="M1025.2,524.3 L1024.2,522.8 L998.0,520.2 L999.1,521.7 Z" fill="#1e1e1e" stroke="#1e1e1e" stroke-width="0.7"/>
<path d="M1024.2,522.8 L1023.0,521.7 L996.8,519.1 L998.0,520.2 Z" fill="#1e1e1e" stroke="#1e1e1e" stroke-width="0.7"/>
<path d="M1023.0,521.7 L1021.7,520.9 L995.5,518.3 L996.8,519.1 Z" fill="#1e1e1e" stroke="#1e1e1e" stroke-width="0.7"/>
<path d="M1021.7,520.9 L1020.4,520.5 L994.2,517.9 L995.5,518.3 Z" fill="#1e1e1e" stroke="#1e1e1e" stroke-width="0.7"/>
<path d="M1020.4,520.5 L1019.0,520.5 L992.8,517.9 L994.2,517.9 Z" fill="#1e1e1e" stroke="#1e1e1e" stroke-width="0.7"/>
<path d="M1019.0,520.5 L1017.6,520.8 L991.4,518.2 L992.8,517.9 Z" fill="#1e1e1e" stroke="#1e1e1e" stroke-width="0.7"/>
<path d="M1017.6,520.8 L1016.2,521.6 L990.0,519.0 L991.4,518.2 Z" fill="#1e1e1e" stroke="#1e1e1e" stroke-width="0.7"/>
<path d="M1016.2,521.6 L1014.8,522.6 L988.7,520.1 L990.0,519.0 Z" fill="#1e1e1e" stroke="#1e1e1e" stroke-width="0.7"/>
<path d="M1014.8,522.6 L1013.5,524.1 L987.3,521.5 L988.7,520.1 Z" fill="#1e1e1e" stroke="#1e1e1e" stroke-width="0.7"/>
<path d="M1013.5,524.1 L1012.3,525.8 L986.1,523.2 L987.3,521.5 Z" fill="#1e1e1e" stroke="#1e1e1e" stroke-width="0.7"/>
<path d="M1012.3,525.8 L1011.1,527.9 L985.0,525.3 L986.1,523.2 Z" fill="#1e1e1e" stroke="#1e1e1e" stroke-width="0.7"/>
<path d="M1011.1,527.9 L1010.1,530.1 L983.9,527.5 L985.0,525.3 Z" fill="#1e1e1e" stroke="#1e1e1e" stroke-width="0.7"/>
<path d="M1010.1,530.1 L1009.2,532.6 L983.0,530.0 L983.9,527.5 Z" fill="#1e1e1e" stroke="#1e1e1e" stroke-width="0.7"/>
<path d="M1009.2,532.6 L1008.5,535.3 L982.3,532.7 L983.0,530.0 Z" fill="#1e1e1e" stroke="#1e1e1e" stroke-width="0.7"/>
<path d="M1008.5,535.3 L1007.9,538.1 L981.7,535.5 L982.3,532.7 Z" fill="#1e1e1e" stroke="#1e1e1e" stroke-width="0.7"/>
<path d="M1007.9,538.1 L1007.5,541.0 L981.3,538.4 L981.7,535.5 Z" fill="#1e1e1e" stroke="#1e1e1e" stroke-width="0.7"/>
<path d="M1007.5,541.0 L1007.2,543.8 L981.0,541.2 L981.3,538.4 Z" fill="#1e1e1e" stroke="#1e1e1e" stroke-width="0.7"/>
<path d="M1007.2,543.8 L1007.2,546.7 L981.0,544.1 L981.0,541.2 Z" fill="#1e1e1e" stroke="#1e1e1e" stroke-width="0.7"/>
<path d="M1007.2,546.7 L1007.3,549.5 L981.1,546.9 L981.0,544.1 Z" fill="#1e1e1e" stroke="#1e1e1e" stroke-width="0.7"/>
<path d="M1007.3,549.5 L1007.6,552.2 L981.4,549.6 L981.1,546.9 Z" fill="#1e1e1e" stroke="#1e1e1e" stroke-width="0.7"/>
<path d="M1007.6,552.2 L1008.1,554.7 L981.9,552.1 L981.4,549.6 Z" fill="#222222" stroke="#222222" stroke-width="0.7"/>
<path d="M1008.1,554.7 L1008.7,557.0 L982.6,554.4 L981.9,552.1 Z" fill="#272727" stroke="#272727" stroke-width="0.7"/>
<path d="M1008.7,557.0 L1009.5,559.1 L983.4,556.5 L982.6,554.4 Z" fill="#303030" stroke="#303030" stroke-width="0.7"/>
<path d="M1009.5,559.1 L1010.5,560.9 L984.3,558.3 L983.4,556.5 Z" fill="#3a3a3a" stroke="#3a3a3a" stroke-width="0.7"/>
<path d="M1010.5,560.9 L1011.6,562.3 L985.4,559.7 L984.3,558.3 Z" fill="#434343" stroke="#434343" stroke-width="0.7"/>
<path d="M1011.6,562.3 L1012.7,563.5 L986.6,560.9 L985.4,559.7 Z" fill="#4b4b4b" stroke="#4b4b4b" stroke-width="0.7"/>
<path d="M1012.7,563.5 L1014.0,564.2 L987.8,561.6 L986.6,560.9 Z" fill="#525252" stroke="#525252" stroke-width="0.7"/>
<path d="M1014.0,564.2 L1015.3,564.6 L989.2,562.0 L987.8,561.6 Z" fill="#595959" stroke="#595959" stroke-width="0.7"/>
<path d="M1015.3,564.6 L1016.7,564.6 L990.6,562.1 L989.2,562.0 Z" fill="#5e5e5e" stroke="#5e5e5e" stroke-width="0.7"/>
<path d="M1016.7,564.6 L1018.1,564.3 L992.0,561.7 L990.6,562.1 Z" fill="#626262" stroke="#626262" stroke-width="0.7"/>
<path d="M1018.1,564.3 L1019.5,563.6 L993.3,561.0 L992.0,561.7 Z" fill="#646464" stroke="#646464" stroke-width="0.7"/>
<path d="M1019.5,563.6 L1020.9,562.5 L994.7,559.9 L993.3,561.0 Z" fill="#666666" stroke="#666666" stroke-width="0.7"/>
<path d="M1020.9,562.5 L1022.2,561.0 L996.0,558.5 L994.7,559.9 Z" fill="#656565" stroke="#656565" stroke-width="0.7"/>
<path d="M1022.2,561.0 L1023.4,559.3 L997.3,556.7 L996.0,558.5 Z" fill="#646464" stroke="#646464" stroke-width="0.7"/>
<path d="M1023.4,559.3 L1024.6,557.3 L998.4,554.7 L997.3,556.7 Z" fill="#616161" stroke="#616161" stroke-width="0.7"/>
<path d="M1024.6,557.3 L1025.6,555.0 L999.4,552.4 L998.4,554.7 Z" fill="#5d5d5d" stroke="#5d5d5d" stroke-width="0.7"/>
<path d="M1025.6,555.0 L1026.5,552.5 L1000.3,549.9 L999.4,552.4 Z" fill="#585858" stroke="#585858" stroke-width="0.7"/>
<path d="M1026.5,552.5 L1027.3,549.8 L1001.1,547.2 L1000.3,549.9 Z" fill="#515151" stroke="#515151" stroke-width="0.7"/>
<path d="M1027.3,549.8 L1027.8,547.0 L1001.7,544.4 L1001.1,547.2 Z" fill="#4a4a4a" stroke="#4a4a4a" stroke-width="0.7"/>
<path d="M1027.8,547.0 L1028.3,544.2 L1002.1,541.6 L1001.7,544.4 Z" fill="#414141" stroke="#414141" stroke-width="0.7"/>
<path d="M1028.3,544.2 L1028.5,541.3 L1002.3,538.7 L1002.1,541.6 Z" fill="#383838" stroke="#383838" stroke-width="0.7"/>
<path d="M1028.5,541.3 L1028.6,538.4 L1002.4,535.8 L1002.3,538.7 Z" fill="#2f2f2f" stroke="#2f2f2f" stroke-width="0.7"/>
<path d="M1028.6,538.4 L1028.4,535.6 L1002.3,533.0 L1002.4,535.8 Z" fill="#262626" stroke="#262626" stroke-width="0.7"/>
<path d="M1028.4,535.6 L1028.1,532.9 L1001.9,530.3 L1002.3,533.0 Z" fill="#212121" stroke="#212121" stroke-width="0.7"/>
</g>
<path d="M343.3,566.2 L989.5,630.3" stroke="#9c5f0e" stroke-width="1.35" fill="none" stroke-linecap="round" />
<path d="M989.5,630.3 L1062.5,561.7" stroke="#9c5f0e" stroke-width="1.35" fill="none" stroke-linecap="round" />
<path d="M347.4,593.1 L967.4,654.6" stroke="#9c5f0e" stroke-width="1.35" fill="none" stroke-linecap="round" />
<path d="M347.4,593.1 L335.2,512.8 L334.8,509.7 L334.4,506.6 L334.1,503.4 L333.9,500.1 L333.7,496.8 L333.7,493.5 L333.7,490.2 L333.7,486.8 L333.8,483.4 L334.0,480.1 L334.3,476.7 L334.7,473.3 L335.1,469.9 L335.5,466.5 L336.1,463.2 L336.7,459.9 L337.4,456.6 L338.1,453.4 L338.9,450.2 L339.8,447.0 L340.7,444.0 L341.7,440.9 L342.7,438.0 L343.8,435.1 L344.9,432.3 L346.1,429.6 L347.4,427.0 L348.6,424.5 L350.0,422.1 L351.3,419.8 L352.7,417.6 L354.2,415.5 L355.7,413.5 L357.2,411.6 L358.7,409.9 L360.2,408.3 L361.8,406.8 L363.4,405.5 L365.0,404.3 L366.6,403.2 L368.3,402.3 L369.9,401.5 L371.5,400.9 L373.2,400.4 L374.8,400.0 L376.4,399.8 L378.1,399.8 L379.7,399.8 L405.9,402.4 L405.9,402.4" stroke="#f8f4ec" stroke-width="1.4" fill="none" stroke-linejoin="round" />
<path d="M373.6,595.7 L361.4,515.4 L360.9,511.9 L360.5,508.3 L360.2,504.6 L360.0,500.9 L359.9,497.1 L359.8,493.3 L359.9,489.5 L360.0,485.7 L360.3,481.8 L360.6,477.9 L361.0,474.1 L361.5,470.2 L362.1,466.4 L362.8,462.6 L363.6,458.9 L364.5,455.2 L365.4,451.6 L366.4,448.1 L367.5,444.6 L368.6,441.2 L369.9,437.9 L371.2,434.8 L372.5,431.7 L374.0,428.7 L375.4,425.9 L377.0,423.2 L378.6,420.7 L380.2,418.3 L381.9,416.0 L383.6,413.9 L385.3,412.0 L387.1,410.2 L388.9,408.6 L390.8,407.2 L392.6,406.0 L394.5,404.9 L396.3,404.0 L398.2,403.3 L400.1,402.8 L401.9,402.5 L403.8,402.4 L405.6,402.4 L407.4,402.7 L409.2,403.1 L411.0,403.7 L412.7,404.5 L414.4,405.5 L416.1,406.7 L417.7,408.1 L419.3,409.6 L420.8,411.3 L422.3,413.2 L423.7,415.2 L425.0,417.4 L426.3,419.8 L427.5,422.3 L428.6,424.9 L429.7,427.7 L430.7,430.6 L431.6,433.6 L432.4,436.8 L433.2,440.0 L433.8,443.3 L434.4,446.8 L442.5,500.2" stroke="#f8f4ec" stroke-width="1.4" fill="none" stroke-linejoin="round" />
<path d="M335.2,512.8 L361.4,515.4" stroke="#f8f4ec" stroke-width="1.4" fill="none" stroke-linecap="round" />
<path d="M408.2,471.4 L407.8,469.5 L407.4,467.7 L406.8,466.1 L406.2,464.6 L405.5,463.2 L404.7,462.0 L403.9,461.0 L403.0,460.2 L402.1,459.6 L401.1,459.2 L400.1,459.0 L399.0,459.0 L398.0,459.2 L396.9,459.7 L395.9,460.3 L394.9,461.2 L393.9,462.2 L392.9,463.4 L392.0,464.8 L391.2,466.4 L390.4,468.1 L389.7,469.9 L389.0,471.8 L388.5,473.8 L388.0,475.9 L387.7,478.0 L387.4,480.2 L387.3,482.4 L387.2,484.5 L387.2,486.6 L387.4,488.7 L387.6,490.7 L388.0,492.6 L388.4,494.4 L388.9,496.1 L389.6,497.6 L390.3,499.0 L391.0,500.2 L391.9,501.2 L392.8,502.0 L393.7,502.6 L394.7,503.0 L395.7,503.2 L396.8,503.2 L397.8,502.9 L398.9,502.5 L399.9,501.8 L400.9,501.0 L401.9,500.0 L402.9,498.7 L403.8,497.3 L404.6,495.8 L405.4,494.1 L406.1,492.3 L406.7,490.4 L407.3,488.3 L407.7,486.3 L408.1,484.1 L408.4,482.0 L408.5,479.8 L408.6,477.6 L408.5,475.5 L408.4,473.4 L408.2,471.4 Z" stroke="#f8f4ec" stroke-width="1.3" fill="none" stroke-linejoin="round" />
<path d="M347.4,593.1 L373.6,595.7" stroke="#f8f4ec" stroke-width="1.4" fill="none" stroke-linecap="round" />
<path d="M442.5,500.2 L369.5,568.8" stroke="#dddddd" stroke-width="1.0" fill="none" stroke-linecap="round" />
<path d="M967.4,654.6 L955.2,574.3 L954.7,571.2 L954.4,568.0 L954.1,564.8 L953.9,561.6 L953.7,558.3 L953.6,555.0 L953.6,551.7 L953.7,548.3 L953.8,544.9 L954.0,541.5 L954.3,538.1 L954.6,534.8 L955.0,531.4 L955.5,528.0 L956.0,524.7 L956.7,521.4 L957.3,518.1 L958.1,514.8 L958.9,511.7 L959.7,508.5 L960.7,505.4 L961.6,502.4 L962.7,499.5 L963.8,496.6 L964.9,493.8 L966.1,491.1 L967.3,488.5 L968.6,486.0 L969.9,483.6 L971.3,481.2 L972.7,479.0 L974.1,477.0 L975.6,475.0 L977.1,473.1 L978.6,471.4 L980.2,469.8 L981.8,468.3 L983.4,467.0 L985.0,465.8 L986.6,464.7 L988.2,463.8 L989.9,463.0 L991.5,462.4 L993.1,461.9 L994.8,461.5 L996.4,461.3 L998.0,461.2 L999.6,461.3 L1025.8,463.9 L1025.8,463.9" stroke="#f8f4ec" stroke-width="1.4" fill="none" stroke-linejoin="round" />
<path d="M993.5,657.2 L981.3,576.9 L980.9,573.3 L980.5,569.7 L980.2,566.1 L979.9,562.4 L979.8,558.6 L979.8,554.8 L979.8,551.0 L980.0,547.1 L980.2,543.3 L980.6,539.4 L981.0,535.5 L981.5,531.7 L982.1,527.9 L982.8,524.1 L983.6,520.4 L984.4,516.7 L985.3,513.1 L986.4,509.5 L987.4,506.1 L988.6,502.7 L989.8,499.4 L991.1,496.2 L992.5,493.2 L993.9,490.2 L995.4,487.4 L996.9,484.7 L998.5,482.2 L1000.2,479.8 L1001.8,477.5 L1003.6,475.4 L1005.3,473.5 L1007.1,471.7 L1008.9,470.1 L1010.7,468.7 L1012.6,467.4 L1014.4,466.4 L1016.3,465.5 L1018.1,464.8 L1020.0,464.3 L1021.9,464.0 L1023.7,463.8 L1025.6,463.9 L1027.4,464.1 L1029.2,464.6 L1031.0,465.2 L1032.7,466.0 L1034.4,467.0 L1036.1,468.2 L1037.7,469.6 L1039.3,471.1 L1040.8,472.8 L1042.2,474.7 L1043.6,476.7 L1045.0,478.9 L1046.3,481.3 L1047.5,483.8 L1048.6,486.4 L1049.7,489.2 L1050.7,492.1 L1051.6,495.1 L1052.4,498.2 L1053.1,501.5 L1053.8,504.8 L1054.4,508.3 L1066.6,588.6" stroke="#f8f4ec" stroke-width="1.4" fill="none" stroke-linejoin="round" />
<path d="M955.2,574.3 L981.3,576.9" stroke="#f8f4ec" stroke-width="1.4" fill="none" stroke-linecap="round" />
<path d="M1028.1,532.9 L1027.8,531.0 L1027.3,529.2 L1026.8,527.6 L1026.2,526.0 L1025.5,524.7 L1024.7,523.5 L1023.9,522.5 L1023.0,521.7 L1022.0,521.1 L1021.0,520.6 L1020.0,520.5 L1019.0,520.5 L1017.9,520.7 L1016.9,521.1 L1015.8,521.8 L1014.8,522.6 L1013.8,523.7 L1012.9,524.9 L1012.0,526.3 L1011.1,527.9 L1010.3,529.5 L1009.6,531.4 L1009.0,533.3 L1008.5,535.3 L1008.0,537.4 L1007.6,539.5 L1007.4,541.7 L1007.2,543.8 L1007.2,546.0 L1007.2,548.1 L1007.3,550.2 L1007.6,552.2 L1007.9,554.1 L1008.4,555.9 L1008.9,557.6 L1009.5,559.1 L1010.2,560.4 L1011.0,561.6 L1011.8,562.6 L1012.7,563.5 L1013.7,564.1 L1014.7,564.5 L1015.7,564.7 L1016.7,564.6 L1017.8,564.4 L1018.8,564.0 L1019.9,563.3 L1020.9,562.5 L1021.9,561.4 L1022.8,560.2 L1023.7,558.8 L1024.6,557.3 L1025.4,555.6 L1026.1,553.8 L1026.7,551.8 L1027.3,549.8 L1027.7,547.7 L1028.1,545.6 L1028.3,543.4 L1028.5,541.3 L1028.6,539.1 L1028.5,537.0 L1028.4,534.9 L1028.1,532.9 Z" stroke="#f8f4ec" stroke-width="1.3" fill="none" stroke-linejoin="round" />
<path d="M967.4,654.6 L993.5,657.2" stroke="#f8f4ec" stroke-width="1.4" fill="none" stroke-linecap="round" />
<path d="M993.5,657.2 L1066.6,588.6" stroke="#f0e8d8" stroke-width="1.8" fill="none" stroke-linecap="round" />
<path d="M585.7,1081.9 L484.8,418.1" stroke="#087070" stroke-width="1.05" fill="none"  stroke-dasharray="6 8" stroke-linecap="butt"/>
<clipPath id="c1clip"><rect x="600" y="240" width="40" height="50"/></clipPath>
<g clip-path="url(#c1clip)">
<path d="M484.8,418.1 L826.9,96.9" stroke="#087070" stroke-width="1.05" fill="none"  stroke-dasharray="6 8" stroke-linecap="butt"/>
</g>
<clipPath id="b4clip"><path d="M989.3,629.0 L979.6,578.5 L978.9,572.5 L978.3,566.4 L978.0,560.2 L978.0,553.8 L978.2,547.3 L978.7,540.9 L979.4,534.4 L980.3,528.0 L981.5,521.7 L982.8,515.5 L984.5,509.5 L986.3,503.7 L988.3,498.1 L990.5,492.8 L992.8,487.8 L995.3,483.1 L998.0,478.8 L1000.7,474.9 L1003.6,471.4 L1006.6,468.4 L1009.6,465.8 L1012.7,463.7 L1015.8,462.0 L1018.9,460.9 L1022.1,460.3 L1025.2,460.2 L1028.2,460.6 L1031.2,461.4 L1034.1,462.8 L1036.9,464.7 L1039.6,467.1 L1042.2,469.9 L1044.6,473.2 L1046.8,476.9 L1048.9,481.0 L1050.7,485.5 L1052.4,490.3 L1053.8,495.5 L1055.1,500.9 L1056.1,506.7 L1062.3,560.4 Z"/></clipPath>
<g clip-path="url(#b4clip)">
<path d="M980.0,289.6 L1081.0,953.4" stroke="#087070" stroke-width="1.05" fill="none"  stroke-dasharray="6 8" stroke-linecap="butt"/>
</g>
<path d="M1026.2,593.3 L1030.5,621.5" stroke="#b8b8b8" stroke-width="1.0" fill="none" stroke-linecap="round" />
<path d="M633.4,113.0 L627.5,72.9" stroke="#0b7177" stroke-width="1.3" fill="none" stroke-linecap="round" />
<path d="M622.4,81.6 L627.5,72.9 L635.0,82.8" stroke="#0b7177" stroke-width="1.3" fill="none" stroke-linejoin="round" />
<path d="M630.0,117.5 L633.0,111.5 L639.5,118.5" stroke="#0b7177" stroke-width="1.1" fill="none" stroke-linejoin="round" />
<path d="M627.3,172.2 L616.0,175.8" stroke="#0b7177" stroke-width="1.1" fill="none" stroke-linejoin="round" />
<path d="M614.8,169.5 L616.0,175.8 L622.0,175.5" stroke="#0b7177" stroke-width="1.1" fill="none" stroke-linejoin="round" />
<path d="M621.4,536.0 L604.6,552.0" stroke="#0b7177" stroke-width="1.3" fill="none" stroke-linecap="round" />
<path d="M603.8,545.5 L604.6,552.0 L616.0,548.0" stroke="#0b7177" stroke-width="1.3" fill="none" stroke-linejoin="round" />
<path d="M1017.0,543.0 L1061.0,547.0" stroke="#0b7177" stroke-width="1.3" fill="none" stroke-linecap="round" />
<path d="M1048.0,541.0 L1061.0,547.0 L1049.0,550.5" stroke="#0b7177" stroke-width="1.3" fill="none" stroke-linejoin="round" />
<path d="M1030.0,622.8 L1073.2,626.2" stroke="#0b7177" stroke-width="1.3" fill="none" stroke-linecap="round" />
<path d="M1062.0,620.5 L1073.2,626.2 L1060.5,629.6" stroke="#0b7177" stroke-width="1.3" fill="none" stroke-linejoin="round" />
<path d="M333.0,471.8 L327.0,474.5 L332.5,477.5" stroke="#0b7177" stroke-width="1.4" fill="none" stroke-linejoin="round" />
<path d="M397.9,481.1 L388.9,481.1" stroke="#dddddd" stroke-width="1.2" fill="none" stroke-linecap="round" />
<path d="M1017.9,542.6 L1006.9,541.6" stroke="#dddddd" stroke-width="1.2" fill="none" stroke-linecap="round" />
<circle cx="409.6" cy="560.9" r="1.6" fill="#8a1a8a"/>
<circle cx="1003.5" cy="619.4" r="1.6" fill="#8a1a8a"/>
<path d="M692.3,587.6 L695.5,584.2 L695.5,596.6" stroke="#ff00ff" stroke-width="1.3" fill="none" stroke-linejoin="round" />
<ellipse cx="702" cy="587.1" rx="2.5" ry="2.8" fill="none" stroke="#ff00ff" stroke-width="1.3"/>
<ellipse cx="702" cy="593.2" rx="2.9" ry="3.4" fill="none" stroke="#ff00ff" stroke-width="1.3"/>
<ellipse cx="711" cy="590.5" rx="2.9" ry="6.1" fill="none" stroke="#ff00ff" stroke-width="1.3"/>
<circle cx="719" cy="586.7" r="1.7" fill="none" stroke="#ff00ff" stroke-width="1.2"/>
<path d="M689.0,589.0 L725.0,591.8" stroke="#ff00ff" stroke-width="1.2" fill="none" stroke-linecap="round" />
<circle cx="706.8" cy="590.5" r="1.3" fill="#8a1a8a"/>
<path d="M214.0,715.8 L216.7,713.3" stroke="#0b7177" stroke-width="1.2" fill="none" stroke-linejoin="round" />
<path d="M216.0,718.1 L218.3,715.8" stroke="#0b7177" stroke-width="1.2" fill="none" stroke-linejoin="round" />
<path d="M218.3,717.2 L225.7,713.7" stroke="#0b7177" stroke-width="1.2" fill="none" stroke-linejoin="round" />
<path d="M220.2,719.5 L225.9,720.6" stroke="#0b7177" stroke-width="1.2" fill="none" stroke-linejoin="round" />
<path d="M225.2,718.6 L237.6,714.4" stroke="#0b7177" stroke-width="1.2" fill="none" stroke-linejoin="round" />
<path d="M230.3,713.3 L231.6,719.7" stroke="#0b7177" stroke-width="1.2" fill="none" stroke-linejoin="round" />
<path d="M234.4,721.3 L239.9,721.3" stroke="#0b7177" stroke-width="1.2" fill="none" stroke-linejoin="round" />
<path d="M238.1,720.2 L241.7,716.3 L240.4,714.0" stroke="#0b7177" stroke-width="1.2" fill="none" stroke-linejoin="round" />
<path d="M241.7,716.3 L248.0,715.3" stroke="#0b7177" stroke-width="1.2" fill="none" stroke-linejoin="round" />
<circle cx="210.9" cy="718.6" r="0.9" fill="#0b7177"/>
<path d="M59.1,791.1 L52.6,745.5" stroke="#0000ff" stroke-width="2.6" fill="none" stroke-linecap="round" />
<path d="M47.4,754.6 L52.6,745.5 L60.1,755.8" stroke="#0000ff" stroke-width="2.6" fill="none" stroke-linejoin="round" />
<path d="M59.1,791.1 L83.6,768.5" stroke="#00ff00" stroke-width="2.6" fill="none" stroke-linecap="round" />
<path d="M76.5,767.1 L83.6,768.5 L78.9,780.3" stroke="#00ff00" stroke-width="2.6" fill="none" stroke-linejoin="round" />
<path d="M59.1,791.1 L104.7,795.3" stroke="#ff0000" stroke-width="2.6" fill="none" stroke-linecap="round" />
<path d="M97.7,791.1 L104.7,795.3 L91.1,798.1" stroke="#ff0000" stroke-width="2.6" fill="none" stroke-linejoin="round" />
<rect x="331.2" y="508.8" width="8" height="8" fill="#00c800"/>
<rect x="357.4" y="511.4" width="8" height="8" fill="#00c800"/>
<rect x="339.3" y="562.2" width="8" height="8" fill="#00c800"/>
<rect x="343.4" y="589.1" width="8" height="8" fill="#00c800"/>
<rect x="369.6" y="591.7" width="8" height="8" fill="#00c800"/>
<rect x="430.4" y="442.8" width="8" height="8" fill="#00c800"/>
<rect x="393.9" y="477.1" width="8" height="8" fill="#00c800"/>
<rect x="951.2" y="570.3" width="8" height="8" fill="#00c800"/>
<rect x="977.3" y="572.9" width="8" height="8" fill="#00c800"/>
<rect x="1050.4" y="504.3" width="8" height="8" fill="#00c800"/>
<rect x="1013.9" y="538.6" width="8" height="8" fill="#00c800"/>
<rect x="1058.5" y="557.7" width="8" height="8" fill="#00c800"/>
<rect x="1062.6" y="584.6" width="8" height="8" fill="#00c800"/>
<rect x="1026.1" y="618.9" width="8" height="8" fill="#00c800"/>
<rect x="985.5" y="626.3" width="8" height="8" fill="#00c800"/>
<rect x="963.4" y="650.6" width="8" height="8" fill="#00c800"/>
<rect x="989.5" y="653.2" width="8" height="8" fill="#00c800"/>
<rect x="625.9" y="526.6" width="8" height="8" fill="#00c800"/>
<rect x="629.9" y="553.1" width="8" height="8" fill="#00c800"/>
<rect x="601.6" y="199.2" width="8" height="8" fill="#00c800"/>
<rect x="631.0" y="113.2" width="8" height="8" fill="#00c800"/>
</svg>
<div id="menu"><span style="left:8px">File</span><span style="left:51px">Edit</span><span style="left:97px">View</span><span style="left:150px">New Group</span><span style="left:251px">Sketch</span><span style="left:317px">Constrain</span><span style="left:406px">Analyze</span><span style="left:482px">Help</span></div>
<div id="tb"></div>
<svg width="1306" height="851" viewBox="0 0 1306 851">
<rect x="3" y="262" width="60" height="4" fill="#333333"/>
<rect x="3" y="471" width="60" height="4" fill="#333333"/>
<rect x="3" y="647" width="60" height="4" fill="#333333"/>
<path d="M7.5,90.4 L26.5,71.4" stroke="#ffffff" stroke-width="1.3" fill="none" />
<rect x="5.5" y="88.4" width="4" height="4" fill="#00c800"/>
<rect x="24.5" y="69.4" width="4" height="4" fill="#00c800"/>
<rect x="40.4" y="74.5" width="17.1" height="13" stroke="#ffffff" stroke-width="1.3" fill="none"/>
<rect x="38.4" y="72.5" width="4" height="4" fill="#00c800"/>
<rect x="55.5" y="72.5" width="4" height="4" fill="#00c800"/>
<rect x="38.4" y="85.5" width="4" height="4" fill="#00c800"/>
<rect x="55.5" y="85.5" width="4" height="4" fill="#00c800"/>
<circle cx="17" cy="113" r="9.8" stroke="#ffffff" stroke-width="1.3" fill="none"/>
<rect x="15.0" y="111.0" width="4" height="4" fill="#00c800"/>
<path d="M58.6,113 A9.8,9.8 0 1 0 49,122.8" stroke="#ffffff" stroke-width="1.3" fill="none" />
<rect x="46.9" y="111.0" width="4" height="4" fill="#00c800"/>
<rect x="56.6" y="111.0" width="4" height="4" fill="#00c800"/>
<rect x="47.3" y="120.5" width="4" height="4" fill="#00c800"/>
<path d="M7.5,156 L14.5,135 L19.5,135 L26.5,156 L22,156 L20.5,151 L13.5,151 L12,156 Z M14.5,147 L19.5,147 L18,139.5 L16,139.5 Z" stroke="#ffffff" stroke-width="1.1" fill="none" />
<rect x="39.5" y="137.2" width="18.8" height="15" stroke="#ffffff" stroke-width="1.1" fill="none"/>
<rect x="41.2" y="138.8" width="15.4" height="11.8" stroke="#ffffff" stroke-width="0.8" fill="none"/>
<path d="M42,149.5 L45.5,141.5 L48.5,147 L51,144.5 L55.5,149.5 Z" stroke="#6e6e6e" stroke-width="0.5" fill="#6e6e6e" />
<circle cx="54" cy="141" r="1.2" fill="#6e6e6e"/>
<rect x="37.5" y="135.2" width="4" height="4" fill="#00c800"/>
<rect x="56.3" y="135.2" width="4" height="4" fill="#00c800"/>
<rect x="37.5" y="150.2" width="4" height="4" fill="#00c800"/>
<rect x="56.3" y="150.2" width="4" height="4" fill="#00c800"/>
<path d="M6.1,168.3 H10.9 M8.5,168.3 V174.3" stroke="#ff00ff" stroke-width="1.1" fill="none" />
<path d="M8.4,185.7 C11,176 14,169.5 18.4,169.5 C23,169.5 25.5,178 27.4,187.9" stroke="#ffffff" stroke-width="1.3" fill="none" />
<rect x="10.3" y="174.8" width="4" height="4" fill="#00c800"/>
<rect x="22.6" y="175.3" width="4" height="4" fill="#00c800"/>
<path d="M58.6,167.3 C50,169 42,172 44.7,175.5 C47,178.5 54,181 52,184 C50,186.5 43,186.5 39.3,186.5" stroke="#ffffff" stroke-width="1.3" fill="none" />
<rect x="56.6" y="165.3" width="4" height="4" fill="#00c800"/>
<rect x="37.3" y="184.5" width="4" height="4" fill="#00c800"/>
<rect x="13.8" y="205.8" width="6" height="6" fill="#00c800"/>
<circle cx="46.3" cy="205.2" r="6.1" stroke="#00c800" stroke-width="1.1" fill="none"/>
<rect x="44.8" y="203.7" width="3" height="3" fill="#00c800"/>
<path d="M39.3,218.3 L58.3,213.4" stroke="#00c800" stroke-width="1.2" fill="none" />
<rect x="37.3" y="216.3" width="4" height="4" fill="#00c800"/>
<rect x="56.3" y="211.4" width="4" height="4" fill="#00c800"/>
<path d="M7.3,235.4 L26.5,244.5" stroke="#ffffff" stroke-width="1.3" fill="none" />
<path d="M24.6,233.4 L9.5,248.6" stroke="#ffffff" stroke-width="1.3" fill="none" />
<rect x="5.3" y="233.4" width="4" height="4" fill="#00c800"/>
<rect x="22.6" y="231.4" width="4" height="4" fill="#00c800"/>
<rect x="24.5" y="242.5" width="4" height="4" fill="#00c800"/>
<rect x="7.5" y="246.6" width="4" height="4" fill="#00c800"/>
<rect x="15.3" y="238.4" width="4" height="4" fill="#00c800"/>
<path d="M7.4,280.6 Q8.4,278.9 9.8,278.9 Q12,279 12,281.1 Q11.8,282.8 7.4,286 H12.4" stroke="#ff00ff" stroke-width="1.05" fill="none" />
<rect x="13.1" y="285" width="1.1" height="1.1" fill="#ff00ff"/>
<path d="M20.9,279 H16.6 L16.3,282.2 Q17.6,281.4 18.9,281.5 Q21,281.8 21,283.8 Q20.8,286 18.6,286 Q16.8,286 16.1,285" stroke="#ff00ff" stroke-width="1.05" fill="none" />
<path d="M25.6,286.3 V279 L21.8,284.3 H26.9" stroke="#ff00ff" stroke-width="1.05" fill="none" />
<path d="M7.3,290.5 L26.8,290.5" stroke="#ff00ff" stroke-width="1.1" fill="none" />
<path d="M7.3,288.2 L7.3,292.9" stroke="#ff00ff" stroke-width="1.1" fill="none" />
<path d="M26.8,288.2 L26.8,292.9" stroke="#ff00ff" stroke-width="1.1" fill="none" />
<path d="M7.3,295.2 L26.8,295.2" stroke="#ffffff" stroke-width="1.3" fill="none" />
<rect x="5.3" y="293.2" width="4" height="4" fill="#00c800"/>
<rect x="24.8" y="293.2" width="4" height="4" fill="#00c800"/>
<path d="M42.4,279.5 L41.4,288.2 L39.4,297.9 L49.9,296.3 L58.7,295.4" stroke="#ffffff" stroke-width="1.3" fill="none" />
<rect x="40.4" y="277.5" width="4" height="4" fill="#00c800"/>
<rect x="37.4" y="295.9" width="4" height="4" fill="#00c800"/>
<rect x="56.7" y="293.4" width="4" height="4" fill="#00c800"/>
<path d="M41.4,288.2 Q47.5,288.8 49.5,295.6" stroke="#ff00ff" stroke-width="1.1" fill="none" />
<path d="M45,280.2 H50.1 L47.2,287" stroke="#ff00ff" stroke-width="1.05" fill="none" />
<path d="M54.2,287 V280.2 L50.6,285.2 H55.6" stroke="#ff00ff" stroke-width="1.05" fill="none" />
<circle cx="58.1" cy="282" r="1.7" fill="none" stroke="#ff00ff" stroke-width="1.05"/>
<path d="M14.1,315.2 V321.8 M19.9,315.2 V321.8 M14.1,318.5 H19.9" stroke="#ff00ff" stroke-width="1.05" fill="none" />
<path d="M7.3,325.2 L26.8,325.2" stroke="#ffffff" stroke-width="1.3" fill="none" />
<rect x="5.3" y="323.2" width="4" height="4" fill="#00c800"/>
<rect x="24.8" y="323.2" width="4" height="4" fill="#00c800"/>
<path d="M44.4,311.3 L44.4,330.5" stroke="#ffffff" stroke-width="1.3" fill="none" />
<rect x="42.4" y="309.3" width="4" height="4" fill="#00c800"/>
<rect x="42.4" y="328.5" width="4" height="4" fill="#00c800"/>
<path d="M48.1,317 L51.6,324.6 L55.2,317" stroke="#ff00ff" stroke-width="1.05" fill="none" />
<path d="M7.3,351.0 L26.8,348.4" stroke="#ffffff" stroke-width="1.3" fill="none" />
<path d="M7.3,358.0 L26.8,355.4" stroke="#ffffff" stroke-width="1.3" fill="none" />
<rect x="5.3" y="349.0" width="4" height="4" fill="#00c800"/>
<rect x="24.8" y="346.4" width="4" height="4" fill="#00c800"/>
<rect x="5.3" y="356.0" width="4" height="4" fill="#00c800"/>
<rect x="24.8" y="353.4" width="4" height="4" fill="#00c800"/>
<path d="M39.3,347.3 L39.3,362.4 L58.4,362.4" stroke="#ffffff" stroke-width="1.3" fill="none" />
<rect x="37.3" y="345.3" width="4" height="4" fill="#00c800"/>
<rect x="37.3" y="360.4" width="4" height="4" fill="#00c800"/>
<rect x="56.4" y="360.4" width="4" height="4" fill="#00c800"/>
<path d="M50.5,346.0 L50.5,357.5" stroke="#ff00ff" stroke-width="1.1" fill="none" />
<path d="M44.0,357.5 L57.0,357.5" stroke="#ff00ff" stroke-width="1.1" fill="none" />
<path d="M7.3,383.4 L16.4,380.3 L26.4,375.3" stroke="#ffffff" stroke-width="1.3" fill="none" />
<path d="M16.4,380.3 L23.5,394.4" stroke="#ffffff" stroke-width="1.3" fill="none" />
<rect x="5.3" y="381.4" width="4" height="4" fill="#00c800"/>
<rect x="14.4" y="378.3" width="4" height="4" fill="#00c800"/>
<rect x="24.4" y="373.3" width="4" height="4" fill="#00c800"/>
<rect x="21.5" y="392.4" width="4" height="4" fill="#00c800"/>
<rect x="13" y="377.3" width="7" height="6.3" stroke="#ff00ff" stroke-width="1.1" fill="none"/>
<path d="M39.3,385.2 L46.5,385.2" stroke="#ff00ff" stroke-width="1.1" fill="none" />
<path d="M43.5,382.0 L46.8,385.2 L43.5,388.4" stroke="#ff00ff" stroke-width="1.1" fill="none" />
<path d="M51.2,385.2 L58.7,385.2" stroke="#ff00ff" stroke-width="1.1" fill="none" />
<path d="M54.5,382.0 L51.2,385.2 L54.5,388.4" stroke="#ff00ff" stroke-width="1.1" fill="none" />
<path d="M15.3,408.5 L7.3,426.0 L26.4,424.3 L15.3,408.5" stroke="#ffffff" stroke-width="1.3" fill="none" />
<rect x="13.3" y="406.5" width="4" height="4" fill="#00c800"/>
<rect x="5.3" y="424.0" width="4" height="4" fill="#00c800"/>
<rect x="24.4" y="422.3" width="4" height="4" fill="#00c800"/>
<path d="M8.0,416.5 L12.5,417.0" stroke="#ff00ff" stroke-width="1" fill="none" />
<path d="M20.5,418.0 L25.0,414.5" stroke="#ff00ff" stroke-width="1" fill="none" />
<path d="M17.5,422.0 L17.5,428.0" stroke="#ff00ff" stroke-width="1" fill="none" />
<path d="M40.0,427.2 L46.4,407.3" stroke="#0f8a8a" stroke-width="1.2" fill="none" />
<path d="M41.5,412.0 L46.4,407.3 L48.8,413.0" stroke="#0f8a8a" stroke-width="1.2" fill="none" />
<path d="M50.5,426.7 L57.0,406.3" stroke="#0f8a8a" stroke-width="1.2" fill="none" />
<path d="M51.8,411.5 L57.0,406.3 L59.0,412.0" stroke="#0f8a8a" stroke-width="1.2" fill="none" />
<path d="M6.0,444.0 L28.0,455.5" stroke="#ffffff" stroke-width="1.3" fill="none" />
<path d="M13.5,437.5 L20.5,459.5" stroke="#ffffff" stroke-width="1.3" fill="none" />
<path d="M9.5,445.5 C10,441 13,440 15.5,441.5 C20,443 24,446 24.5,450.5" stroke="#ff00ff" stroke-width="1.1" fill="none" />
<path d="M38.5,453.8 V445.3 H42.6 Q43.4,445.5 43.4,446.5 V448.2 Q43.4,449.2 42.4,449.2 H38.5 M40.2,450.2 L43.6,453.8" stroke="#ff00ff" stroke-width="1.1" fill="none" />
<path d="M51.9,445.3 H46.6 V453.8 H51.9 M46.6,449.3 H51" stroke="#ff00ff" stroke-width="1.1" fill="none" />
<path d="M60,445.3 H54.6 V453.8 M54.6,449.3 H59" stroke="#ff00ff" stroke-width="1.1" fill="none" />
<path d="M7.5,492.4 L21.7,492.4 L21.7,506.6 L7.5,506.6 L7.5,492.4" stroke="#707070" stroke-width="1.1" fill="none" />
<path d="M7.5,492.4 L12.6,487.3" stroke="#707070" stroke-width="1.1" fill="none" />
<path d="M21.7,492.4 L26.4,487.3" stroke="#707070" stroke-width="1.1" fill="none" />
<path d="M21.7,506.6 L26.4,501.5" stroke="#707070" stroke-width="1.1" fill="none" />
<path d="M7.5,506.6 L12.6,501.5" stroke="#707070" stroke-width="0.9" fill="none" />
<path d="M12.6,487.3 L26.4,487.3 L26.4,501.5" stroke="#ffffff" stroke-width="1.1" fill="none" />
<path d="M12.6,488.5 L12.6,501.5 L25.5,501.5" stroke="#ffffff" stroke-width="1.0" fill="none" stroke-dasharray="1.6 1.4"/>
<path d="M40.2,490.5 L42,488 L45,487.3 L53,487.3 L56,488 L57.7,490.5 L57.7,503.5 L56,506 L53,506.6 L45,506.6 L42,506 L40.2,503.5 Z" stroke="#707070" stroke-width="1.1" fill="none" />
<path d="M40.2,490.5 L42,493 L45,493.8 L53,493.8 L56,493 L57.7,490.5" stroke="#707070" stroke-width="1.0" fill="none" />
<path d="M41.0,499.7 L57.0,499.7" stroke="#707070" stroke-width="1.0" fill="none" stroke-dasharray="1.6 1.4"/>
<path d="M49.3,491.0 L49.3,505.0" stroke="#ffffff" stroke-width="1.0" fill="none" stroke-dasharray="1.6 1.4"/>
<path d="M49.3,491.0 L51.0,491.5 L54.4,494.0" stroke="#ffffff" stroke-width="1.0" fill="none" />
<path d="M54.4,494.0 L54.4,505.5" stroke="#ffffff" stroke-width="1.1" fill="none" />
<path d="M15.8,519.7 L25.3,524.1 L8.9,530.3 L21.7,534.6" stroke="#707070" stroke-width="4.2" fill="none" stroke-linejoin="round"/>
<path d="M15.8,519.7 L25.3,524.1 L8.9,530.3 L21.7,534.6" stroke="#1f1f1f" stroke-width="2.0" fill="none" stroke-linejoin="round"/>
<circle cx="23.5" cy="535.4" r="2.1" stroke="#ffffff" stroke-width="1.1" fill="#1f1f1f"/>
<path d="M40.2,522.5 L42,520 L45,519.3 L53,519.3 L56,520 L57.7,522.5 L57.7,535.3 L56,537.8 L53,538.3 L45,538.3 L42,537.8 L40.2,535.3 Z" stroke="#707070" stroke-width="1.1" fill="none" />
<path d="M40.2,522.5 L42,525 L45,525.6 L49.3,525.6" stroke="#707070" stroke-width="1.0" fill="none" />
<path d="M41.0,531.7 L49.0,531.7" stroke="#707070" stroke-width="1.0" fill="none" stroke-dasharray="1.6 1.4"/>
<path d="M49.3,523.3 L54.4,525.2 L54.4,537.5 L49.3,535.5 L49.3,523.3" stroke="#ffffff" stroke-width="1.1" fill="none" />
<rect x="8.0" y="554.0" width="8" height="4" transform="rotate(-45 12.0 556.0)" stroke="#ffffff" stroke-width="1.1" fill="none"/>
<rect x="18.5" y="554.0" width="8" height="4" transform="rotate(45 22.5 556.0)" stroke="#ffffff" stroke-width="1.1" fill="none"/>
<rect x="8.0" y="565.0" width="8" height="4" transform="rotate(45 12.0 567.0)" stroke="#ffffff" stroke-width="1.1" fill="none"/>
<rect x="18.5" y="565.0" width="8" height="4" transform="rotate(-45 22.5 567.0)" stroke="#ffffff" stroke-width="1.1" fill="none"/>
<rect x="38.3" y="568.3" width="6.5" height="3.5" stroke="#ffffff" stroke-width="1.1" fill="none"/>
<rect x="43.3" y="561.8" width="6.5" height="3.5" stroke="#ffffff" stroke-width="1.1" fill="none"/>
<rect x="48.3" y="555.3" width="6.5" height="3.5" stroke="#ffffff" stroke-width="1.1" fill="none"/>
<rect x="53.3" y="549.8" width="6.5" height="3.5" stroke="#ffffff" stroke-width="1.1" fill="none"/>
<rect x="8.2" y="584.2" width="17.7" height="17.5" stroke="#707070" stroke-width="1.1" fill="none"/>
<path d="M11.5,587.3 L22.4,598.5" stroke="#ffffff" stroke-width="1.3" fill="none" />
<rect x="9.5" y="585.3" width="4" height="4" fill="#00c800"/>
<rect x="20.4" y="596.5" width="4" height="4" fill="#00c800"/>
<path d="M38.3,597.6 L45.3,590.2 L59.7,590.2 L52.7,597.6 L38.3,597.6" stroke="#707070" stroke-width="1.1" fill="none" />
<path d="M48.6,583.2 L48.6,602.6" stroke="#ffffff" stroke-width="1.3" fill="none" />
<rect x="46.6" y="581.2" width="4" height="4" fill="#00c800"/>
<rect x="46.6" y="600.6" width="4" height="4" fill="#00c800"/>
<path d="M8,616.2 L26,616.2 L26,622.8 L22.2,622.8 L22.2,619.6 L11.8,619.6 L11.8,622.8 L8,622.8 Z" stroke="#ffffff" stroke-width="1.5" fill="#300000" />
<path d="M8,634 L26,634 L26,629.6 L21.5,629.6 L21.5,626.6 L12.5,626.6 L12.5,629.6 L8,629.6 Z" stroke="#ffffff" stroke-width="1.5" fill="#000030" />
<path d="M6.1,666.2 L13.4,662.4 L21.1,666.4 L21.1,672.6 L27.7,676 L27.7,680.8 L20.2,684.3 L6.1,677.2 Z" stroke="#ffffff" stroke-width="1.1" fill="none" />
<path d="M6.1,666.2 L13.6,670.0 L21.1,666.4" stroke="#ffffff" stroke-width="1.0" fill="none" />
<path d="M13.6,670.0 L13.6,674.6 L20.2,678.2 L27.7,676.0" stroke="#ffffff" stroke-width="1.0" fill="none" />
<path d="M13.6,674.6 L21.1,672.6" stroke="#ffffff" stroke-width="1.0" fill="none" />
<path d="M20.2,678.2 L20.2,684.3" stroke="#ffffff" stroke-width="1.0" fill="none" />
<path d="M40.1,663.0 L48.6,663.0 L48.6,674.5 L57.8,674.5 L57.8,682.8 L40.1,682.8 L40.1,663.0" stroke="#ffffff" stroke-width="1.2" fill="none" />
</svg>
</body></html>
